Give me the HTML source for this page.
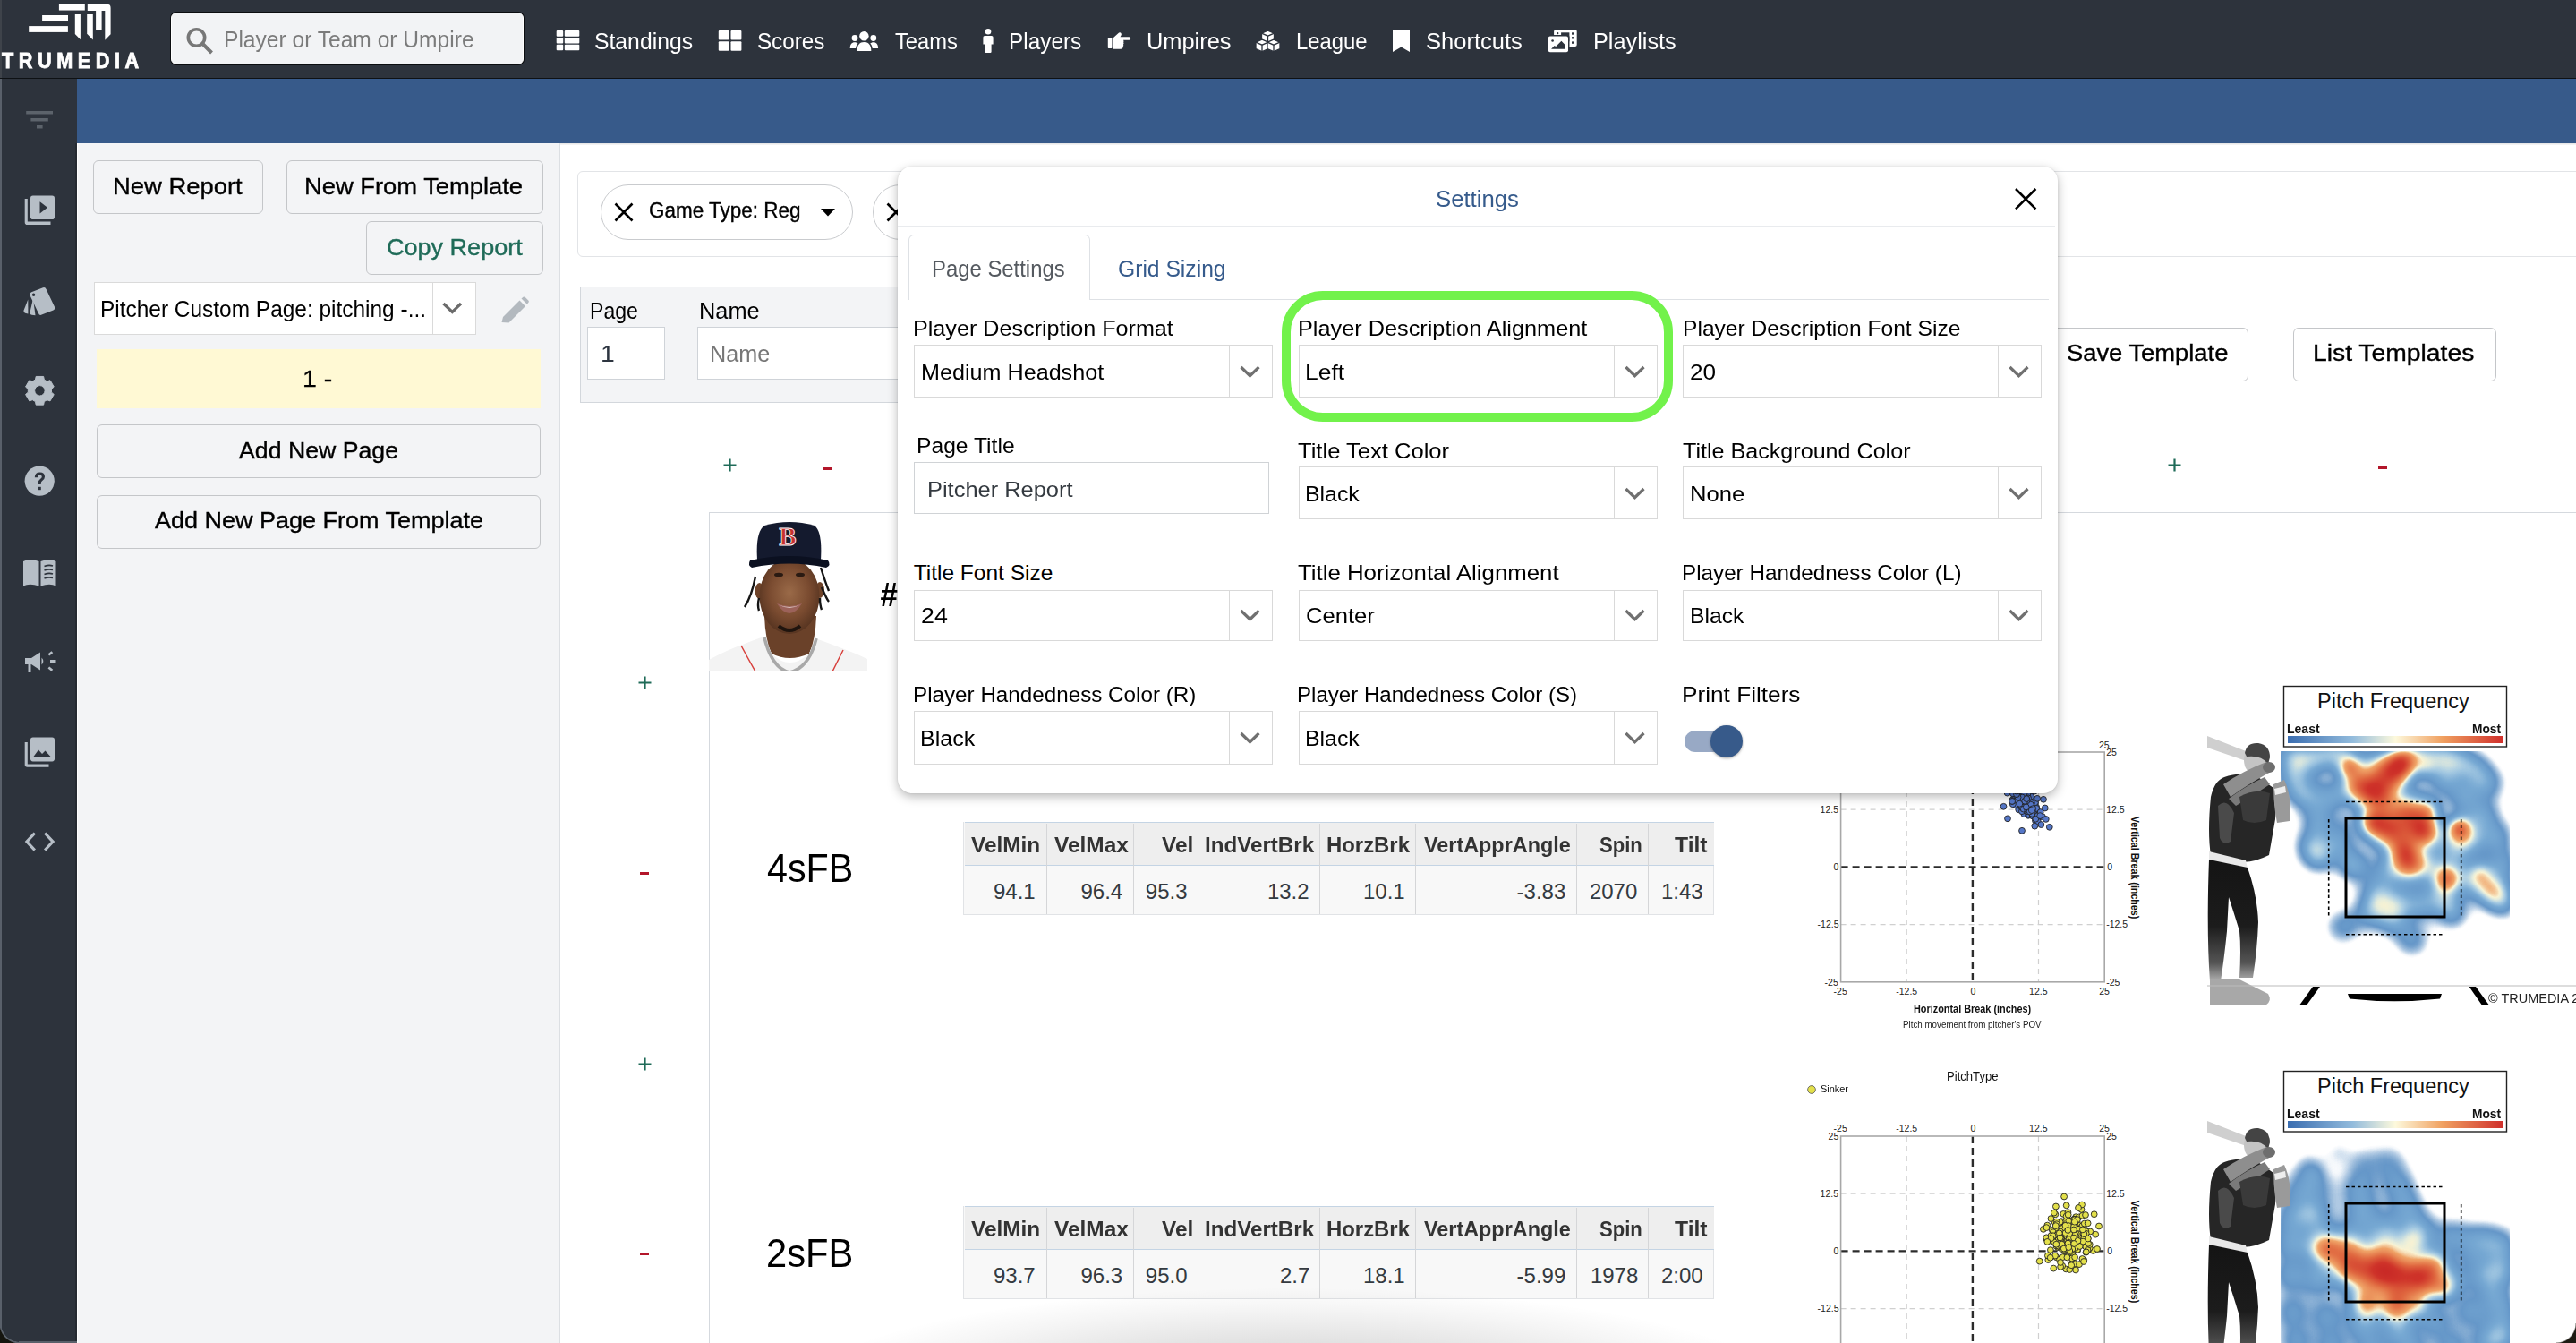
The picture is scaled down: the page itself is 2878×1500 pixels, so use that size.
<!DOCTYPE html>
<html><head><meta charset="utf-8"><title>TruMedia Settings</title>
<style>
html,body{margin:0;padding:0;}
body{width:2878px;height:1500px;position:relative;overflow:hidden;background:#fff;font-family:"Liberation Sans",sans-serif;}
div,span,svg{box-sizing:border-box;}
.t{position:absolute;white-space:pre;line-height:1;transform-origin:0 0;}
.ab{position:absolute;display:block;}
</style></head><body>
<div class="ab" style="left:0px;top:0px;width:2878px;height:87px;background:#2d333c;"></div>
<div class="ab" style="left:0px;top:87px;width:2878px;height:1px;background:#0e1114;"></div>
<div class="ab" style="left:0px;top:88px;width:86px;height:1412px;background:#2d333c;"></div>
<div class="ab" style="left:84px;top:160px;width:2px;height:1340px;background:#252a31;"></div>
<div class="ab" style="left:86px;top:88px;width:2792px;height:72px;background:#375a8a;"></div>
<div class="ab" style="left:86px;top:160px;width:539px;height:1340px;background:#f3f4f6;"></div>
<div class="ab" style="left:86px;top:160px;width:1px;height:1340px;background:#ffffff;"></div>
<div class="ab" style="left:625px;top:160px;width:1px;height:1340px;background:#dcdfe3;"></div>
<div class="ab" style="left:626px;top:160px;width:2252px;height:2px;background:linear-gradient(#e2e2e2,#f8f8f8);"></div>
<div class="ab" style="left:0px;top:88px;width:2px;height:1412px;background:#59606a;"></div>
<div class="ab" style="left:0px;top:0px;width:2px;height:87px;background:#3e434a;"></div>
<svg class="ab" style="left:0px;top:0px;" width="160" height="86" viewBox="0 0 160 86">
<g fill="#fff">
<rect x="32.2" y="29.1" width="43.7" height="6.8"/>
<rect x="47.1" y="17" width="28.9" height="6.7"/>
<rect x="65.9" y="4.9" width="28.9" height="6.65"/>
<polygon points="83.8,16.1 89.9,16.1 89.9,44.2 83.8,38"/>
<polygon points="97.2,16 103.8,16 103.8,44.5 97.2,37.8"/>
<path d="M97.8,4.9 H121 Q123.6,4.9 123.6,9 V38.2 L117.3,44.7 V11.9 H113.6 V33.5 H107.1 V11.9 H97.8 Z"/>
</g></svg>
<span class="t" style="left:2.20px;top:56.62px;font-size:23.5px;color:#fff;font-weight:700;letter-spacing:6px;transform:scaleX(0.9230);-webkit-text-stroke:0.8px #fff;">TRUMEDIA</span>
<div class="ab" style="left:191px;top:13.7px;width:394px;height:58px;background:#f2f3f5;border:1px solid #fff;border-radius:6px;box-shadow:0 0 0 1px #0b0d10;"></div>
<svg class="ab" style="left:205px;top:28px;" width="36" height="36" viewBox="0 0 36 36"><circle cx="14.5" cy="14" r="9.2" fill="none" stroke="#777" stroke-width="3.6"/><line x1="21" y1="20.5" x2="31.5" y2="31" stroke="#777" stroke-width="4"/></svg>
<span class="t" style="left:250.11px;top:30.80px;font-size:26px;color:#7b7b7b;transform:scaleX(0.9454);">Player or Team or Umpire</span>
<svg class="ab" style="left:621px;top:33px;" width="28" height="26" viewBox="0 0 28 26"><g fill="#fff">
<rect x="0.7" y="1.1" width="7.5" height="6.7" rx="1"/><rect x="9.8" y="1.1" width="16.5" height="6.7" rx="1"/>
<rect x="0.7" y="8.9" width="7.5" height="6.5" rx="1"/><rect x="9.8" y="8.9" width="16.5" height="6.5" rx="1"/>
<rect x="0.7" y="16.7" width="7.5" height="6.6" rx="1"/><rect x="9.8" y="16.7" width="16.5" height="6.6" rx="1"/>
</g></svg>
<span class="t" style="left:664.40px;top:33.20px;font-size:26px;color:#fff;transform:scaleX(0.9513);">Standings</span>
<svg class="ab" style="left:802px;top:33px;" width="28" height="26" viewBox="0 0 28 26"><g fill="#fff">
<rect x="0.8" y="1.1" width="11.7" height="10.5" rx="1"/><rect x="14.5" y="1.1" width="11.9" height="10.5" rx="1"/>
<rect x="0.8" y="13.2" width="11.7" height="10.5" rx="1"/><rect x="14.5" y="13.2" width="11.9" height="10.5" rx="1"/>
</g></svg>
<span class="t" style="left:845.64px;top:33.20px;font-size:26px;color:#fff;transform:scaleX(0.9295);">Scores</span>
<svg class="ab" style="left:949px;top:33px;" width="34" height="26" viewBox="0 0 34 26"><g fill="#fff">
<circle cx="16.4" cy="7.2" r="5.2"/>
<path d="M8.5,24 C8.5,17 11.5,14 16.4,14 C21.3,14 24.3,17 24.3,24 Z"/>
<circle cx="6" cy="9.5" r="3.4"/><circle cx="26.8" cy="9.5" r="3.4"/>
<path d="M0.7,21 C0.7,16.5 2.5,14.2 6,14.2 C7.5,14.2 8.5,14.8 9.5,15.5 C8,17 7.3,19 7.1,21 Z"/>
<path d="M32.1,21 C32.1,16.5 30.3,14.2 26.8,14.2 C25.3,14.2 24.3,14.8 23.3,15.5 C24.8,17 25.5,19 25.7,21 Z"/>
</g></svg>
<span class="t" style="left:999.89px;top:33.20px;font-size:26px;color:#fff;transform:scaleX(0.9133);">Teams</span>
<svg class="ab" style="left:1096px;top:31px;" width="16" height="29" viewBox="0 0 16 29"><g fill="#fff">
<circle cx="8" cy="4.3" r="3.3"/>
<path d="M4.2,9 H11.8 Q13.6,9 13.6,10.8 V18.5 H11.6 V26.8 Q11.6,28 10.4,28 H5.6 Q4.4,28 4.4,26.8 V18.5 H2.4 V10.8 Q2.4,9 4.2,9 Z"/>
</g></svg>
<span class="t" style="left:1126.93px;top:33.20px;font-size:26px;color:#fff;transform:scaleX(0.9369);">Players</span>
<svg class="ab" style="left:1236px;top:33px;" width="30" height="26" viewBox="0 0 30 26"><g fill="#fff">
<rect x="1.8" y="9" width="4.6" height="12" rx="0.8"/>
<path d="M7.5,9.5 L13,4.5 Q15,2.5 16.5,4 Q17.5,5.5 16,7.5 L15.5,8.3 H25.5 Q27.2,8.3 27.2,10 Q27.2,11.8 25.5,11.8 H19 Q20,13 19.2,14.3 Q20,15.5 19,16.8 Q19.8,18 18.5,19.3 Q18.7,21.8 16,21.8 H7.5 Z"/>
</g></svg>
<span class="t" style="left:1281.05px;top:33.20px;font-size:26px;color:#fff;transform:scaleX(0.9766);">Umpires</span>
<svg class="ab" style="left:1402px;top:33px;" width="30" height="26" viewBox="0 0 30 26"><g fill="#fff" stroke="#2d333c" stroke-width="1.3" stroke-linejoin="round">
<path d="M14.5,1.2 L21.5,4.2 V11.7 L14.5,14.7 L7.5,11.7 V4.2 Z"/>
<path d="M8,11.2 L15,14.2 V21.7 L8,24.7 L1,21.7 V14.2 Z"/>
<path d="M21,11.2 L28,14.2 V21.7 L21,24.7 L14,21.7 V14.2 Z"/>
</g><g fill="none" stroke="#2d333c" stroke-width="1.3"><path d="M7.5,4.2 L14.5,7.2 L21.5,4.2 M14.5,7.2 V14.7"/><path d="M1,14.2 L8,17.2 L15,14.2 M8,17.2 V24.7"/><path d="M14,14.2 L21,17.2 L28,14.2 M21,17.2 V24.7"/></g>
<g fill="none" stroke="#fff" stroke-width="0"></g></svg>
<span class="t" style="left:1447.66px;top:33.20px;font-size:26px;color:#fff;transform:scaleX(0.9179);">League</span>
<svg class="ab" style="left:1554px;top:32px;" width="23" height="28" viewBox="0 0 23 28"><path fill="#fff" d="M2,1 H21 V26 L11.5,20.5 L2,26 Z"/></svg>
<span class="t" style="left:1593.04px;top:33.20px;font-size:26px;color:#fff;transform:scaleX(0.9813);">Shortcuts</span>
<svg class="ab" style="left:1728px;top:32px;" width="36" height="28" viewBox="0 0 36 28"><rect x="8.1" y="0.9" width="25.6" height="19.2" rx="2" fill="#fff"/>
<rect x="16.1" y="4.3" width="9.3" height="10" fill="#2d333c"/>
<circle cx="12.3" cy="5.2" r="1.1" fill="#2d333c"/>
<rect x="28" y="4.3" width="2.7" height="2.4" fill="#2d333c"/><rect x="28" y="9.1" width="2.7" height="2.4" fill="#2d333c"/><rect x="28" y="14.4" width="2.7" height="2.4" fill="#2d333c"/>
<rect x="0.3" y="7.1" width="25.2" height="20.6" rx="2.5" fill="#2d333c"/>
<rect x="1.8" y="8.6" width="22.2" height="17.6" rx="2" fill="#fff"/>
<path d="M5.1,22.8 L8.7,18.9 L10.2,20.1 L16.4,13.7 L20.7,18.3 V22.8 Z" fill="#2d333c"/>
<circle cx="6.6" cy="13.5" r="1.3" fill="#2d333c"/></svg>
<span class="t" style="left:1779.55px;top:33.20px;font-size:26px;color:#fff;transform:scaleX(0.9728);">Playlists</span>
<svg class="ab" style="left:26px;top:120px;" width="36" height="28" viewBox="0 0 36 28"><g fill="#5c636b"><rect x="3.2" y="4" width="29.8" height="3.5"/><rect x="8.4" y="12" width="19.4" height="3.5"/><rect x="15" y="20" width="6.6" height="3.5"/></g></svg>
<svg class="ab" style="left:26px;top:216px;" width="38" height="38" viewBox="0 0 38 38"><g fill="#b6bec6">
<path d="M1.7,6 H4.8 V31.5 H30.5 V35 H4.5 Q1.7,35 1.7,32.2 Z"/>
<rect x="8" y="2.6" width="27" height="26.4" rx="2.8"/>
</g><path d="M18.5,9.2 L27,15.8 L18.5,22.4 Z" fill="#2d333c"/></svg>
<svg class="ab" style="left:24px;top:318px;" width="40" height="38" viewBox="0 0 40 38"><g fill="#b6bec6">
<path d="M7.3,16.5 L2.5,28.8 Q2,31 4,31.8 L7.4,32.6 Z"/>
<path d="M13,15.5 L9.3,31.5 Q9.2,33.5 11.5,33.8 L15.5,34.2 Z"/>
<path d="M11.2,8.3 L24,3.3 Q26.6,2.4 27.6,5 L37,24.8 Q38,27.3 35.5,28.4 L22.6,33.6 Q20,34.6 19,32 L9.5,12 Q8.5,9.4 11.2,8.3 Z"/>
</g><circle cx="13.6" cy="11.3" r="1.7" fill="#2d333c"/></svg>
<svg class="ab" style="left:26px;top:418px;" width="38" height="38" viewBox="0 0 38 38"><path fill="#b6bec6" stroke="#b6bec6" stroke-width="1" stroke-linejoin="round" fill-rule="evenodd" d="M31.47,16.46 L34.24,14.06 L30.00,6.70 L26.53,7.90 L23.34,6.06 L22.64,2.46 L14.16,2.46 L13.46,6.06 L10.27,7.90 L6.80,6.70 L2.56,14.06 L5.33,16.46 L5.33,20.14 L2.56,22.54 L6.80,29.90 L10.27,28.70 L13.46,30.54 L14.16,34.14 L22.64,34.14 L23.34,30.54 L26.53,28.70 L30.00,29.90 L34.24,22.54 L31.47,20.14 Z M24.10,18.30 A5.7,5.7 0 1 0 12.70,18.30 A5.7,5.7 0 1 0 24.10,18.30 Z"/></svg>
<svg class="ab" style="left:26px;top:519px;" width="38" height="38" viewBox="0 0 38 38"><circle cx="18.2" cy="18.2" r="16.6" fill="#b6bec6"/>
<path d="M12.8,14.2 Q12.8,8.5 18.5,8.5 Q24,8.5 24,13.5 Q24,16.5 21,18.2 Q19.8,19 19.8,21 V22 H16.5 V20.5 Q16.5,17.5 19,16 Q20.8,15 20.8,13.6 Q20.8,11.6 18.4,11.6 Q16,11.6 16,14.2 Z" fill="#2d333c"/>
<rect x="16.5" y="24.8" width="3.3" height="3.4" fill="#2d333c"/></svg>
<svg class="ab" style="left:24px;top:622px;" width="42" height="36" viewBox="0 0 42 36"><g fill="#b6bec6">
<path d="M2,5 Q9,1 19.5,5 V32.5 Q9,29 2,32.5 Z"/>
<path d="M21.5,5 Q32,1 38.5,5 V32.5 Q32,29 21.5,32.5 Z"/>
</g><g stroke="#2d333c" stroke-width="1.6" fill="none"><path d="M25.5,10.5 Q30.5,8.5 35,10"/><path d="M25.5,15 Q30.5,13 35,14.5"/><path d="M25.5,19.5 Q30.5,17.5 35,19"/><path d="M25.5,24 Q30.5,22 35,23.5"/></g></svg>
<svg class="ab" style="left:26px;top:724px;" width="38" height="32" viewBox="0 0 38 32"><g fill="#b6bec6">
<path d="M2,11 H9 L19,4.5 V24.5 L9,18 H8.5 V27 H5.5 V18 H2 Z"/>
<path d="M20.5,10.5 Q24,14.5 20.5,18.5 Z"/>
<rect x="30" y="13" width="6.5" height="3"/>
<path d="M27.5,6.5 L31.5,3.2 L33.2,5.2 L29.2,8.5 Z"/>
<path d="M27.5,22.5 L31.5,25.8 L33.2,23.8 L29.2,20.5 Z"/>
</g></svg>
<svg class="ab" style="left:26px;top:821px;" width="38" height="38" viewBox="0 0 38 38"><g fill="#b6bec6">
<path d="M1.7,8 H4.8 V32.5 H28.5 V35.8 H4.5 Q1.7,35.8 1.7,33 Z"/>
<rect x="8" y="2.4" width="27" height="27" rx="2.8"/>
</g><path d="M11.5,24 L17,16.5 L21,21 L24.5,17.5 L30.5,24 Z" fill="#2d333c"/></svg>
<svg class="ab" style="left:26px;top:926px;" width="38" height="28" viewBox="0 0 38 28"><g fill="none" stroke="#b6bec6" stroke-width="3.3"><path d="M12.8,4.5 L4,14 L12.8,23.5"/><path d="M24.2,4.5 L33,14 L24.2,23.5"/></g></svg>
<div class="ab" style="left:104px;top:179px;width:190px;height:60px;background:#f3f4f6;border:1px solid #c4c6c9;border-radius:6px;"></div>
<span class="t" style="left:125.65px;top:196.02px;font-size:25.5px;color:#000;transform:scaleX(1.0742);-webkit-text-stroke:0.35px currentColor;">New Report</span>
<div class="ab" style="left:319.5px;top:179px;width:287.5px;height:60px;background:#f3f4f6;border:1px solid #c4c6c9;border-radius:6px;"></div>
<span class="t" style="left:340.16px;top:196.02px;font-size:25.5px;color:#000;transform:scaleX(1.0720);-webkit-text-stroke:0.35px currentColor;">New From Template</span>
<div class="ab" style="left:409px;top:247px;width:198px;height:60px;background:#f3f4f6;border:1px solid #c4c6c9;border-radius:6px;"></div>
<span class="t" style="left:431.94px;top:264.32px;font-size:25.5px;color:#1f6b58;transform:scaleX(1.0599);-webkit-text-stroke:0.35px currentColor;">Copy Report</span>
<div class="ab" style="left:104.5px;top:314.5px;width:427px;height:59px;background:#fff;border:1px solid #dadada;"></div>
<div class="ab" style="left:483px;top:315px;width:1px;height:58px;background:#dadada;"></div>
<svg class="ab" style="left:493px;top:336px;" width="25" height="18" viewBox="0 0 25 18"><path d="M2.5,3 L12.3,12.5 L22,3" fill="none" stroke="#6b6b6b" stroke-width="3.2"/></svg>
<span class="t" style="left:111.92px;top:331.70px;font-size:26px;color:#000;transform:scaleX(0.9399);">Pitcher Custom Page: pitching -...</span>
<svg class="ab" style="left:556px;top:328px;" width="38" height="36" viewBox="0 0 38 36"><path fill="#b3b9bf" d="M4.5,29 L6,23 L24.5,4.5 L31,11 L12.5,29.5 Z M26.5,2.5 L28.5,0.8 Q29.5,0 30.5,0.8 L34.5,4.8 Q35.3,5.8 34.5,6.8 L32.8,8.8 Z" transform="translate(0,3)"/></svg>
<div class="ab" style="left:108px;top:390px;width:496px;height:65.5px;background:#fff9d4;"></div>
<span class="t" style="left:337.73px;top:410.55px;font-size:25px;color:#000;transform:scaleX(1.1346);-webkit-text-stroke:0.35px currentColor;">1 -</span>
<div class="ab" style="left:108.25px;top:474.25px;width:495.5px;height:59.5px;background:#f3f4f6;border:1px solid #c4c6c9;border-radius:6px;"></div>
<span class="t" style="left:267.00px;top:491.32px;font-size:25.5px;color:#000;transform:scaleX(1.0462);-webkit-text-stroke:0.35px currentColor;">Add New Page</span>
<div class="ab" style="left:108.25px;top:552.5px;width:495.5px;height:60px;background:#f3f4f6;border:1px solid #c4c6c9;border-radius:6px;"></div>
<span class="t" style="left:172.50px;top:568.83px;font-size:25.5px;color:#000;transform:scaleX(1.0587);-webkit-text-stroke:0.35px currentColor;">Add New Page From Template</span>
<div class="ab" style="left:644.5px;top:191px;width:2300px;height:95.5px;border:1px solid #e2e4e7;border-radius:6px;background:#fff;"></div>
<div class="ab" style="left:671px;top:206px;width:282px;height:62px;border:1px solid #c9cbce;border-radius:31px;background:#fff;"></div>
<svg class="ab" style="left:684px;top:224px;" width="26" height="26" viewBox="0 0 26 26"><path d="M3.5,3.5 L22.5,22.5 M22.5,3.5 L3.5,22.5" stroke="#000" stroke-width="2.6"/></svg>
<span class="t" style="left:725.02px;top:224.25px;font-size:23px;color:#000;transform:scaleX(0.9766);-webkit-text-stroke:0.35px currentColor;">Game Type: Reg</span>
<svg class="ab" style="left:914px;top:230px;" width="22" height="14" viewBox="0 0 22 14"><path d="M3,3 H19 L11,11.5 Z" fill="#000"/></svg>
<div class="ab" style="left:975px;top:206px;width:300px;height:62px;border:1px solid #c9cbce;border-radius:31px;background:#fff;"></div>
<svg class="ab" style="left:988px;top:224px;" width="26" height="26" viewBox="0 0 26 26"><path d="M3.5,3.5 L22.5,22.5 M22.5,3.5 L3.5,22.5" stroke="#000" stroke-width="2.6"/></svg>
<div class="ab" style="left:648px;top:319.5px;width:700px;height:130px;background:#f3f4f6;border:1px solid #d3d7dc;"></div>
<span class="t" style="left:659.22px;top:333.90px;font-size:26px;color:#000;transform:scaleX(0.8879);">Page</span>
<span class="t" style="left:781.25px;top:333.90px;font-size:26px;color:#000;transform:scaleX(0.9742);">Name</span>
<div class="ab" style="left:656px;top:364.5px;width:87px;height:59px;background:#fff;border:1px solid #cfd3d8;"></div>
<span class="t" style="left:670.82px;top:381.50px;font-size:26px;color:#2d3540;transform:scaleX(1.0909);">1</span>
<div class="ab" style="left:779.3px;top:364.5px;width:500px;height:59px;background:#fff;border:1px solid #cfd3d8;"></div>
<span class="t" style="left:793.06px;top:381.50px;font-size:26px;color:#777;transform:scaleX(0.9697);">Name</span>
<div class="ab" style="left:2240px;top:365.5px;width:272px;height:60.5px;background:#fff;border:1px solid #c4c6c9;border-radius:6px;"></div>
<span class="t" style="left:2308.73px;top:382.32px;font-size:25.5px;color:#000;transform:scaleX(1.0723);-webkit-text-stroke:0.35px currentColor;">Save Template</span>
<div class="ab" style="left:2562px;top:365.5px;width:226.5px;height:60.5px;background:#fff;border:1px solid #c4c6c9;border-radius:6px;"></div>
<span class="t" style="left:2584.28px;top:382.32px;font-size:25.5px;color:#000;transform:scaleX(1.1094);-webkit-text-stroke:0.35px currentColor;">List Templates</span>
<svg class="ab" style="left:807.8px;top:512px;" width="15" height="15" viewBox="0 0 15 15"><path d="M7.5,0.5 V14.5 M0.5,7.5 H14.5" stroke="#1f6b58" stroke-width="2.2"/></svg>
<div class="ab" style="left:919px;top:521.6px;width:9.5px;height:3.2px;background:#b3162a;"></div>
<svg class="ab" style="left:2421.6px;top:512.4px;" width="15" height="15" viewBox="0 0 15 15"><path d="M7.5,0.5 V14.5 M0.5,7.5 H14.5" stroke="#1f6b58" stroke-width="2.2"/></svg>
<div class="ab" style="left:2657px;top:521.3px;width:9.5px;height:3.2px;background:#b3162a;"></div>
<svg class="ab" style="left:712.5px;top:755px;" width="15" height="15" viewBox="0 0 15 15"><path d="M7.5,0.5 V14.5 M0.5,7.5 H14.5" stroke="#1f6b58" stroke-width="2.2"/></svg>
<div class="ab" style="left:715px;top:974.1px;width:9.5px;height:3.2px;background:#b3162a;"></div>
<svg class="ab" style="left:712.5px;top:1181.2px;" width="15" height="15" viewBox="0 0 15 15"><path d="M7.5,0.5 V14.5 M0.5,7.5 H14.5" stroke="#1f6b58" stroke-width="2.2"/></svg>
<div class="ab" style="left:715px;top:1399.1px;width:9.5px;height:3.2px;background:#b3162a;"></div>
<div class="ab" style="left:792px;top:572px;width:2086px;height:1px;background:#d5d9de;"></div>
<div class="ab" style="left:792px;top:572px;width:1px;height:928px;background:#d5d9de;"></div>
<svg class="ab" style="left:792px;top:580px;" width="177" height="170" viewBox="0 0 177 170">
<defs><radialGradient id="face" cx="50%" cy="45%" r="60%"><stop offset="0" stop-color="#9a6a48"/><stop offset="0.55" stop-color="#7a4b30"/><stop offset="1" stop-color="#4f2f1d"/></radialGradient></defs>
<path d="M62,108 Q63,135 70,150 Q90,160 112,150 Q119,135 120,108 Z" fill="#6a4129"/>
<path d="M0,170 V157 Q20,146 40,139 Q55,133 62,131 L70,150 Q90,170 112,150 L119,133 Q136,139 151,145 Q165,150 177,156 V170 Z" fill="#f3f3f3"/>
<path d="M62,132 Q70,166 90,171 Q112,166 120,133" stroke="#a9a9a9" stroke-width="3.5" fill="none"/>
<path d="M36,141 Q44,156 52,170 M150,146 Q144,158 138,170" stroke="#d8403c" stroke-width="1.5" fill="none"/>
<ellipse cx="56.5" cy="80" rx="5" ry="9" fill="#6e4329"/><ellipse cx="124" cy="79" rx="5" ry="9" fill="#6e4329"/>
<ellipse cx="90" cy="86" rx="33.5" ry="42" fill="url(#face)"/>
<ellipse cx="78" cy="62" rx="5" ry="2.2" fill="#2a1a12"/><ellipse cx="102" cy="62" rx="5" ry="2.2" fill="#2a1a12"/>
<path d="M76,94 Q90,100 104,94 Q97,105 90,105 Q83,105 76,94 Z" fill="#9c625a"/>
<path d="M78,95.5 Q90,100.5 102,95.5 Q90,102 78,95.5 Z" fill="#efe4e2"/>
<path d="M78,119 Q90,129 102,119" stroke="#1f140e" stroke-width="4" fill="none"/>
<path d="M54,45 Q52,14 62,7 Q90,-1 118,7 Q127,14 125,45 Z" fill="#141a2e"/>
<path d="M46,46 Q90,36 133,46 Q137,51 131,54 Q90,45 48,54 Q43,51 46,46 Z" fill="#0b1020"/>
<text x="88" y="29" font-family="Liberation Serif" font-weight="bold" font-size="29" fill="#c8312f" text-anchor="middle" stroke="#fff" stroke-width="0.8">B</text>
<path d="M52,64 Q48,85 40,98 M56,88 Q54,96 56,102 M125,54 Q130,70 134,80 M126,76 Q132,90 134,92 M124,88 Q124,96 126,101" stroke="#151515" stroke-width="2.4" fill="none"/>
</svg>
<span class="t" style="left:983.03px;top:646.90px;font-size:36px;color:#000;font-weight:700;font-style:italic;transform:scaleX(0.9684);">#</span>
<span class="t" style="left:856.67px;top:948.47px;font-size:44.5px;color:#000;transform:scaleX(0.9267);">4sFB</span>
<span class="t" style="left:855.73px;top:1377.77px;font-size:44.5px;color:#000;transform:scaleX(0.9360);">2sFB</span>
<div class="ab" style="left:1076px;top:918px;width:839.4000000000001px;height:103.5px;background:#f8f8f8;border:1.5px solid #e1e3e6;border-top:none;"></div>
<div class="ab" style="left:1077.5px;top:918px;width:837.9000000000001px;height:48.5px;background:#eeeeee;border-top:1.5px solid #c4d4e4;border-bottom:1.5px solid #c4d4e4;"></div>
<div class="ab" style="left:1169px;top:919.5px;width:1px;height:101px;background:#d5d6d8;"></div>
<div class="ab" style="left:1266px;top:919.5px;width:1px;height:101px;background:#d5d6d8;"></div>
<div class="ab" style="left:1338px;top:919.5px;width:1px;height:101px;background:#d5d6d8;"></div>
<div class="ab" style="left:1474px;top:919.5px;width:1px;height:101px;background:#d5d6d8;"></div>
<div class="ab" style="left:1581px;top:919.5px;width:1px;height:101px;background:#d5d6d8;"></div>
<div class="ab" style="left:1761px;top:919.5px;width:1px;height:101px;background:#d5d6d8;"></div>
<div class="ab" style="left:1841px;top:919.5px;width:1px;height:101px;background:#d5d6d8;"></div>
<span class="t" style="left:1085.00px;top:931.60px;font-size:24px;color:#333;font-weight:700;transform:scaleX(1.0133);">VelMin</span>
<span class="t" style="left:1177.60px;top:931.60px;font-size:24px;color:#333;font-weight:700;transform:scaleX(1.0173);">VelMax</span>
<span class="t" style="left:1297.80px;top:931.60px;font-size:24px;color:#333;font-weight:700;transform:scaleX(1.0152);">Vel</span>
<span class="t" style="left:1345.99px;top:931.60px;font-size:24px;color:#333;font-weight:700;transform:scaleX(1.0059);">IndVertBrk</span>
<span class="t" style="left:1481.91px;top:931.60px;font-size:24px;color:#333;font-weight:700;transform:scaleX(0.9956);">HorzBrk</span>
<span class="t" style="left:1590.70px;top:931.60px;font-size:24px;color:#333;font-weight:700;transform:scaleX(0.9743);">VertApprAngle</span>
<span class="t" style="left:1787.28px;top:931.60px;font-size:24px;color:#333;font-weight:700;transform:scaleX(0.9200);">Spin</span>
<span class="t" style="left:1871.00px;top:931.60px;font-size:24px;color:#333;font-weight:700;transform:scaleX(1.0286);">Tilt</span>
<span class="t" style="left:1110.00px;top:983.60px;font-size:24px;color:#343a40;">94.1</span>
<span class="t" style="left:1207.50px;top:983.60px;font-size:24px;color:#343a40;">96.4</span>
<span class="t" style="left:1279.80px;top:983.60px;font-size:24px;color:#343a40;">95.3</span>
<span class="t" style="left:1415.90px;top:983.60px;font-size:24px;color:#343a40;">13.2</span>
<span class="t" style="left:1523.00px;top:983.60px;font-size:24px;color:#343a40;">10.1</span>
<span class="t" style="left:1694.60px;top:983.60px;font-size:24px;color:#343a40;">-3.83</span>
<span class="t" style="left:1775.90px;top:983.60px;font-size:24px;color:#343a40;">2070</span>
<span class="t" style="left:1855.90px;top:983.60px;font-size:24px;color:#343a40;">1:43</span>
<div class="ab" style="left:1076px;top:1347px;width:839.4000000000001px;height:103.5px;background:#f8f8f8;border:1.5px solid #e1e3e6;border-top:none;"></div>
<div class="ab" style="left:1077.5px;top:1347px;width:837.9000000000001px;height:48.5px;background:#eeeeee;border-top:1.5px solid #c4d4e4;border-bottom:1.5px solid #c4d4e4;"></div>
<div class="ab" style="left:1169px;top:1348.5px;width:1px;height:101px;background:#d5d6d8;"></div>
<div class="ab" style="left:1266px;top:1348.5px;width:1px;height:101px;background:#d5d6d8;"></div>
<div class="ab" style="left:1338px;top:1348.5px;width:1px;height:101px;background:#d5d6d8;"></div>
<div class="ab" style="left:1474px;top:1348.5px;width:1px;height:101px;background:#d5d6d8;"></div>
<div class="ab" style="left:1581px;top:1348.5px;width:1px;height:101px;background:#d5d6d8;"></div>
<div class="ab" style="left:1761px;top:1348.5px;width:1px;height:101px;background:#d5d6d8;"></div>
<div class="ab" style="left:1841px;top:1348.5px;width:1px;height:101px;background:#d5d6d8;"></div>
<span class="t" style="left:1085.00px;top:1360.60px;font-size:24px;color:#333;font-weight:700;transform:scaleX(1.0133);">VelMin</span>
<span class="t" style="left:1177.60px;top:1360.60px;font-size:24px;color:#333;font-weight:700;transform:scaleX(1.0173);">VelMax</span>
<span class="t" style="left:1297.80px;top:1360.60px;font-size:24px;color:#333;font-weight:700;transform:scaleX(1.0152);">Vel</span>
<span class="t" style="left:1345.99px;top:1360.60px;font-size:24px;color:#333;font-weight:700;transform:scaleX(1.0059);">IndVertBrk</span>
<span class="t" style="left:1481.91px;top:1360.60px;font-size:24px;color:#333;font-weight:700;transform:scaleX(0.9956);">HorzBrk</span>
<span class="t" style="left:1590.70px;top:1360.60px;font-size:24px;color:#333;font-weight:700;transform:scaleX(0.9743);">VertApprAngle</span>
<span class="t" style="left:1787.28px;top:1360.60px;font-size:24px;color:#333;font-weight:700;transform:scaleX(0.9200);">Spin</span>
<span class="t" style="left:1871.00px;top:1360.60px;font-size:24px;color:#333;font-weight:700;transform:scaleX(1.0286);">Tilt</span>
<span class="t" style="left:1110.00px;top:1412.60px;font-size:24px;color:#343a40;">93.7</span>
<span class="t" style="left:1207.50px;top:1412.60px;font-size:24px;color:#343a40;">96.3</span>
<span class="t" style="left:1279.80px;top:1412.60px;font-size:24px;color:#343a40;">95.0</span>
<span class="t" style="left:1429.90px;top:1412.60px;font-size:24px;color:#343a40;">2.7</span>
<span class="t" style="left:1523.00px;top:1412.60px;font-size:24px;color:#343a40;">18.1</span>
<span class="t" style="left:1694.60px;top:1412.60px;font-size:24px;color:#343a40;">-5.99</span>
<span class="t" style="left:1776.90px;top:1412.60px;font-size:24px;color:#343a40;">1978</span>
<span class="t" style="left:1855.90px;top:1412.60px;font-size:24px;color:#343a40;">2:00</span>
<svg class="ab" style="left:2020px;top:780.2px;" width="400" height="420" viewBox="0 0 400 420"><line x1="110.2" y1="60.0" x2="110.2" y2="316.8" stroke="#d0d0d0" stroke-width="1.2" stroke-dasharray="6,5"/><line x1="36.6" y1="124.2" x2="331.2" y2="124.2" stroke="#d0d0d0" stroke-width="1.2" stroke-dasharray="6,5"/><line x1="257.5" y1="60.0" x2="257.5" y2="316.8" stroke="#d0d0d0" stroke-width="1.2" stroke-dasharray="6,5"/><line x1="36.6" y1="252.6" x2="331.2" y2="252.6" stroke="#d0d0d0" stroke-width="1.2" stroke-dasharray="6,5"/><line x1="183.9" y1="60.0" x2="183.9" y2="316.8" stroke="#2b2b2b" stroke-width="2.4" stroke-dasharray="8,5"/><line x1="36.6" y1="188.4" x2="331.2" y2="188.4" stroke="#2b2b2b" stroke-width="2.4" stroke-dasharray="8,5"/><rect x="36.6" y="60.0" width="294.6" height="256.8" fill="none" stroke="#a8a8a8" stroke-width="1.6"/><circle cx="242.0" cy="120.1" r="3.4" fill="#5577c8" stroke="#222" stroke-width="0.9"/><circle cx="240.2" cy="112.4" r="3.4" fill="#5577c8" stroke="#222" stroke-width="0.9"/><circle cx="234.1" cy="109.1" r="3.4" fill="#5577c8" stroke="#222" stroke-width="0.9"/><circle cx="254.1" cy="127.6" r="3.4" fill="#5577c8" stroke="#222" stroke-width="0.9"/><circle cx="253.0" cy="125.4" r="3.4" fill="#5577c8" stroke="#222" stroke-width="0.9"/><circle cx="247.0" cy="120.9" r="3.4" fill="#5577c8" stroke="#222" stroke-width="0.9"/><circle cx="230.1" cy="114.8" r="3.4" fill="#5577c8" stroke="#222" stroke-width="0.9"/><circle cx="248.8" cy="124.6" r="3.4" fill="#5577c8" stroke="#222" stroke-width="0.9"/><circle cx="223.4" cy="90.0" r="3.4" fill="#5577c8" stroke="#222" stroke-width="0.9"/><circle cx="233.8" cy="107.0" r="3.4" fill="#5577c8" stroke="#222" stroke-width="0.9"/><circle cx="245.6" cy="118.2" r="3.4" fill="#5577c8" stroke="#222" stroke-width="0.9"/><circle cx="246.1" cy="113.9" r="3.4" fill="#5577c8" stroke="#222" stroke-width="0.9"/><circle cx="246.8" cy="122.4" r="3.4" fill="#5577c8" stroke="#222" stroke-width="0.9"/><circle cx="241.3" cy="129.1" r="3.4" fill="#5577c8" stroke="#222" stroke-width="0.9"/><circle cx="251.0" cy="131.5" r="3.4" fill="#5577c8" stroke="#222" stroke-width="0.9"/><circle cx="235.6" cy="106.0" r="3.4" fill="#5577c8" stroke="#222" stroke-width="0.9"/><circle cx="239.6" cy="113.7" r="3.4" fill="#5577c8" stroke="#222" stroke-width="0.9"/><circle cx="249.3" cy="123.0" r="3.4" fill="#5577c8" stroke="#222" stroke-width="0.9"/><circle cx="236.6" cy="105.0" r="3.4" fill="#5577c8" stroke="#222" stroke-width="0.9"/><circle cx="241.4" cy="125.2" r="3.4" fill="#5577c8" stroke="#222" stroke-width="0.9"/><circle cx="236.3" cy="114.2" r="3.4" fill="#5577c8" stroke="#222" stroke-width="0.9"/><circle cx="243.1" cy="105.2" r="3.4" fill="#5577c8" stroke="#222" stroke-width="0.9"/><circle cx="246.7" cy="129.5" r="3.4" fill="#5577c8" stroke="#222" stroke-width="0.9"/><circle cx="224.1" cy="101.6" r="3.4" fill="#5577c8" stroke="#222" stroke-width="0.9"/><circle cx="240.0" cy="108.4" r="3.4" fill="#5577c8" stroke="#222" stroke-width="0.9"/><circle cx="247.3" cy="119.2" r="3.4" fill="#5577c8" stroke="#222" stroke-width="0.9"/><circle cx="231.9" cy="115.8" r="3.4" fill="#5577c8" stroke="#222" stroke-width="0.9"/><circle cx="251.4" cy="129.8" r="3.4" fill="#5577c8" stroke="#222" stroke-width="0.9"/><circle cx="256.9" cy="129.0" r="3.4" fill="#5577c8" stroke="#222" stroke-width="0.9"/><circle cx="240.8" cy="105.2" r="3.4" fill="#5577c8" stroke="#222" stroke-width="0.9"/><circle cx="247.0" cy="114.7" r="3.4" fill="#5577c8" stroke="#222" stroke-width="0.9"/><circle cx="235.8" cy="102.0" r="3.4" fill="#5577c8" stroke="#222" stroke-width="0.9"/><circle cx="233.0" cy="105.9" r="3.4" fill="#5577c8" stroke="#222" stroke-width="0.9"/><circle cx="249.5" cy="105.3" r="3.4" fill="#5577c8" stroke="#222" stroke-width="0.9"/><circle cx="230.5" cy="110.3" r="3.4" fill="#5577c8" stroke="#222" stroke-width="0.9"/><circle cx="257.4" cy="131.0" r="3.4" fill="#5577c8" stroke="#222" stroke-width="0.9"/><circle cx="219.6" cy="81.4" r="3.4" fill="#5577c8" stroke="#222" stroke-width="0.9"/><circle cx="244.4" cy="112.0" r="3.4" fill="#5577c8" stroke="#222" stroke-width="0.9"/><circle cx="235.4" cy="119.3" r="3.4" fill="#5577c8" stroke="#222" stroke-width="0.9"/><circle cx="253.3" cy="125.0" r="3.4" fill="#5577c8" stroke="#222" stroke-width="0.9"/><circle cx="246.3" cy="122.4" r="3.4" fill="#5577c8" stroke="#222" stroke-width="0.9"/><circle cx="258.9" cy="132.3" r="3.4" fill="#5577c8" stroke="#222" stroke-width="0.9"/><circle cx="249.0" cy="125.1" r="3.4" fill="#5577c8" stroke="#222" stroke-width="0.9"/><circle cx="232.1" cy="119.5" r="3.4" fill="#5577c8" stroke="#222" stroke-width="0.9"/><circle cx="252.9" cy="127.6" r="3.4" fill="#5577c8" stroke="#222" stroke-width="0.9"/><circle cx="223.7" cy="98.8" r="3.4" fill="#5577c8" stroke="#222" stroke-width="0.9"/><circle cx="246.1" cy="104.7" r="3.4" fill="#5577c8" stroke="#222" stroke-width="0.9"/><circle cx="243.9" cy="125.4" r="3.4" fill="#5577c8" stroke="#222" stroke-width="0.9"/><circle cx="235.2" cy="124.2" r="3.4" fill="#5577c8" stroke="#222" stroke-width="0.9"/><circle cx="247.6" cy="118.7" r="3.4" fill="#5577c8" stroke="#222" stroke-width="0.9"/><circle cx="247.5" cy="124.9" r="3.4" fill="#5577c8" stroke="#222" stroke-width="0.9"/><circle cx="246.9" cy="128.4" r="3.4" fill="#5577c8" stroke="#222" stroke-width="0.9"/><circle cx="236.0" cy="108.9" r="3.4" fill="#5577c8" stroke="#222" stroke-width="0.9"/><circle cx="252.4" cy="123.4" r="3.4" fill="#5577c8" stroke="#222" stroke-width="0.9"/><circle cx="237.4" cy="120.5" r="3.4" fill="#5577c8" stroke="#222" stroke-width="0.9"/><circle cx="255.1" cy="121.4" r="3.4" fill="#5577c8" stroke="#222" stroke-width="0.9"/><circle cx="230.2" cy="107.2" r="3.4" fill="#5577c8" stroke="#222" stroke-width="0.9"/><circle cx="240.9" cy="113.1" r="3.4" fill="#5577c8" stroke="#222" stroke-width="0.9"/><circle cx="253.1" cy="115.5" r="3.4" fill="#5577c8" stroke="#222" stroke-width="0.9"/><circle cx="251.2" cy="112.4" r="3.4" fill="#5577c8" stroke="#222" stroke-width="0.9"/><circle cx="237.5" cy="118.0" r="3.4" fill="#5577c8" stroke="#222" stroke-width="0.9"/><circle cx="255.3" cy="131.8" r="3.4" fill="#5577c8" stroke="#222" stroke-width="0.9"/><circle cx="246.5" cy="120.2" r="3.4" fill="#5577c8" stroke="#222" stroke-width="0.9"/><circle cx="245.8" cy="123.2" r="3.4" fill="#5577c8" stroke="#222" stroke-width="0.9"/><circle cx="242.1" cy="118.4" r="3.4" fill="#5577c8" stroke="#222" stroke-width="0.9"/><circle cx="248.2" cy="120.3" r="3.4" fill="#5577c8" stroke="#222" stroke-width="0.9"/><circle cx="251.3" cy="126.8" r="3.4" fill="#5577c8" stroke="#222" stroke-width="0.9"/><circle cx="261.9" cy="132.1" r="3.4" fill="#5577c8" stroke="#222" stroke-width="0.9"/><circle cx="238.2" cy="110.7" r="3.4" fill="#5577c8" stroke="#222" stroke-width="0.9"/><circle cx="245.2" cy="125.5" r="3.4" fill="#5577c8" stroke="#222" stroke-width="0.9"/><circle cx="240.9" cy="118.4" r="3.4" fill="#5577c8" stroke="#222" stroke-width="0.9"/><circle cx="253.1" cy="103.6" r="3.4" fill="#5577c8" stroke="#222" stroke-width="0.9"/><circle cx="233.5" cy="112.3" r="3.4" fill="#5577c8" stroke="#222" stroke-width="0.9"/><circle cx="247.2" cy="121.5" r="3.4" fill="#5577c8" stroke="#222" stroke-width="0.9"/><circle cx="240.8" cy="120.4" r="3.4" fill="#5577c8" stroke="#222" stroke-width="0.9"/><circle cx="244.2" cy="113.5" r="3.4" fill="#5577c8" stroke="#222" stroke-width="0.9"/><circle cx="265.8" cy="134.9" r="3.4" fill="#5577c8" stroke="#222" stroke-width="0.9"/><circle cx="237.8" cy="112.5" r="3.4" fill="#5577c8" stroke="#222" stroke-width="0.9"/><circle cx="240.8" cy="114.8" r="3.4" fill="#5577c8" stroke="#222" stroke-width="0.9"/><circle cx="217.2" cy="95.7" r="3.4" fill="#5577c8" stroke="#222" stroke-width="0.9"/><circle cx="249.2" cy="111.8" r="3.4" fill="#5577c8" stroke="#222" stroke-width="0.9"/><circle cx="244.8" cy="125.5" r="3.4" fill="#5577c8" stroke="#222" stroke-width="0.9"/><circle cx="254.4" cy="136.1" r="3.4" fill="#5577c8" stroke="#222" stroke-width="0.9"/><circle cx="226.8" cy="103.1" r="3.4" fill="#5577c8" stroke="#222" stroke-width="0.9"/><circle cx="241.5" cy="120.7" r="3.4" fill="#5577c8" stroke="#222" stroke-width="0.9"/><circle cx="246.1" cy="97.9" r="3.4" fill="#5577c8" stroke="#222" stroke-width="0.9"/><circle cx="249.2" cy="109.6" r="3.4" fill="#5577c8" stroke="#222" stroke-width="0.9"/><circle cx="245.4" cy="106.8" r="3.4" fill="#5577c8" stroke="#222" stroke-width="0.9"/><circle cx="247.6" cy="129.2" r="3.4" fill="#5577c8" stroke="#222" stroke-width="0.9"/><circle cx="242.1" cy="117.7" r="3.4" fill="#5577c8" stroke="#222" stroke-width="0.9"/><circle cx="250.5" cy="123.0" r="3.4" fill="#5577c8" stroke="#222" stroke-width="0.9"/><circle cx="246.0" cy="130.8" r="3.4" fill="#5577c8" stroke="#222" stroke-width="0.9"/><circle cx="251.7" cy="120.4" r="3.4" fill="#5577c8" stroke="#222" stroke-width="0.9"/><circle cx="264.8" cy="122.5" r="3.4" fill="#5577c8" stroke="#222" stroke-width="0.9"/><circle cx="250.6" cy="119.8" r="3.4" fill="#5577c8" stroke="#222" stroke-width="0.9"/><circle cx="246.0" cy="124.3" r="3.4" fill="#5577c8" stroke="#222" stroke-width="0.9"/><circle cx="246.6" cy="124.2" r="3.4" fill="#5577c8" stroke="#222" stroke-width="0.9"/><circle cx="225.5" cy="93.2" r="3.4" fill="#5577c8" stroke="#222" stroke-width="0.9"/><circle cx="246.1" cy="111.4" r="3.4" fill="#5577c8" stroke="#222" stroke-width="0.9"/><circle cx="230.1" cy="96.6" r="3.4" fill="#5577c8" stroke="#222" stroke-width="0.9"/><circle cx="256.3" cy="131.6" r="3.4" fill="#5577c8" stroke="#222" stroke-width="0.9"/><circle cx="253.9" cy="116.8" r="3.4" fill="#5577c8" stroke="#222" stroke-width="0.9"/><circle cx="240.2" cy="106.0" r="3.4" fill="#5577c8" stroke="#222" stroke-width="0.9"/><circle cx="253.9" cy="136.5" r="3.4" fill="#5577c8" stroke="#222" stroke-width="0.9"/><circle cx="238.9" cy="126.2" r="3.4" fill="#5577c8" stroke="#222" stroke-width="0.9"/><circle cx="251.4" cy="121.1" r="3.4" fill="#5577c8" stroke="#222" stroke-width="0.9"/><circle cx="228.8" cy="118.2" r="3.4" fill="#5577c8" stroke="#222" stroke-width="0.9"/><circle cx="240.6" cy="110.5" r="3.4" fill="#5577c8" stroke="#222" stroke-width="0.9"/><circle cx="247.6" cy="123.1" r="3.4" fill="#5577c8" stroke="#222" stroke-width="0.9"/><circle cx="253.9" cy="116.2" r="3.4" fill="#5577c8" stroke="#222" stroke-width="0.9"/><circle cx="256.9" cy="137.8" r="3.4" fill="#5577c8" stroke="#222" stroke-width="0.9"/><circle cx="255.6" cy="123.9" r="3.4" fill="#5577c8" stroke="#222" stroke-width="0.9"/><circle cx="238.9" cy="122.0" r="3.4" fill="#5577c8" stroke="#222" stroke-width="0.9"/><circle cx="244.3" cy="118.7" r="3.4" fill="#5577c8" stroke="#222" stroke-width="0.9"/><circle cx="255.2" cy="122.9" r="3.4" fill="#5577c8" stroke="#222" stroke-width="0.9"/><circle cx="221.4" cy="99.2" r="3.4" fill="#5577c8" stroke="#222" stroke-width="0.9"/><circle cx="228.4" cy="113.4" r="3.4" fill="#5577c8" stroke="#222" stroke-width="0.9"/><circle cx="244.3" cy="112.9" r="3.4" fill="#5577c8" stroke="#222" stroke-width="0.9"/><circle cx="245.0" cy="124.7" r="3.4" fill="#5577c8" stroke="#222" stroke-width="0.9"/><circle cx="247.0" cy="129.9" r="3.4" fill="#5577c8" stroke="#222" stroke-width="0.9"/><circle cx="245.0" cy="126.3" r="3.4" fill="#5577c8" stroke="#222" stroke-width="0.9"/><circle cx="260.4" cy="141.1" r="3.4" fill="#5577c8" stroke="#222" stroke-width="0.9"/><circle cx="239.2" cy="121.1" r="3.4" fill="#5577c8" stroke="#222" stroke-width="0.9"/><circle cx="223.4" cy="95.2" r="3.4" fill="#5577c8" stroke="#222" stroke-width="0.9"/><circle cx="228.0" cy="115.1" r="3.4" fill="#5577c8" stroke="#222" stroke-width="0.9"/><circle cx="231.9" cy="109.2" r="3.4" fill="#5577c8" stroke="#222" stroke-width="0.9"/><circle cx="241.2" cy="115.4" r="3.4" fill="#5577c8" stroke="#222" stroke-width="0.9"/><circle cx="238.3" cy="115.4" r="3.4" fill="#5577c8" stroke="#222" stroke-width="0.9"/><circle cx="259.2" cy="128.1" r="3.4" fill="#5577c8" stroke="#222" stroke-width="0.9"/><circle cx="250.3" cy="129.5" r="3.4" fill="#5577c8" stroke="#222" stroke-width="0.9"/><circle cx="238.1" cy="103.6" r="3.4" fill="#5577c8" stroke="#222" stroke-width="0.9"/><circle cx="240.7" cy="123.6" r="3.4" fill="#5577c8" stroke="#222" stroke-width="0.9"/><circle cx="226.7" cy="101.2" r="3.4" fill="#5577c8" stroke="#222" stroke-width="0.9"/><circle cx="254.0" cy="130.4" r="3.4" fill="#5577c8" stroke="#222" stroke-width="0.9"/><circle cx="245.1" cy="124.5" r="3.4" fill="#5577c8" stroke="#222" stroke-width="0.9"/><circle cx="241.5" cy="106.6" r="3.4" fill="#5577c8" stroke="#222" stroke-width="0.9"/><circle cx="227.3" cy="101.3" r="3.4" fill="#5577c8" stroke="#222" stroke-width="0.9"/><circle cx="249.9" cy="117.0" r="3.4" fill="#5577c8" stroke="#222" stroke-width="0.9"/><circle cx="233.0" cy="104.0" r="3.4" fill="#5577c8" stroke="#222" stroke-width="0.9"/><circle cx="228.9" cy="106.4" r="3.4" fill="#5577c8" stroke="#222" stroke-width="0.9"/><circle cx="233.3" cy="113.1" r="3.4" fill="#5577c8" stroke="#222" stroke-width="0.9"/><circle cx="222.6" cy="105.6" r="3.4" fill="#5577c8" stroke="#222" stroke-width="0.9"/><circle cx="232.4" cy="94.5" r="3.4" fill="#5577c8" stroke="#222" stroke-width="0.9"/><circle cx="248.8" cy="118.6" r="3.4" fill="#5577c8" stroke="#222" stroke-width="0.9"/><circle cx="220.7" cy="95.0" r="3.4" fill="#5577c8" stroke="#222" stroke-width="0.9"/><circle cx="244.5" cy="114.2" r="3.4" fill="#5577c8" stroke="#222" stroke-width="0.9"/><circle cx="251.9" cy="128.6" r="3.4" fill="#5577c8" stroke="#222" stroke-width="0.9"/><circle cx="249.8" cy="123.9" r="3.4" fill="#5577c8" stroke="#222" stroke-width="0.9"/><circle cx="256.7" cy="131.1" r="3.4" fill="#5577c8" stroke="#222" stroke-width="0.9"/><circle cx="241.9" cy="99.7" r="3.4" fill="#5577c8" stroke="#222" stroke-width="0.9"/><circle cx="254.3" cy="134.7" r="3.4" fill="#5577c8" stroke="#222" stroke-width="0.9"/><circle cx="239.2" cy="110.5" r="3.4" fill="#5577c8" stroke="#222" stroke-width="0.9"/><circle cx="256.1" cy="111.8" r="3.4" fill="#5577c8" stroke="#222" stroke-width="0.9"/><circle cx="253.3" cy="142.7" r="3.4" fill="#5577c8" stroke="#222" stroke-width="0.9"/><circle cx="236.4" cy="117.7" r="3.4" fill="#5577c8" stroke="#222" stroke-width="0.9"/><circle cx="259.7" cy="127.1" r="3.4" fill="#5577c8" stroke="#222" stroke-width="0.9"/><circle cx="250.3" cy="128.8" r="3.4" fill="#5577c8" stroke="#222" stroke-width="0.9"/><circle cx="234.6" cy="110.5" r="3.4" fill="#5577c8" stroke="#222" stroke-width="0.9"/><circle cx="247.7" cy="126.4" r="3.4" fill="#5577c8" stroke="#222" stroke-width="0.9"/><circle cx="242.2" cy="114.7" r="3.4" fill="#5577c8" stroke="#222" stroke-width="0.9"/><circle cx="233.0" cy="107.2" r="3.4" fill="#5577c8" stroke="#222" stroke-width="0.9"/><circle cx="251.3" cy="123.2" r="3.4" fill="#5577c8" stroke="#222" stroke-width="0.9"/><circle cx="233.2" cy="103.6" r="3.4" fill="#5577c8" stroke="#222" stroke-width="0.9"/><circle cx="269.8" cy="143.8" r="3.4" fill="#5577c8" stroke="#222" stroke-width="0.9"/><circle cx="242.3" cy="96.0" r="3.4" fill="#5577c8" stroke="#222" stroke-width="0.9"/><circle cx="249.8" cy="125.1" r="3.4" fill="#5577c8" stroke="#222" stroke-width="0.9"/><circle cx="259.2" cy="131.1" r="3.4" fill="#5577c8" stroke="#222" stroke-width="0.9"/><circle cx="243.7" cy="121.4" r="3.4" fill="#5577c8" stroke="#222" stroke-width="0.9"/><circle cx="228.1" cy="114.9" r="3.4" fill="#5577c8" stroke="#222" stroke-width="0.9"/><circle cx="244.2" cy="112.1" r="3.4" fill="#5577c8" stroke="#222" stroke-width="0.9"/><circle cx="218.5" cy="120.8" r="3.4" fill="#5577c8" stroke="#222" stroke-width="0.9"/><circle cx="223.0" cy="134.3" r="3.4" fill="#5577c8" stroke="#222" stroke-width="0.9"/><circle cx="239.0" cy="147.8" r="3.4" fill="#5577c8" stroke="#222" stroke-width="0.9"/><circle cx="263.0" cy="112.8" r="3.4" fill="#5577c8" stroke="#222" stroke-width="0.9"/></svg>
<span class="t" style="left:2042.60px;top:834.88px;font-size:10.5px;color:#222;">25</span>
<span class="t" style="left:2353.20px;top:834.88px;font-size:10.5px;color:#222;">25</span>
<span class="t" style="left:2033.60px;top:899.08px;font-size:10.5px;color:#222;">12.5</span>
<span class="t" style="left:2353.20px;top:899.08px;font-size:10.5px;color:#222;">12.5</span>
<span class="t" style="left:2048.60px;top:963.28px;font-size:10.5px;color:#222;">0</span>
<span class="t" style="left:2354.20px;top:963.28px;font-size:10.5px;color:#222;">0</span>
<span class="t" style="left:2030.60px;top:1027.47px;font-size:10.5px;color:#222;">-12.5</span>
<span class="t" style="left:2353.20px;top:1027.47px;font-size:10.5px;color:#222;">-12.5</span>
<span class="t" style="left:2038.60px;top:1091.67px;font-size:10.5px;color:#222;">-25</span>
<span class="t" style="left:2353.20px;top:1091.67px;font-size:10.5px;color:#222;">-25</span>
<span class="t" style="left:2048.60px;top:1102.08px;font-size:10.5px;color:#222;">-25</span>
<span class="t" style="left:2118.25px;top:1102.08px;font-size:10.5px;color:#222;">-12.5</span>
<span class="t" style="left:2201.40px;top:1102.08px;font-size:10.5px;color:#222;">0</span>
<span class="t" style="left:2267.05px;top:1102.08px;font-size:10.5px;color:#222;">12.5</span>
<span class="t" style="left:2345.20px;top:1102.08px;font-size:10.5px;color:#222;">25</span>
<span class="t" style="left:2345.00px;top:826.58px;font-size:10.5px;color:#222;">25</span>
<span class="t" style="left:2138.09px;top:1121.30px;font-size:12px;color:#111;font-weight:700;transform:scaleX(0.9063);">Horizontal Break (inches)</span>
<span class="t" style="left:2126.07px;top:1139.38px;font-size:10.5px;color:#222;transform:scaleX(0.9315);">Pitch movement from pitcher's POV</span>
<div class="ab" style="left:2384.5px;top:968.5px;width:0;height:0;"><span class="t" style="left:0;top:0;font-size:12px;font-weight:700;color:#111;transform:translate(-50%,-50%) rotate(90deg) scaleX(0.89);transform-origin:50% 50%;">Vertical Break (inches)</span></div>
<svg class="ab" style="left:2020px;top:1209px;" width="400" height="420" viewBox="0 0 400 420"><line x1="110.2" y1="60.0" x2="110.2" y2="316.8" stroke="#d0d0d0" stroke-width="1.2" stroke-dasharray="6,5"/><line x1="36.6" y1="124.2" x2="331.2" y2="124.2" stroke="#d0d0d0" stroke-width="1.2" stroke-dasharray="6,5"/><line x1="257.5" y1="60.0" x2="257.5" y2="316.8" stroke="#d0d0d0" stroke-width="1.2" stroke-dasharray="6,5"/><line x1="36.6" y1="252.6" x2="331.2" y2="252.6" stroke="#d0d0d0" stroke-width="1.2" stroke-dasharray="6,5"/><line x1="183.9" y1="60.0" x2="183.9" y2="316.8" stroke="#2b2b2b" stroke-width="2.4" stroke-dasharray="8,5"/><line x1="36.6" y1="188.4" x2="331.2" y2="188.4" stroke="#2b2b2b" stroke-width="2.4" stroke-dasharray="8,5"/><rect x="36.6" y="60.0" width="294.6" height="256.8" fill="none" stroke="#a8a8a8" stroke-width="1.6"/><circle cx="308.2" cy="198.4" r="3.4" fill="#e3e04a" stroke="#222" stroke-width="0.9"/><circle cx="272.8" cy="165.0" r="3.4" fill="#e3e04a" stroke="#222" stroke-width="0.9"/><circle cx="294.8" cy="176.5" r="3.4" fill="#e3e04a" stroke="#222" stroke-width="0.9"/><circle cx="285.8" cy="160.8" r="3.4" fill="#e3e04a" stroke="#222" stroke-width="0.9"/><circle cx="318.6" cy="188.0" r="3.4" fill="#e3e04a" stroke="#222" stroke-width="0.9"/><circle cx="275.5" cy="155.8" r="3.4" fill="#e3e04a" stroke="#222" stroke-width="0.9"/><circle cx="313.1" cy="187.4" r="3.4" fill="#e3e04a" stroke="#222" stroke-width="0.9"/><circle cx="314.7" cy="184.9" r="3.4" fill="#e3e04a" stroke="#222" stroke-width="0.9"/><circle cx="279.7" cy="177.5" r="3.4" fill="#e3e04a" stroke="#222" stroke-width="0.9"/><circle cx="262.9" cy="163.9" r="3.4" fill="#e3e04a" stroke="#222" stroke-width="0.9"/><circle cx="290.2" cy="181.1" r="3.4" fill="#e3e04a" stroke="#222" stroke-width="0.9"/><circle cx="281.5" cy="172.3" r="3.4" fill="#e3e04a" stroke="#222" stroke-width="0.9"/><circle cx="297.0" cy="179.1" r="3.4" fill="#e3e04a" stroke="#222" stroke-width="0.9"/><circle cx="299.3" cy="176.8" r="3.4" fill="#e3e04a" stroke="#222" stroke-width="0.9"/><circle cx="286.8" cy="184.7" r="3.4" fill="#e3e04a" stroke="#222" stroke-width="0.9"/><circle cx="291.6" cy="162.8" r="3.4" fill="#e3e04a" stroke="#222" stroke-width="0.9"/><circle cx="282.9" cy="174.0" r="3.4" fill="#e3e04a" stroke="#222" stroke-width="0.9"/><circle cx="289.6" cy="176.1" r="3.4" fill="#e3e04a" stroke="#222" stroke-width="0.9"/><circle cx="291.0" cy="176.4" r="3.4" fill="#e3e04a" stroke="#222" stroke-width="0.9"/><circle cx="289.3" cy="157.0" r="3.4" fill="#e3e04a" stroke="#222" stroke-width="0.9"/><circle cx="296.5" cy="188.2" r="3.4" fill="#e3e04a" stroke="#222" stroke-width="0.9"/><circle cx="296.7" cy="171.4" r="3.4" fill="#e3e04a" stroke="#222" stroke-width="0.9"/><circle cx="296.8" cy="161.0" r="3.4" fill="#e3e04a" stroke="#222" stroke-width="0.9"/><circle cx="266.4" cy="174.8" r="3.4" fill="#e3e04a" stroke="#222" stroke-width="0.9"/><circle cx="278.9" cy="184.0" r="3.4" fill="#e3e04a" stroke="#222" stroke-width="0.9"/><circle cx="276.9" cy="138.5" r="3.4" fill="#e3e04a" stroke="#222" stroke-width="0.9"/><circle cx="277.5" cy="195.3" r="3.4" fill="#e3e04a" stroke="#222" stroke-width="0.9"/><circle cx="286.0" cy="155.5" r="3.4" fill="#e3e04a" stroke="#222" stroke-width="0.9"/><circle cx="281.1" cy="181.0" r="3.4" fill="#e3e04a" stroke="#222" stroke-width="0.9"/><circle cx="297.5" cy="176.4" r="3.4" fill="#e3e04a" stroke="#222" stroke-width="0.9"/><circle cx="310.3" cy="183.5" r="3.4" fill="#e3e04a" stroke="#222" stroke-width="0.9"/><circle cx="290.7" cy="182.1" r="3.4" fill="#e3e04a" stroke="#222" stroke-width="0.9"/><circle cx="312.5" cy="187.1" r="3.4" fill="#e3e04a" stroke="#222" stroke-width="0.9"/><circle cx="304.3" cy="159.4" r="3.4" fill="#e3e04a" stroke="#222" stroke-width="0.9"/><circle cx="289.1" cy="183.9" r="3.4" fill="#e3e04a" stroke="#222" stroke-width="0.9"/><circle cx="287.1" cy="188.4" r="3.4" fill="#e3e04a" stroke="#222" stroke-width="0.9"/><circle cx="298.8" cy="186.3" r="3.4" fill="#e3e04a" stroke="#222" stroke-width="0.9"/><circle cx="288.2" cy="208.4" r="3.4" fill="#e3e04a" stroke="#222" stroke-width="0.9"/><circle cx="307.1" cy="171.1" r="3.4" fill="#e3e04a" stroke="#222" stroke-width="0.9"/><circle cx="292.2" cy="209.0" r="3.4" fill="#e3e04a" stroke="#222" stroke-width="0.9"/><circle cx="286.5" cy="185.8" r="3.4" fill="#e3e04a" stroke="#222" stroke-width="0.9"/><circle cx="303.7" cy="174.1" r="3.4" fill="#e3e04a" stroke="#222" stroke-width="0.9"/><circle cx="275.8" cy="176.5" r="3.4" fill="#e3e04a" stroke="#222" stroke-width="0.9"/><circle cx="295.7" cy="189.3" r="3.4" fill="#e3e04a" stroke="#222" stroke-width="0.9"/><circle cx="301.2" cy="174.3" r="3.4" fill="#e3e04a" stroke="#222" stroke-width="0.9"/><circle cx="302.1" cy="181.3" r="3.4" fill="#e3e04a" stroke="#222" stroke-width="0.9"/><circle cx="293.7" cy="174.7" r="3.4" fill="#e3e04a" stroke="#222" stroke-width="0.9"/><circle cx="287.8" cy="183.3" r="3.4" fill="#e3e04a" stroke="#222" stroke-width="0.9"/><circle cx="277.3" cy="165.5" r="3.4" fill="#e3e04a" stroke="#222" stroke-width="0.9"/><circle cx="291.1" cy="154.2" r="3.4" fill="#e3e04a" stroke="#222" stroke-width="0.9"/><circle cx="285.3" cy="146.9" r="3.4" fill="#e3e04a" stroke="#222" stroke-width="0.9"/><circle cx="282.1" cy="181.7" r="3.4" fill="#e3e04a" stroke="#222" stroke-width="0.9"/><circle cx="298.4" cy="173.3" r="3.4" fill="#e3e04a" stroke="#222" stroke-width="0.9"/><circle cx="288.0" cy="154.9" r="3.4" fill="#e3e04a" stroke="#222" stroke-width="0.9"/><circle cx="314.8" cy="181.0" r="3.4" fill="#e3e04a" stroke="#222" stroke-width="0.9"/><circle cx="305.2" cy="162.1" r="3.4" fill="#e3e04a" stroke="#222" stroke-width="0.9"/><circle cx="288.6" cy="149.4" r="3.4" fill="#e3e04a" stroke="#222" stroke-width="0.9"/><circle cx="301.1" cy="186.6" r="3.4" fill="#e3e04a" stroke="#222" stroke-width="0.9"/><circle cx="266.3" cy="173.3" r="3.4" fill="#e3e04a" stroke="#222" stroke-width="0.9"/><circle cx="299.2" cy="150.2" r="3.4" fill="#e3e04a" stroke="#222" stroke-width="0.9"/><circle cx="267.3" cy="159.6" r="3.4" fill="#e3e04a" stroke="#222" stroke-width="0.9"/><circle cx="282.8" cy="155.1" r="3.4" fill="#e3e04a" stroke="#222" stroke-width="0.9"/><circle cx="291.4" cy="177.4" r="3.4" fill="#e3e04a" stroke="#222" stroke-width="0.9"/><circle cx="299.2" cy="183.5" r="3.4" fill="#e3e04a" stroke="#222" stroke-width="0.9"/><circle cx="310.5" cy="189.7" r="3.4" fill="#e3e04a" stroke="#222" stroke-width="0.9"/><circle cx="273.9" cy="167.2" r="3.4" fill="#e3e04a" stroke="#222" stroke-width="0.9"/><circle cx="277.2" cy="159.5" r="3.4" fill="#e3e04a" stroke="#222" stroke-width="0.9"/><circle cx="289.9" cy="174.1" r="3.4" fill="#e3e04a" stroke="#222" stroke-width="0.9"/><circle cx="297.4" cy="152.6" r="3.4" fill="#e3e04a" stroke="#222" stroke-width="0.9"/><circle cx="274.9" cy="173.7" r="3.4" fill="#e3e04a" stroke="#222" stroke-width="0.9"/><circle cx="288.4" cy="169.8" r="3.4" fill="#e3e04a" stroke="#222" stroke-width="0.9"/><circle cx="290.2" cy="163.7" r="3.4" fill="#e3e04a" stroke="#222" stroke-width="0.9"/><circle cx="300.1" cy="178.8" r="3.4" fill="#e3e04a" stroke="#222" stroke-width="0.9"/><circle cx="289.9" cy="164.9" r="3.4" fill="#e3e04a" stroke="#222" stroke-width="0.9"/><circle cx="288.7" cy="137.3" r="3.4" fill="#e3e04a" stroke="#222" stroke-width="0.9"/><circle cx="278.2" cy="174.5" r="3.4" fill="#e3e04a" stroke="#222" stroke-width="0.9"/><circle cx="271.4" cy="176.7" r="3.4" fill="#e3e04a" stroke="#222" stroke-width="0.9"/><circle cx="292.9" cy="155.4" r="3.4" fill="#e3e04a" stroke="#222" stroke-width="0.9"/><circle cx="287.7" cy="169.8" r="3.4" fill="#e3e04a" stroke="#222" stroke-width="0.9"/><circle cx="297.0" cy="182.3" r="3.4" fill="#e3e04a" stroke="#222" stroke-width="0.9"/><circle cx="290.5" cy="162.5" r="3.4" fill="#e3e04a" stroke="#222" stroke-width="0.9"/><circle cx="289.1" cy="173.1" r="3.4" fill="#e3e04a" stroke="#222" stroke-width="0.9"/><circle cx="300.5" cy="178.0" r="3.4" fill="#e3e04a" stroke="#222" stroke-width="0.9"/><circle cx="281.6" cy="155.7" r="3.4" fill="#e3e04a" stroke="#222" stroke-width="0.9"/><circle cx="286.1" cy="164.0" r="3.4" fill="#e3e04a" stroke="#222" stroke-width="0.9"/><circle cx="276.5" cy="172.4" r="3.4" fill="#e3e04a" stroke="#222" stroke-width="0.9"/><circle cx="284.6" cy="175.4" r="3.4" fill="#e3e04a" stroke="#222" stroke-width="0.9"/><circle cx="297.8" cy="168.4" r="3.4" fill="#e3e04a" stroke="#222" stroke-width="0.9"/><circle cx="321.2" cy="169.7" r="3.4" fill="#e3e04a" stroke="#222" stroke-width="0.9"/><circle cx="305.3" cy="175.6" r="3.4" fill="#e3e04a" stroke="#222" stroke-width="0.9"/><circle cx="305.5" cy="141.9" r="3.4" fill="#e3e04a" stroke="#222" stroke-width="0.9"/><circle cx="281.2" cy="177.3" r="3.4" fill="#e3e04a" stroke="#222" stroke-width="0.9"/><circle cx="298.8" cy="205.5" r="3.4" fill="#e3e04a" stroke="#222" stroke-width="0.9"/><circle cx="295.2" cy="191.3" r="3.4" fill="#e3e04a" stroke="#222" stroke-width="0.9"/><circle cx="301.0" cy="186.8" r="3.4" fill="#e3e04a" stroke="#222" stroke-width="0.9"/><circle cx="297.6" cy="171.9" r="3.4" fill="#e3e04a" stroke="#222" stroke-width="0.9"/><circle cx="297.6" cy="159.4" r="3.4" fill="#e3e04a" stroke="#222" stroke-width="0.9"/><circle cx="306.4" cy="160.3" r="3.4" fill="#e3e04a" stroke="#222" stroke-width="0.9"/><circle cx="294.2" cy="202.6" r="3.4" fill="#e3e04a" stroke="#222" stroke-width="0.9"/><circle cx="288.1" cy="174.3" r="3.4" fill="#e3e04a" stroke="#222" stroke-width="0.9"/><circle cx="306.1" cy="174.4" r="3.4" fill="#e3e04a" stroke="#222" stroke-width="0.9"/><circle cx="280.5" cy="177.5" r="3.4" fill="#e3e04a" stroke="#222" stroke-width="0.9"/><circle cx="298.6" cy="183.6" r="3.4" fill="#e3e04a" stroke="#222" stroke-width="0.9"/><circle cx="281.0" cy="197.7" r="3.4" fill="#e3e04a" stroke="#222" stroke-width="0.9"/><circle cx="312.7" cy="174.2" r="3.4" fill="#e3e04a" stroke="#222" stroke-width="0.9"/><circle cx="294.5" cy="168.2" r="3.4" fill="#e3e04a" stroke="#222" stroke-width="0.9"/><circle cx="309.4" cy="164.5" r="3.4" fill="#e3e04a" stroke="#222" stroke-width="0.9"/><circle cx="299.8" cy="167.5" r="3.4" fill="#e3e04a" stroke="#222" stroke-width="0.9"/><circle cx="282.0" cy="183.7" r="3.4" fill="#e3e04a" stroke="#222" stroke-width="0.9"/><circle cx="308.3" cy="173.9" r="3.4" fill="#e3e04a" stroke="#222" stroke-width="0.9"/><circle cx="282.2" cy="185.0" r="3.4" fill="#e3e04a" stroke="#222" stroke-width="0.9"/><circle cx="290.4" cy="178.2" r="3.4" fill="#e3e04a" stroke="#222" stroke-width="0.9"/><circle cx="310.8" cy="189.3" r="3.4" fill="#e3e04a" stroke="#222" stroke-width="0.9"/><circle cx="284.2" cy="204.8" r="3.4" fill="#e3e04a" stroke="#222" stroke-width="0.9"/><circle cx="291.0" cy="184.6" r="3.4" fill="#e3e04a" stroke="#222" stroke-width="0.9"/><circle cx="282.6" cy="173.4" r="3.4" fill="#e3e04a" stroke="#222" stroke-width="0.9"/><circle cx="268.3" cy="198.1" r="3.4" fill="#e3e04a" stroke="#222" stroke-width="0.9"/><circle cx="308.8" cy="157.6" r="3.4" fill="#e3e04a" stroke="#222" stroke-width="0.9"/><circle cx="271.4" cy="152.1" r="3.4" fill="#e3e04a" stroke="#222" stroke-width="0.9"/><circle cx="306.3" cy="167.8" r="3.4" fill="#e3e04a" stroke="#222" stroke-width="0.9"/><circle cx="290.2" cy="169.8" r="3.4" fill="#e3e04a" stroke="#222" stroke-width="0.9"/><circle cx="289.4" cy="159.3" r="3.4" fill="#e3e04a" stroke="#222" stroke-width="0.9"/><circle cx="291.3" cy="154.6" r="3.4" fill="#e3e04a" stroke="#222" stroke-width="0.9"/><circle cx="290.1" cy="178.2" r="3.4" fill="#e3e04a" stroke="#222" stroke-width="0.9"/><circle cx="297.1" cy="170.9" r="3.4" fill="#e3e04a" stroke="#222" stroke-width="0.9"/><circle cx="279.3" cy="176.2" r="3.4" fill="#e3e04a" stroke="#222" stroke-width="0.9"/><circle cx="284.7" cy="195.1" r="3.4" fill="#e3e04a" stroke="#222" stroke-width="0.9"/><circle cx="301.0" cy="172.4" r="3.4" fill="#e3e04a" stroke="#222" stroke-width="0.9"/><circle cx="284.9" cy="164.5" r="3.4" fill="#e3e04a" stroke="#222" stroke-width="0.9"/><circle cx="278.8" cy="169.2" r="3.4" fill="#e3e04a" stroke="#222" stroke-width="0.9"/><circle cx="294.8" cy="181.0" r="3.4" fill="#e3e04a" stroke="#222" stroke-width="0.9"/><circle cx="298.4" cy="202.3" r="3.4" fill="#e3e04a" stroke="#222" stroke-width="0.9"/><circle cx="281.8" cy="174.2" r="3.4" fill="#e3e04a" stroke="#222" stroke-width="0.9"/><circle cx="284.2" cy="176.3" r="3.4" fill="#e3e04a" stroke="#222" stroke-width="0.9"/><circle cx="293.0" cy="179.5" r="3.4" fill="#e3e04a" stroke="#222" stroke-width="0.9"/><circle cx="287.9" cy="178.9" r="3.4" fill="#e3e04a" stroke="#222" stroke-width="0.9"/><circle cx="291.7" cy="184.4" r="3.4" fill="#e3e04a" stroke="#222" stroke-width="0.9"/><circle cx="266.4" cy="162.1" r="3.4" fill="#e3e04a" stroke="#222" stroke-width="0.9"/><circle cx="291.0" cy="160.1" r="3.4" fill="#e3e04a" stroke="#222" stroke-width="0.9"/><circle cx="277.4" cy="182.5" r="3.4" fill="#e3e04a" stroke="#222" stroke-width="0.9"/><circle cx="282.6" cy="182.6" r="3.4" fill="#e3e04a" stroke="#222" stroke-width="0.9"/><circle cx="300.7" cy="178.1" r="3.4" fill="#e3e04a" stroke="#222" stroke-width="0.9"/><circle cx="297.6" cy="172.6" r="3.4" fill="#e3e04a" stroke="#222" stroke-width="0.9"/><circle cx="272.7" cy="173.6" r="3.4" fill="#e3e04a" stroke="#222" stroke-width="0.9"/><circle cx="296.9" cy="166.9" r="3.4" fill="#e3e04a" stroke="#222" stroke-width="0.9"/><circle cx="289.7" cy="184.1" r="3.4" fill="#e3e04a" stroke="#222" stroke-width="0.9"/><circle cx="279.6" cy="182.6" r="3.4" fill="#e3e04a" stroke="#222" stroke-width="0.9"/><circle cx="315.2" cy="166.5" r="3.4" fill="#e3e04a" stroke="#222" stroke-width="0.9"/><circle cx="292.9" cy="172.0" r="3.4" fill="#e3e04a" stroke="#222" stroke-width="0.9"/><circle cx="311.0" cy="178.3" r="3.4" fill="#e3e04a" stroke="#222" stroke-width="0.9"/><circle cx="302.7" cy="164.7" r="3.4" fill="#e3e04a" stroke="#222" stroke-width="0.9"/><circle cx="290.8" cy="173.9" r="3.4" fill="#e3e04a" stroke="#222" stroke-width="0.9"/><circle cx="267.9" cy="193.5" r="3.4" fill="#e3e04a" stroke="#222" stroke-width="0.9"/><circle cx="302.7" cy="150.4" r="3.4" fill="#e3e04a" stroke="#222" stroke-width="0.9"/><circle cx="300.7" cy="172.2" r="3.4" fill="#e3e04a" stroke="#222" stroke-width="0.9"/><circle cx="296.8" cy="178.9" r="3.4" fill="#e3e04a" stroke="#222" stroke-width="0.9"/><circle cx="271.5" cy="171.1" r="3.4" fill="#e3e04a" stroke="#222" stroke-width="0.9"/><circle cx="310.4" cy="166.2" r="3.4" fill="#e3e04a" stroke="#222" stroke-width="0.9"/><circle cx="277.7" cy="155.6" r="3.4" fill="#e3e04a" stroke="#222" stroke-width="0.9"/><circle cx="275.1" cy="178.5" r="3.4" fill="#e3e04a" stroke="#222" stroke-width="0.9"/><circle cx="313.0" cy="179.8" r="3.4" fill="#e3e04a" stroke="#222" stroke-width="0.9"/><circle cx="294.2" cy="204.2" r="3.4" fill="#e3e04a" stroke="#222" stroke-width="0.9"/><circle cx="284.2" cy="164.9" r="3.4" fill="#e3e04a" stroke="#222" stroke-width="0.9"/><circle cx="297.9" cy="181.4" r="3.4" fill="#e3e04a" stroke="#222" stroke-width="0.9"/><circle cx="277.8" cy="158.2" r="3.4" fill="#e3e04a" stroke="#222" stroke-width="0.9"/><circle cx="294.8" cy="177.3" r="3.4" fill="#e3e04a" stroke="#222" stroke-width="0.9"/><circle cx="274.0" cy="171.3" r="3.4" fill="#e3e04a" stroke="#222" stroke-width="0.9"/><circle cx="283.9" cy="180.2" r="3.4" fill="#e3e04a" stroke="#222" stroke-width="0.9"/><circle cx="289.5" cy="172.8" r="3.4" fill="#e3e04a" stroke="#222" stroke-width="0.9"/><circle cx="286.4" cy="188.2" r="3.4" fill="#e3e04a" stroke="#222" stroke-width="0.9"/><circle cx="309.1" cy="169.0" r="3.4" fill="#e3e04a" stroke="#222" stroke-width="0.9"/><circle cx="302.0" cy="163.8" r="3.4" fill="#e3e04a" stroke="#222" stroke-width="0.9"/><circle cx="291.9" cy="184.1" r="3.4" fill="#e3e04a" stroke="#222" stroke-width="0.9"/><circle cx="310.7" cy="168.8" r="3.4" fill="#e3e04a" stroke="#222" stroke-width="0.9"/><circle cx="290.0" cy="176.7" r="3.4" fill="#e3e04a" stroke="#222" stroke-width="0.9"/><circle cx="271.5" cy="174.2" r="3.4" fill="#e3e04a" stroke="#222" stroke-width="0.9"/><circle cx="282.2" cy="179.0" r="3.4" fill="#e3e04a" stroke="#222" stroke-width="0.9"/><circle cx="276.3" cy="147.3" r="3.4" fill="#e3e04a" stroke="#222" stroke-width="0.9"/><circle cx="291.5" cy="177.5" r="3.4" fill="#e3e04a" stroke="#222" stroke-width="0.9"/><circle cx="283.9" cy="186.0" r="3.4" fill="#e3e04a" stroke="#222" stroke-width="0.9"/><circle cx="287.4" cy="165.8" r="3.4" fill="#e3e04a" stroke="#222" stroke-width="0.9"/><circle cx="297.2" cy="152.8" r="3.4" fill="#e3e04a" stroke="#222" stroke-width="0.9"/><circle cx="282.2" cy="173.7" r="3.4" fill="#e3e04a" stroke="#222" stroke-width="0.9"/><circle cx="302.0" cy="171.8" r="3.4" fill="#e3e04a" stroke="#222" stroke-width="0.9"/><circle cx="295.0" cy="165.2" r="3.4" fill="#e3e04a" stroke="#222" stroke-width="0.9"/><circle cx="294.9" cy="196.5" r="3.4" fill="#e3e04a" stroke="#222" stroke-width="0.9"/><circle cx="282.1" cy="205.9" r="3.4" fill="#e3e04a" stroke="#222" stroke-width="0.9"/><circle cx="282.6" cy="174.2" r="3.4" fill="#e3e04a" stroke="#222" stroke-width="0.9"/><circle cx="293.3" cy="187.8" r="3.4" fill="#e3e04a" stroke="#222" stroke-width="0.9"/><circle cx="274.9" cy="145.6" r="3.4" fill="#e3e04a" stroke="#222" stroke-width="0.9"/><circle cx="298.9" cy="184.7" r="3.4" fill="#e3e04a" stroke="#222" stroke-width="0.9"/><circle cx="299.1" cy="209.5" r="3.4" fill="#e3e04a" stroke="#222" stroke-width="0.9"/><circle cx="293.7" cy="177.4" r="3.4" fill="#e3e04a" stroke="#222" stroke-width="0.9"/><circle cx="303.1" cy="179.0" r="3.4" fill="#e3e04a" stroke="#222" stroke-width="0.9"/><circle cx="312.6" cy="157.3" r="3.4" fill="#e3e04a" stroke="#222" stroke-width="0.9"/><circle cx="286.1" cy="127.5" r="3.4" fill="#e3e04a" stroke="#222" stroke-width="0.9"/><circle cx="301.6" cy="169.0" r="3.4" fill="#e3e04a" stroke="#222" stroke-width="0.9"/><circle cx="303.0" cy="203.1" r="3.4" fill="#e3e04a" stroke="#222" stroke-width="0.9"/><circle cx="290.9" cy="170.6" r="3.4" fill="#e3e04a" stroke="#222" stroke-width="0.9"/><circle cx="284.5" cy="162.7" r="3.4" fill="#e3e04a" stroke="#222" stroke-width="0.9"/><circle cx="282.8" cy="182.6" r="3.4" fill="#e3e04a" stroke="#222" stroke-width="0.9"/><circle cx="291.5" cy="174.9" r="3.4" fill="#e3e04a" stroke="#222" stroke-width="0.9"/><circle cx="288.7" cy="186.3" r="3.4" fill="#e3e04a" stroke="#222" stroke-width="0.9"/><circle cx="297.4" cy="172.1" r="3.4" fill="#e3e04a" stroke="#222" stroke-width="0.9"/><circle cx="299.6" cy="172.0" r="3.4" fill="#e3e04a" stroke="#222" stroke-width="0.9"/><circle cx="276.0" cy="193.6" r="3.4" fill="#e3e04a" stroke="#222" stroke-width="0.9"/><circle cx="297.0" cy="161.1" r="3.4" fill="#e3e04a" stroke="#222" stroke-width="0.9"/><circle cx="305.0" cy="178.7" r="3.4" fill="#e3e04a" stroke="#222" stroke-width="0.9"/><circle cx="270.7" cy="195.7" r="3.4" fill="#e3e04a" stroke="#222" stroke-width="0.9"/><circle cx="295.3" cy="186.0" r="3.4" fill="#e3e04a" stroke="#222" stroke-width="0.9"/><circle cx="293.6" cy="172.0" r="3.4" fill="#e3e04a" stroke="#222" stroke-width="0.9"/><circle cx="270.9" cy="187.1" r="3.4" fill="#e3e04a" stroke="#222" stroke-width="0.9"/><circle cx="291.4" cy="170.1" r="3.4" fill="#e3e04a" stroke="#222" stroke-width="0.9"/><circle cx="295.6" cy="175.1" r="3.4" fill="#e3e04a" stroke="#222" stroke-width="0.9"/><circle cx="299.8" cy="169.0" r="3.4" fill="#e3e04a" stroke="#222" stroke-width="0.9"/><circle cx="290.5" cy="145.1" r="3.4" fill="#e3e04a" stroke="#222" stroke-width="0.9"/><circle cx="285.5" cy="183.1" r="3.4" fill="#e3e04a" stroke="#222" stroke-width="0.9"/><circle cx="308.4" cy="169.1" r="3.4" fill="#e3e04a" stroke="#222" stroke-width="0.9"/><circle cx="289.4" cy="195.4" r="3.4" fill="#e3e04a" stroke="#222" stroke-width="0.9"/><circle cx="286.8" cy="183.9" r="3.4" fill="#e3e04a" stroke="#222" stroke-width="0.9"/><circle cx="312.8" cy="174.5" r="3.4" fill="#e3e04a" stroke="#222" stroke-width="0.9"/><circle cx="306.9" cy="164.4" r="3.4" fill="#e3e04a" stroke="#222" stroke-width="0.9"/><circle cx="293.7" cy="173.0" r="3.4" fill="#e3e04a" stroke="#222" stroke-width="0.9"/><circle cx="292.5" cy="189.3" r="3.4" fill="#e3e04a" stroke="#222" stroke-width="0.9"/><circle cx="283.5" cy="180.7" r="3.4" fill="#e3e04a" stroke="#222" stroke-width="0.9"/><circle cx="277.3" cy="180.7" r="3.4" fill="#e3e04a" stroke="#222" stroke-width="0.9"/><circle cx="298.4" cy="170.3" r="3.4" fill="#e3e04a" stroke="#222" stroke-width="0.9"/><circle cx="297.9" cy="153.1" r="3.4" fill="#e3e04a" stroke="#222" stroke-width="0.9"/><circle cx="300.9" cy="153.1" r="3.4" fill="#e3e04a" stroke="#222" stroke-width="0.9"/><circle cx="281.9" cy="166.5" r="3.4" fill="#e3e04a" stroke="#222" stroke-width="0.9"/><circle cx="285.8" cy="185.6" r="3.4" fill="#e3e04a" stroke="#222" stroke-width="0.9"/><circle cx="292.1" cy="168.6" r="3.4" fill="#e3e04a" stroke="#222" stroke-width="0.9"/><circle cx="298.1" cy="195.3" r="3.4" fill="#e3e04a" stroke="#222" stroke-width="0.9"/><circle cx="291.1" cy="178.9" r="3.4" fill="#e3e04a" stroke="#222" stroke-width="0.9"/><circle cx="307.1" cy="177.6" r="3.4" fill="#e3e04a" stroke="#222" stroke-width="0.9"/><circle cx="274.3" cy="207.6" r="3.4" fill="#e3e04a" stroke="#222" stroke-width="0.9"/><circle cx="319.7" cy="147.2" r="3.4" fill="#e3e04a" stroke="#222" stroke-width="0.9"/><circle cx="290.5" cy="179.6" r="3.4" fill="#e3e04a" stroke="#222" stroke-width="0.9"/><circle cx="303.6" cy="183.0" r="3.4" fill="#e3e04a" stroke="#222" stroke-width="0.9"/><circle cx="287.5" cy="159.8" r="3.4" fill="#e3e04a" stroke="#222" stroke-width="0.9"/><circle cx="292.3" cy="188.0" r="3.4" fill="#e3e04a" stroke="#222" stroke-width="0.9"/><circle cx="276.8" cy="160.1" r="3.4" fill="#e3e04a" stroke="#222" stroke-width="0.9"/><circle cx="290.7" cy="147.8" r="3.4" fill="#e3e04a" stroke="#222" stroke-width="0.9"/><circle cx="287.6" cy="168.1" r="3.4" fill="#e3e04a" stroke="#222" stroke-width="0.9"/><circle cx="296.9" cy="164.5" r="3.4" fill="#e3e04a" stroke="#222" stroke-width="0.9"/><circle cx="279.5" cy="168.7" r="3.4" fill="#e3e04a" stroke="#222" stroke-width="0.9"/><circle cx="290.4" cy="165.0" r="3.4" fill="#e3e04a" stroke="#222" stroke-width="0.9"/><circle cx="291.2" cy="184.1" r="3.4" fill="#e3e04a" stroke="#222" stroke-width="0.9"/><circle cx="306.4" cy="197.0" r="3.4" fill="#e3e04a" stroke="#222" stroke-width="0.9"/><circle cx="280.8" cy="168.3" r="3.4" fill="#e3e04a" stroke="#222" stroke-width="0.9"/><circle cx="258.7" cy="199.6" r="3.4" fill="#e3e04a" stroke="#222" stroke-width="0.9"/><circle cx="281.6" cy="173.5" r="3.4" fill="#e3e04a" stroke="#222" stroke-width="0.9"/><circle cx="297.8" cy="155.7" r="3.4" fill="#e3e04a" stroke="#222" stroke-width="0.9"/><circle cx="297.0" cy="173.6" r="3.4" fill="#e3e04a" stroke="#222" stroke-width="0.9"/><circle cx="267.3" cy="177.9" r="3.4" fill="#e3e04a" stroke="#222" stroke-width="0.9"/><circle cx="306.5" cy="148.8" r="3.4" fill="#e3e04a" stroke="#222" stroke-width="0.9"/><circle cx="301.5" cy="176.8" r="3.4" fill="#e3e04a" stroke="#222" stroke-width="0.9"/><circle cx="297.2" cy="180.0" r="3.4" fill="#e3e04a" stroke="#222" stroke-width="0.9"/><circle cx="325.0" cy="160.5" r="3.4" fill="#e3e04a" stroke="#222" stroke-width="0.9"/><circle cx="323.0" cy="186.0" r="3.4" fill="#e3e04a" stroke="#222" stroke-width="0.9"/><circle cx="306.0" cy="136.5" r="3.4" fill="#e3e04a" stroke="#222" stroke-width="0.9"/><circle cx="302.0" cy="140.0" r="3.4" fill="#e3e04a" stroke="#222" stroke-width="0.9"/><circle cx="310.0" cy="148.0" r="3.4" fill="#e3e04a" stroke="#222" stroke-width="0.9"/><circle cx="282.0" cy="201.0" r="3.4" fill="#e3e04a" stroke="#222" stroke-width="0.9"/><circle cx="308.0" cy="200.0" r="3.4" fill="#e3e04a" stroke="#222" stroke-width="0.9"/></svg>
<span class="t" style="left:2042.60px;top:1263.67px;font-size:10.5px;color:#222;">25</span>
<span class="t" style="left:2353.20px;top:1263.67px;font-size:10.5px;color:#222;">25</span>
<span class="t" style="left:2033.60px;top:1327.88px;font-size:10.5px;color:#222;">12.5</span>
<span class="t" style="left:2353.20px;top:1327.88px;font-size:10.5px;color:#222;">12.5</span>
<span class="t" style="left:2048.60px;top:1392.08px;font-size:10.5px;color:#222;">0</span>
<span class="t" style="left:2354.20px;top:1392.08px;font-size:10.5px;color:#222;">0</span>
<span class="t" style="left:2030.60px;top:1456.27px;font-size:10.5px;color:#222;">-12.5</span>
<span class="t" style="left:2353.20px;top:1456.27px;font-size:10.5px;color:#222;">-12.5</span>
<span class="t" style="left:2038.60px;top:1520.47px;font-size:10.5px;color:#222;">-25</span>
<span class="t" style="left:2353.20px;top:1520.47px;font-size:10.5px;color:#222;">-25</span>
<span class="t" style="left:2048.60px;top:1255.38px;font-size:10.5px;color:#222;">-25</span>
<span class="t" style="left:2118.25px;top:1255.38px;font-size:10.5px;color:#222;">-12.5</span>
<span class="t" style="left:2201.40px;top:1255.38px;font-size:10.5px;color:#222;">0</span>
<span class="t" style="left:2267.05px;top:1255.38px;font-size:10.5px;color:#222;">12.5</span>
<span class="t" style="left:2345.20px;top:1255.38px;font-size:10.5px;color:#222;">25</span>
<span class="t" style="left:2175.10px;top:1195.17px;font-size:14.5px;color:#111;transform:scaleX(0.9032);">PitchType</span>
<svg class="ab" style="left:2018px;top:1211px;" width="12" height="12" viewBox="0 0 12 12"><circle cx="6" cy="6" r="4.4" fill="#e3e04a" stroke="#555" stroke-width="0.8"/></svg>
<span class="t" style="left:2034.05px;top:1211.02px;font-size:11.5px;color:#111;transform:scaleX(0.9516);">Sinker</span>
<div class="ab" style="left:2385px;top:1397.5px;width:0;height:0;"><span class="t" style="left:0;top:0;font-size:12px;font-weight:700;color:#111;transform:translate(-50%,-50%) rotate(90deg) scaleX(0.89);transform-origin:50% 50%;">Vertical Break (inches)</span></div>
<svg class="ab" style="left:2440px;top:740px;" width="438" height="400" viewBox="0 0 438 400"><defs><filter id="hfh1" x="0" y="0" width="438" height="400" filterUnits="userSpaceOnUse" color-interpolation-filters="sRGB"><feGaussianBlur stdDeviation="5"/><feColorMatrix type="matrix" values="1 0 0 0 0 0 1 0 0 0 0 0 1 0 0 1 0 0 0 0"/><feComponentTransfer><feFuncR type="table" tableValues="0.416 0.416 0.416 0.416 0.412 0.404 0.396 0.392 0.392 0.392 0.399 0.415 0.431 0.448 0.464 0.507 0.569 0.630 0.706 0.804 0.902 0.978 0.966 0.953 0.941 0.931 0.920 0.910 0.899 0.889 0.878 0.867 0.856 0.845 0.834 0.823 0.812 0.805 0.798 0.791 0.784"/><feFuncG type="table" tableValues="0.608 0.608 0.608 0.608 0.605 0.598 0.591 0.588 0.588 0.588 0.595 0.611 0.627 0.644 0.660 0.692 0.735 0.778 0.825 0.878 0.930 0.952 0.849 0.746 0.643 0.604 0.565 0.525 0.486 0.447 0.408 0.374 0.340 0.306 0.272 0.238 0.204 0.192 0.180 0.169 0.157"/><feFuncB type="table" tableValues="0.796 0.796 0.796 0.796 0.794 0.790 0.786 0.784 0.784 0.784 0.788 0.798 0.808 0.818 0.827 0.843 0.863 0.882 0.889 0.877 0.865 0.827 0.687 0.548 0.408 0.382 0.356 0.329 0.303 0.277 0.251 0.237 0.222 0.208 0.193 0.179 0.165 0.161 0.157 0.153 0.149"/><feFuncA type="table" tableValues="0.000 0.000 0.000 0.000 0.079 0.275 0.471 0.634 0.775 0.916 1.000 1.000 1.000 1.000 1.000 1.000 1.000 1.000 1.000 1.000 1.000 1.000 1.000 1.000 1.000 1.000 1.000 1.000 1.000 1.000 1.000 1.000 1.000 1.000 1.000 1.000 1.000 1.000 1.000 1.000 1.000"/></feComponentTransfer></filter><clipPath id="hch1"><rect x="108" y="99" width="256" height="301"/></clipPath></defs><g clip-path="url(#hch1)"><g filter="url(#hfh1)"><rect x="0" y="0" width="438" height="400" fill="#000"/><path fill="rgb(16,16,16)" d="M335 95h5v5h-5zM350 110h5v5h-5zM355 115h5v5h-5zM360 125h5v5h-5zM360 130h5v5h-5zM360 135h5v5h-5zM100 140h5v5h-5zM360 140h5v5h-5zM105 150h5v5h-5zM355 155h5v5h-5zM120 170h5v5h-5zM360 170h5v5h-5zM120 175h5v5h-5zM365 175h5v5h-5zM120 185h5v5h-5zM120 220h5v5h-5zM125 225h5v5h-5zM135 235h5v5h-5zM175 245h5v5h-5zM180 265h5v5h-5zM170 270h5v5h-5zM160 275h5v5h-5zM325 280h5v5h-5zM330 280h5v5h-5zM155 285h5v5h-5zM320 285h5v5h-5zM340 285h5v5h-5zM365 285h5v5h-5zM155 300h5v5h-5zM280 300h5v5h-5zM290 300h5v5h-5zM295 300h5v5h-5zM300 300h5v5h-5zM200 305h5v5h-5zM205 305h5v5h-5zM210 305h5v5h-5zM275 305h5v5h-5zM160 310h5v5h-5zM190 310h5v5h-5zM275 310h5v5h-5zM170 315h5v5h-5zM175 315h5v5h-5zM180 315h5v5h-5zM250 330h5v5h-5zM255 330h5v5h-5z"/><path fill="rgb(20,20,20)" d="M325 90h5v5h-5zM340 100h5v5h-5zM345 105h5v5h-5zM355 120h5v5h-5zM355 145h5v5h-5zM355 150h5v5h-5zM110 155h5v5h-5zM355 160h5v5h-5zM365 180h5v5h-5zM120 190h5v5h-5zM120 215h5v5h-5zM130 230h5v5h-5zM140 235h5v5h-5zM170 240h5v5h-5zM185 250h5v5h-5zM185 255h5v5h-5zM185 260h5v5h-5zM175 270h5v5h-5zM165 275h5v5h-5zM320 280h5v5h-5zM345 285h5v5h-5zM155 290h5v5h-5zM315 290h5v5h-5zM155 295h5v5h-5zM280 295h5v5h-5zM310 295h5v5h-5zM275 300h5v5h-5zM195 305h5v5h-5zM215 305h5v5h-5zM165 310h5v5h-5zM225 310h5v5h-5zM230 315h5v5h-5zM235 320h5v5h-5zM270 320h5v5h-5zM240 325h5v5h-5zM265 325h5v5h-5z"/><path fill="rgb(24,24,24)" d="M100 90h5v5h-5zM205 90h5v5h-5zM320 90h5v5h-5zM330 95h5v5h-5zM350 115h5v5h-5zM100 135h5v5h-5zM105 145h5v5h-5zM115 160h5v5h-5zM120 165h5v5h-5zM355 165h5v5h-5zM125 175h5v5h-5zM360 175h5v5h-5zM125 180h5v5h-5zM365 185h5v5h-5zM120 195h5v5h-5zM120 210h5v5h-5zM145 235h5v5h-5zM150 235h5v5h-5zM155 235h5v5h-5zM160 235h5v5h-5zM165 235h5v5h-5zM180 245h5v5h-5zM185 265h5v5h-5zM180 270h5v5h-5zM325 275h5v5h-5zM160 280h5v5h-5zM335 280h5v5h-5zM315 285h5v5h-5zM350 285h5v5h-5zM355 285h5v5h-5zM360 285h5v5h-5zM275 295h5v5h-5zM285 295h5v5h-5zM305 295h5v5h-5zM160 305h5v5h-5zM220 305h5v5h-5zM185 310h5v5h-5zM270 315h5v5h-5zM245 325h5v5h-5zM260 325h5v5h-5z"/><path fill="rgb(28,28,28)" d="M200 90h5v5h-5zM210 90h5v5h-5zM335 100h5v5h-5zM340 105h5v5h-5zM345 110h5v5h-5zM355 125h5v5h-5zM100 130h5v5h-5zM355 135h5v5h-5zM355 140h5v5h-5zM350 150h5v5h-5zM350 155h5v5h-5zM125 170h5v5h-5zM355 170h5v5h-5zM125 185h5v5h-5zM120 200h5v5h-5zM120 205h5v5h-5zM125 220h5v5h-5zM135 230h5v5h-5zM175 240h5v5h-5zM170 275h5v5h-5zM320 275h5v5h-5zM330 275h5v5h-5zM365 280h5v5h-5zM160 285h5v5h-5zM275 290h5v5h-5zM310 290h5v5h-5zM270 295h5v5h-5zM290 295h5v5h-5zM295 295h5v5h-5zM300 295h5v5h-5zM160 300h5v5h-5zM200 300h5v5h-5zM205 300h5v5h-5zM210 300h5v5h-5zM270 300h5v5h-5zM190 305h5v5h-5zM170 310h5v5h-5zM175 310h5v5h-5zM180 310h5v5h-5zM230 310h5v5h-5zM270 310h5v5h-5zM235 315h5v5h-5zM265 320h5v5h-5zM250 325h5v5h-5zM255 325h5v5h-5z"/><path fill="rgb(32,32,32)" d="M195 90h5v5h-5zM215 90h5v5h-5zM315 90h5v5h-5zM100 95h5v5h-5zM325 95h5v5h-5zM100 125h5v5h-5zM355 130h5v5h-5zM105 140h5v5h-5zM110 150h5v5h-5zM350 160h5v5h-5zM360 180h5v5h-5zM365 190h5v5h-5zM365 195h5v5h-5zM130 225h5v5h-5zM170 235h5v5h-5zM185 245h5v5h-5zM190 250h5v5h-5zM190 255h5v5h-5zM175 275h5v5h-5zM165 280h5v5h-5zM315 280h5v5h-5zM340 280h5v5h-5zM270 290h5v5h-5zM280 290h5v5h-5zM195 300h5v5h-5zM215 300h5v5h-5zM165 305h5v5h-5zM225 305h5v5h-5zM270 305h5v5h-5zM240 320h5v5h-5z"/><path fill="rgb(36,36,36)" d="M220 90h5v5h-5zM100 120h5v5h-5zM350 120h5v5h-5zM350 145h5v5h-5zM115 155h5v5h-5zM120 160h5v5h-5zM125 165h5v5h-5zM350 165h5v5h-5zM125 190h5v5h-5zM365 200h5v5h-5zM365 205h5v5h-5zM125 215h5v5h-5zM140 230h5v5h-5zM180 240h5v5h-5zM190 260h5v5h-5zM185 270h5v5h-5zM320 270h5v5h-5zM325 270h5v5h-5zM315 275h5v5h-5zM160 290h5v5h-5zM285 290h5v5h-5zM160 295h5v5h-5zM185 305h5v5h-5z"/><path fill="rgb(40,40,40)" d="M105 90h5v5h-5zM310 90h5v5h-5zM100 100h5v5h-5zM330 100h5v5h-5zM100 110h5v5h-5zM100 115h5v5h-5zM345 115h5v5h-5zM105 135h5v5h-5zM110 145h5v5h-5zM290 160h5v5h-5zM180 165h5v5h-5zM130 175h5v5h-5zM355 175h5v5h-5zM125 195h5v5h-5zM200 205h5v5h-5zM205 210h5v5h-5zM160 230h5v5h-5zM165 230h5v5h-5zM190 245h5v5h-5zM190 265h5v5h-5zM180 275h5v5h-5zM335 275h5v5h-5zM345 280h5v5h-5zM360 280h5v5h-5zM275 285h5v5h-5zM310 285h5v5h-5zM265 290h5v5h-5zM305 290h5v5h-5zM265 295h5v5h-5zM190 300h5v5h-5zM220 300h5v5h-5zM170 305h5v5h-5zM230 305h5v5h-5zM235 310h5v5h-5zM265 315h5v5h-5zM245 320h5v5h-5zM260 320h5v5h-5z"/><path fill="rgb(44,44,44)" d="M190 90h5v5h-5zM225 90h5v5h-5zM200 95h5v5h-5zM320 95h5v5h-5zM100 105h5v5h-5zM335 105h5v5h-5zM340 110h5v5h-5zM155 125h5v5h-5zM160 125h5v5h-5zM350 125h5v5h-5zM260 135h5v5h-5zM265 135h5v5h-5zM270 135h5v5h-5zM350 140h5v5h-5zM345 150h5v5h-5zM290 155h5v5h-5zM345 155h5v5h-5zM295 160h5v5h-5zM175 165h5v5h-5zM185 165h5v5h-5zM290 165h5v5h-5zM295 165h5v5h-5zM130 170h5v5h-5zM175 170h5v5h-5zM180 170h5v5h-5zM185 170h5v5h-5zM350 170h5v5h-5zM130 180h5v5h-5zM360 185h5v5h-5zM195 200h5v5h-5zM200 200h5v5h-5zM195 205h5v5h-5zM205 205h5v5h-5zM125 210h5v5h-5zM200 210h5v5h-5zM210 210h5v5h-5zM365 210h5v5h-5zM130 220h5v5h-5zM135 225h5v5h-5zM145 230h5v5h-5zM150 230h5v5h-5zM155 230h5v5h-5zM170 230h5v5h-5zM175 235h5v5h-5zM365 235h5v5h-5zM185 240h5v5h-5zM365 240h5v5h-5zM195 250h5v5h-5zM315 270h5v5h-5zM185 275h5v5h-5zM365 275h5v5h-5zM170 280h5v5h-5zM350 280h5v5h-5zM355 280h5v5h-5zM165 285h5v5h-5zM270 285h5v5h-5zM290 290h5v5h-5zM195 295h5v5h-5zM200 295h5v5h-5zM205 295h5v5h-5zM210 295h5v5h-5zM165 300h5v5h-5zM265 300h5v5h-5zM175 305h5v5h-5zM180 305h5v5h-5zM265 305h5v5h-5zM265 310h5v5h-5zM240 315h5v5h-5zM250 320h5v5h-5zM255 320h5v5h-5z"/><path fill="rgb(48,48,48)" d="M230 90h5v5h-5zM305 90h5v5h-5zM205 95h5v5h-5zM150 125h5v5h-5zM105 130h5v5h-5zM155 130h5v5h-5zM160 130h5v5h-5zM265 130h5v5h-5zM350 130h5v5h-5zM350 135h5v5h-5zM265 140h5v5h-5zM270 140h5v5h-5zM275 140h5v5h-5zM115 150h5v5h-5zM285 150h5v5h-5zM290 150h5v5h-5zM295 155h5v5h-5zM125 160h5v5h-5zM180 160h5v5h-5zM345 160h5v5h-5zM170 165h5v5h-5zM170 170h5v5h-5zM185 175h5v5h-5zM355 180h5v5h-5zM130 185h5v5h-5zM360 190h5v5h-5zM190 195h5v5h-5zM195 195h5v5h-5zM125 200h5v5h-5zM190 200h5v5h-5zM125 205h5v5h-5zM205 215h5v5h-5zM210 215h5v5h-5zM365 215h5v5h-5zM365 230h5v5h-5zM195 245h5v5h-5zM365 245h5v5h-5zM195 255h5v5h-5zM315 265h5v5h-5zM320 265h5v5h-5zM190 270h5v5h-5zM330 270h5v5h-5zM175 280h5v5h-5zM310 280h5v5h-5zM265 285h5v5h-5zM280 285h5v5h-5zM260 290h5v5h-5zM295 290h5v5h-5zM300 290h5v5h-5zM225 300h5v5h-5z"/><path fill="rgb(52,52,52)" d="M110 90h5v5h-5zM105 95h5v5h-5zM195 95h5v5h-5zM210 95h5v5h-5zM315 95h5v5h-5zM325 100h5v5h-5zM155 120h5v5h-5zM160 120h5v5h-5zM345 120h5v5h-5zM105 125h5v5h-5zM165 125h5v5h-5zM150 130h5v5h-5zM260 130h5v5h-5zM270 130h5v5h-5zM275 135h5v5h-5zM110 140h5v5h-5zM260 140h5v5h-5zM280 145h5v5h-5zM285 145h5v5h-5zM345 145h5v5h-5zM120 155h5v5h-5zM285 155h5v5h-5zM175 160h5v5h-5zM300 160h5v5h-5zM130 165h5v5h-5zM290 170h5v5h-5zM180 175h5v5h-5zM350 175h5v5h-5zM185 180h5v5h-5zM185 185h5v5h-5zM130 190h5v5h-5zM185 190h5v5h-5zM190 190h5v5h-5zM360 195h5v5h-5zM360 200h5v5h-5zM190 205h5v5h-5zM360 205h5v5h-5zM195 210h5v5h-5zM210 220h5v5h-5zM365 220h5v5h-5zM165 225h5v5h-5zM365 225h5v5h-5zM190 240h5v5h-5zM195 260h5v5h-5zM340 275h5v5h-5zM180 280h5v5h-5zM165 290h5v5h-5zM165 295h5v5h-5zM190 295h5v5h-5zM215 295h5v5h-5zM260 295h5v5h-5zM185 300h5v5h-5zM235 305h5v5h-5zM240 310h5v5h-5zM260 315h5v5h-5z"/><path fill="rgb(56,56,56)" d="M185 90h5v5h-5zM300 90h5v5h-5zM215 95h5v5h-5zM330 105h5v5h-5zM105 120h5v5h-5zM165 130h5v5h-5zM255 135h5v5h-5zM280 140h5v5h-5zM275 145h5v5h-5zM290 145h5v5h-5zM295 150h5v5h-5zM170 160h5v5h-5zM185 160h5v5h-5zM285 160h5v5h-5zM165 165h5v5h-5zM300 165h5v5h-5zM345 165h5v5h-5zM165 170h5v5h-5zM170 175h5v5h-5zM175 175h5v5h-5zM180 180h5v5h-5zM190 185h5v5h-5zM185 195h5v5h-5zM205 200h5v5h-5zM210 205h5v5h-5zM215 210h5v5h-5zM130 215h5v5h-5zM200 215h5v5h-5zM215 215h5v5h-5zM205 220h5v5h-5zM160 225h5v5h-5zM180 235h5v5h-5zM195 240h5v5h-5zM365 250h5v5h-5zM325 265h5v5h-5zM310 270h5v5h-5zM365 270h5v5h-5zM190 275h5v5h-5zM310 275h5v5h-5zM360 275h5v5h-5zM185 280h5v5h-5zM170 285h5v5h-5zM260 285h5v5h-5zM285 285h5v5h-5zM305 285h5v5h-5zM170 300h5v5h-5zM230 300h5v5h-5zM260 300h5v5h-5zM245 315h5v5h-5z"/><path fill="rgb(60,60,60)" d="M115 90h5v5h-5zM235 90h5v5h-5zM105 100h5v5h-5zM335 110h5v5h-5zM105 115h5v5h-5zM340 115h5v5h-5zM150 120h5v5h-5zM165 120h5v5h-5zM145 125h5v5h-5zM145 130h5v5h-5zM155 135h5v5h-5zM160 135h5v5h-5zM255 140h5v5h-5zM345 140h5v5h-5zM115 145h5v5h-5zM270 145h5v5h-5zM280 150h5v5h-5zM340 150h5v5h-5zM300 155h5v5h-5zM340 155h5v5h-5zM285 165h5v5h-5zM190 170h5v5h-5zM295 170h5v5h-5zM345 170h5v5h-5zM135 175h5v5h-5zM165 175h5v5h-5zM135 180h5v5h-5zM175 180h5v5h-5zM190 180h5v5h-5zM180 185h5v5h-5zM355 185h5v5h-5zM195 190h5v5h-5zM200 195h5v5h-5zM185 200h5v5h-5zM330 210h5v5h-5zM335 210h5v5h-5zM360 210h5v5h-5zM330 215h5v5h-5zM335 215h5v5h-5zM215 220h5v5h-5zM140 225h5v5h-5zM170 225h5v5h-5zM205 225h5v5h-5zM210 225h5v5h-5zM175 230h5v5h-5zM200 240h5v5h-5zM200 245h5v5h-5zM315 260h5v5h-5zM195 265h5v5h-5zM310 265h5v5h-5zM270 280h5v5h-5zM275 280h5v5h-5zM255 285h5v5h-5zM190 290h5v5h-5zM195 290h5v5h-5zM200 290h5v5h-5zM255 290h5v5h-5zM220 295h5v5h-5zM175 300h5v5h-5zM180 300h5v5h-5zM260 310h5v5h-5zM250 315h5v5h-5zM255 315h5v5h-5z"/><path fill="rgb(64,64,64)" d="M120 90h5v5h-5zM135 90h5v5h-5zM295 90h5v5h-5zM190 95h5v5h-5zM220 95h5v5h-5zM310 95h5v5h-5zM320 100h5v5h-5zM105 105h5v5h-5zM105 110h5v5h-5zM345 125h5v5h-5zM255 130h5v5h-5zM275 130h5v5h-5zM110 135h5v5h-5zM150 135h5v5h-5zM280 135h5v5h-5zM285 140h5v5h-5zM295 145h5v5h-5zM340 145h5v5h-5zM175 155h5v5h-5zM130 160h5v5h-5zM165 160h5v5h-5zM340 160h5v5h-5zM190 165h5v5h-5zM135 170h5v5h-5zM285 170h5v5h-5zM190 175h5v5h-5zM165 180h5v5h-5zM170 180h5v5h-5zM350 180h5v5h-5zM135 185h5v5h-5zM175 185h5v5h-5zM180 190h5v5h-5zM130 195h5v5h-5zM185 205h5v5h-5zM190 210h5v5h-5zM340 210h5v5h-5zM325 215h5v5h-5zM340 215h5v5h-5zM360 215h5v5h-5zM135 220h5v5h-5zM200 220h5v5h-5zM155 225h5v5h-5zM205 230h5v5h-5zM210 230h5v5h-5zM185 235h5v5h-5zM200 235h5v5h-5zM205 235h5v5h-5zM360 235h5v5h-5zM360 240h5v5h-5zM200 250h5v5h-5zM255 250h5v5h-5zM260 250h5v5h-5zM365 255h5v5h-5zM310 260h5v5h-5zM320 260h5v5h-5zM365 265h5v5h-5zM335 270h5v5h-5zM345 275h5v5h-5zM190 280h5v5h-5zM265 280h5v5h-5zM280 280h5v5h-5zM175 285h5v5h-5zM185 285h5v5h-5zM190 285h5v5h-5zM290 285h5v5h-5zM170 290h5v5h-5zM205 290h5v5h-5zM170 295h5v5h-5zM185 295h5v5h-5zM255 295h5v5h-5zM235 300h5v5h-5zM240 305h5v5h-5zM260 305h5v5h-5z"/><path fill="rgb(68,68,68)" d="M125 90h5v5h-5zM130 90h5v5h-5zM140 90h5v5h-5zM145 90h5v5h-5zM180 90h5v5h-5zM240 90h5v5h-5zM290 90h5v5h-5zM110 95h5v5h-5zM200 100h5v5h-5zM265 125h5v5h-5zM345 130h5v5h-5zM145 135h5v5h-5zM165 135h5v5h-5zM345 135h5v5h-5zM290 140h5v5h-5zM265 145h5v5h-5zM120 150h5v5h-5zM300 150h5v5h-5zM335 150h5v5h-5zM125 155h5v5h-5zM170 155h5v5h-5zM180 155h5v5h-5zM335 155h5v5h-5zM305 160h5v5h-5zM135 165h5v5h-5zM160 165h5v5h-5zM160 170h5v5h-5zM160 175h5v5h-5zM290 175h5v5h-5zM345 175h5v5h-5zM355 190h5v5h-5zM180 195h5v5h-5zM355 195h5v5h-5zM355 200h5v5h-5zM335 205h5v5h-5zM340 205h5v5h-5zM355 205h5v5h-5zM130 210h5v5h-5zM325 210h5v5h-5zM345 210h5v5h-5zM355 210h5v5h-5zM195 215h5v5h-5zM320 215h5v5h-5zM165 220h5v5h-5zM170 220h5v5h-5zM360 220h5v5h-5zM145 225h5v5h-5zM150 225h5v5h-5zM215 225h5v5h-5zM360 225h5v5h-5zM200 230h5v5h-5zM360 230h5v5h-5zM190 235h5v5h-5zM195 235h5v5h-5zM210 235h5v5h-5zM205 240h5v5h-5zM250 250h5v5h-5zM265 250h5v5h-5zM200 255h5v5h-5zM365 260h5v5h-5zM195 270h5v5h-5zM355 275h5v5h-5zM260 280h5v5h-5zM305 280h5v5h-5zM180 285h5v5h-5zM195 285h5v5h-5zM295 285h5v5h-5zM300 285h5v5h-5zM185 290h5v5h-5zM210 290h5v5h-5zM250 290h5v5h-5zM225 295h5v5h-5zM240 300h5v5h-5zM255 300h5v5h-5zM245 310h5v5h-5z"/><path fill="rgb(72,72,72)" d="M150 90h5v5h-5zM280 90h5v5h-5zM285 90h5v5h-5zM195 100h5v5h-5zM205 100h5v5h-5zM325 105h5v5h-5zM155 115h5v5h-5zM160 115h5v5h-5zM145 120h5v5h-5zM340 120h5v5h-5zM140 125h5v5h-5zM170 125h5v5h-5zM260 125h5v5h-5zM110 130h5v5h-5zM140 130h5v5h-5zM170 130h5v5h-5zM335 145h5v5h-5zM305 155h5v5h-5zM305 165h5v5h-5zM340 165h5v5h-5zM160 180h5v5h-5zM165 185h5v5h-5zM170 185h5v5h-5zM135 190h5v5h-5zM130 200h5v5h-5zM180 200h5v5h-5zM130 205h5v5h-5zM215 205h5v5h-5zM330 205h5v5h-5zM350 210h5v5h-5zM220 215h5v5h-5zM345 215h5v5h-5zM320 220h5v5h-5zM175 225h5v5h-5zM200 225h5v5h-5zM205 245h5v5h-5zM255 245h5v5h-5zM260 245h5v5h-5zM265 245h5v5h-5zM360 245h5v5h-5zM245 250h5v5h-5zM255 255h5v5h-5zM260 255h5v5h-5zM310 255h5v5h-5zM330 265h5v5h-5zM195 275h5v5h-5zM350 275h5v5h-5zM195 280h5v5h-5zM255 280h5v5h-5zM250 285h5v5h-5zM175 290h5v5h-5zM180 290h5v5h-5zM175 295h5v5h-5zM180 295h5v5h-5zM250 295h5v5h-5zM245 305h5v5h-5zM255 305h5v5h-5zM250 310h5v5h-5zM255 310h5v5h-5z"/><path fill="rgb(76,76,76)" d="M155 90h5v5h-5zM245 90h5v5h-5zM270 90h5v5h-5zM275 90h5v5h-5zM185 95h5v5h-5zM225 95h5v5h-5zM305 95h5v5h-5zM315 100h5v5h-5zM330 110h5v5h-5zM335 115h5v5h-5zM110 125h5v5h-5zM270 125h5v5h-5zM280 130h5v5h-5zM250 135h5v5h-5zM285 135h5v5h-5zM115 140h5v5h-5zM155 140h5v5h-5zM160 140h5v5h-5zM250 140h5v5h-5zM295 140h5v5h-5zM340 140h5v5h-5zM260 145h5v5h-5zM300 145h5v5h-5zM275 150h5v5h-5zM330 150h5v5h-5zM165 155h5v5h-5zM280 155h5v5h-5zM330 155h5v5h-5zM135 160h5v5h-5zM160 160h5v5h-5zM190 160h5v5h-5zM310 160h5v5h-5zM335 160h5v5h-5zM140 170h5v5h-5zM140 175h5v5h-5zM285 175h5v5h-5zM345 180h5v5h-5zM160 185h5v5h-5zM350 185h5v5h-5zM175 190h5v5h-5zM210 200h5v5h-5zM180 205h5v5h-5zM345 205h5v5h-5zM350 205h5v5h-5zM185 210h5v5h-5zM220 210h5v5h-5zM320 210h5v5h-5zM170 215h5v5h-5zM315 215h5v5h-5zM350 215h5v5h-5zM355 215h5v5h-5zM160 220h5v5h-5zM315 220h5v5h-5zM325 220h5v5h-5zM330 220h5v5h-5zM335 220h5v5h-5zM340 220h5v5h-5zM180 230h5v5h-5zM215 230h5v5h-5zM210 240h5v5h-5zM245 245h5v5h-5zM250 245h5v5h-5zM240 250h5v5h-5zM250 255h5v5h-5zM265 255h5v5h-5zM315 255h5v5h-5zM200 260h5v5h-5zM305 260h5v5h-5zM305 265h5v5h-5zM305 270h5v5h-5zM360 270h5v5h-5zM270 275h5v5h-5zM275 275h5v5h-5zM305 275h5v5h-5zM285 280h5v5h-5zM200 285h5v5h-5zM215 290h5v5h-5zM245 290h5v5h-5zM230 295h5v5h-5zM245 295h5v5h-5zM245 300h5v5h-5zM250 300h5v5h-5zM250 305h5v5h-5z"/><path fill="rgb(80,80,80)" d="M160 90h5v5h-5zM175 90h5v5h-5zM250 90h5v5h-5zM255 90h5v5h-5zM260 90h5v5h-5zM265 90h5v5h-5zM210 100h5v5h-5zM150 115h5v5h-5zM165 115h5v5h-5zM275 125h5v5h-5zM140 135h5v5h-5zM170 135h5v5h-5zM150 140h5v5h-5zM165 140h5v5h-5zM300 140h5v5h-5zM255 145h5v5h-5zM325 145h5v5h-5zM330 145h5v5h-5zM175 150h5v5h-5zM305 150h5v5h-5zM325 150h5v5h-5zM130 155h5v5h-5zM185 155h5v5h-5zM310 155h5v5h-5zM325 155h5v5h-5zM140 165h5v5h-5zM155 165h5v5h-5zM310 165h5v5h-5zM155 170h5v5h-5zM300 170h5v5h-5zM340 170h5v5h-5zM155 175h5v5h-5zM140 180h5v5h-5zM140 185h5v5h-5zM195 185h5v5h-5zM165 190h5v5h-5zM170 190h5v5h-5zM350 190h5v5h-5zM175 195h5v5h-5zM335 200h5v5h-5zM340 200h5v5h-5zM350 200h5v5h-5zM325 205h5v5h-5zM180 210h5v5h-5zM135 215h5v5h-5zM165 215h5v5h-5zM190 215h5v5h-5zM140 220h5v5h-5zM175 220h5v5h-5zM195 220h5v5h-5zM220 220h5v5h-5zM345 220h5v5h-5zM355 220h5v5h-5zM195 230h5v5h-5zM355 230h5v5h-5zM215 235h5v5h-5zM355 235h5v5h-5zM235 245h5v5h-5zM240 245h5v5h-5zM270 245h5v5h-5zM205 250h5v5h-5zM235 250h5v5h-5zM270 250h5v5h-5zM245 255h5v5h-5zM325 260h5v5h-5zM340 270h5v5h-5zM265 275h5v5h-5zM250 280h5v5h-5zM235 295h5v5h-5zM240 295h5v5h-5z"/><path fill="rgb(84,84,84)" d="M165 90h5v5h-5zM170 90h5v5h-5zM115 95h5v5h-5zM300 95h5v5h-5zM110 100h5v5h-5zM190 100h5v5h-5zM320 105h5v5h-5zM110 120h5v5h-5zM140 120h5v5h-5zM340 125h5v5h-5zM115 135h5v5h-5zM290 135h5v5h-5zM295 135h5v5h-5zM300 135h5v5h-5zM305 135h5v5h-5zM310 135h5v5h-5zM340 135h5v5h-5zM145 140h5v5h-5zM305 140h5v5h-5zM335 140h5v5h-5zM120 145h5v5h-5zM305 145h5v5h-5zM320 145h5v5h-5zM125 150h5v5h-5zM170 150h5v5h-5zM320 150h5v5h-5zM160 155h5v5h-5zM315 155h5v5h-5zM320 155h5v5h-5zM140 160h5v5h-5zM155 160h5v5h-5zM315 160h5v5h-5zM320 160h5v5h-5zM325 160h5v5h-5zM330 160h5v5h-5zM150 165h5v5h-5zM315 165h5v5h-5zM335 165h5v5h-5zM340 175h5v5h-5zM155 180h5v5h-5zM290 180h5v5h-5zM155 185h5v5h-5zM345 185h5v5h-5zM160 190h5v5h-5zM135 195h5v5h-5zM205 195h5v5h-5zM350 195h5v5h-5zM175 200h5v5h-5zM330 200h5v5h-5zM345 200h5v5h-5zM175 205h5v5h-5zM170 210h5v5h-5zM175 210h5v5h-5zM175 215h5v5h-5zM310 215h5v5h-5zM155 220h5v5h-5zM310 220h5v5h-5zM350 220h5v5h-5zM195 225h5v5h-5zM220 225h5v5h-5zM355 225h5v5h-5zM215 240h5v5h-5zM210 245h5v5h-5zM230 245h5v5h-5zM360 250h5v5h-5zM240 255h5v5h-5zM270 255h5v5h-5zM305 255h5v5h-5zM320 255h5v5h-5zM255 260h5v5h-5zM200 265h5v5h-5zM260 275h5v5h-5zM280 275h5v5h-5zM290 280h5v5h-5zM300 280h5v5h-5zM205 285h5v5h-5zM245 285h5v5h-5zM220 290h5v5h-5z"/><path fill="rgb(88,88,88)" d="M215 100h5v5h-5zM310 100h5v5h-5zM110 105h5v5h-5zM110 110h5v5h-5zM325 110h5v5h-5zM110 115h5v5h-5zM145 115h5v5h-5zM170 120h5v5h-5zM335 120h5v5h-5zM135 125h5v5h-5zM255 125h5v5h-5zM280 125h5v5h-5zM135 130h5v5h-5zM285 130h5v5h-5zM305 130h5v5h-5zM310 130h5v5h-5zM315 130h5v5h-5zM340 130h5v5h-5zM315 135h5v5h-5zM170 140h5v5h-5zM310 140h5v5h-5zM315 140h5v5h-5zM320 140h5v5h-5zM325 140h5v5h-5zM330 140h5v5h-5zM150 145h5v5h-5zM155 145h5v5h-5zM160 145h5v5h-5zM165 145h5v5h-5zM170 145h5v5h-5zM310 145h5v5h-5zM315 145h5v5h-5zM165 150h5v5h-5zM270 150h5v5h-5zM310 150h5v5h-5zM315 150h5v5h-5zM135 155h5v5h-5zM155 155h5v5h-5zM145 160h5v5h-5zM150 160h5v5h-5zM145 165h5v5h-5zM320 165h5v5h-5zM145 170h5v5h-5zM150 170h5v5h-5zM145 175h5v5h-5zM150 175h5v5h-5zM295 175h5v5h-5zM145 180h5v5h-5zM150 180h5v5h-5zM285 180h5v5h-5zM340 180h5v5h-5zM150 185h5v5h-5zM340 185h5v5h-5zM140 190h5v5h-5zM155 190h5v5h-5zM200 190h5v5h-5zM345 190h5v5h-5zM165 195h5v5h-5zM170 195h5v5h-5zM335 195h5v5h-5zM340 195h5v5h-5zM345 195h5v5h-5zM170 205h5v5h-5zM165 210h5v5h-5zM280 210h5v5h-5zM285 210h5v5h-5zM315 210h5v5h-5zM160 215h5v5h-5zM180 215h5v5h-5zM185 215h5v5h-5zM180 225h5v5h-5zM310 225h5v5h-5zM315 225h5v5h-5zM345 225h5v5h-5zM350 225h5v5h-5zM185 230h5v5h-5zM190 230h5v5h-5zM220 230h5v5h-5zM220 235h5v5h-5zM220 240h5v5h-5zM265 240h5v5h-5zM355 240h5v5h-5zM310 250h5v5h-5zM250 260h5v5h-5zM260 260h5v5h-5zM265 260h5v5h-5zM335 265h5v5h-5zM255 275h5v5h-5zM200 280h5v5h-5zM295 280h5v5h-5zM240 290h5v5h-5z"/><path fill="rgb(92,92,92)" d="M120 95h5v5h-5zM125 95h5v5h-5zM130 95h5v5h-5zM135 95h5v5h-5zM140 95h5v5h-5zM180 95h5v5h-5zM230 95h5v5h-5zM295 95h5v5h-5zM200 105h5v5h-5zM160 110h5v5h-5zM330 115h5v5h-5zM310 125h5v5h-5zM115 130h5v5h-5zM250 130h5v5h-5zM295 130h5v5h-5zM300 130h5v5h-5zM135 135h5v5h-5zM320 135h5v5h-5zM335 135h5v5h-5zM140 140h5v5h-5zM245 140h5v5h-5zM145 145h5v5h-5zM250 145h5v5h-5zM150 150h5v5h-5zM155 150h5v5h-5zM160 150h5v5h-5zM180 150h5v5h-5zM140 155h5v5h-5zM145 155h5v5h-5zM150 155h5v5h-5zM280 160h5v5h-5zM195 165h5v5h-5zM325 165h5v5h-5zM330 165h5v5h-5zM335 170h5v5h-5zM335 175h5v5h-5zM335 180h5v5h-5zM145 185h5v5h-5zM335 185h5v5h-5zM335 190h5v5h-5zM340 190h5v5h-5zM160 195h5v5h-5zM135 200h5v5h-5zM170 200h5v5h-5zM165 205h5v5h-5zM220 205h5v5h-5zM280 205h5v5h-5zM285 205h5v5h-5zM135 210h5v5h-5zM280 215h5v5h-5zM285 215h5v5h-5zM145 220h5v5h-5zM150 220h5v5h-5zM180 220h5v5h-5zM190 220h5v5h-5zM320 225h5v5h-5zM340 225h5v5h-5zM350 230h5v5h-5zM225 240h5v5h-5zM230 240h5v5h-5zM260 240h5v5h-5zM270 240h5v5h-5zM215 245h5v5h-5zM220 245h5v5h-5zM225 245h5v5h-5zM230 250h5v5h-5zM315 250h5v5h-5zM205 255h5v5h-5zM360 255h5v5h-5zM270 260h5v5h-5zM360 265h5v5h-5zM200 270h5v5h-5zM265 270h5v5h-5zM270 270h5v5h-5zM275 270h5v5h-5zM345 270h5v5h-5zM355 270h5v5h-5zM200 275h5v5h-5zM250 275h5v5h-5zM285 275h5v5h-5zM300 275h5v5h-5zM245 280h5v5h-5zM210 285h5v5h-5zM225 290h5v5h-5zM235 290h5v5h-5z"/><path fill="rgb(96,96,96)" d="M145 95h5v5h-5zM150 95h5v5h-5zM280 95h5v5h-5zM285 95h5v5h-5zM290 95h5v5h-5zM305 100h5v5h-5zM205 105h5v5h-5zM315 105h5v5h-5zM155 110h5v5h-5zM165 110h5v5h-5zM140 115h5v5h-5zM135 120h5v5h-5zM305 125h5v5h-5zM315 125h5v5h-5zM335 125h5v5h-5zM290 130h5v5h-5zM320 130h5v5h-5zM325 135h5v5h-5zM330 135h5v5h-5zM120 140h5v5h-5zM175 145h5v5h-5zM130 150h5v5h-5zM145 150h5v5h-5zM265 150h5v5h-5zM190 155h5v5h-5zM195 170h5v5h-5zM305 170h5v5h-5zM315 170h5v5h-5zM320 170h5v5h-5zM325 170h5v5h-5zM330 170h5v5h-5zM330 175h5v5h-5zM195 180h5v5h-5zM330 180h5v5h-5zM145 190h5v5h-5zM150 190h5v5h-5zM330 190h5v5h-5zM155 195h5v5h-5zM330 195h5v5h-5zM165 200h5v5h-5zM285 200h5v5h-5zM325 200h5v5h-5zM290 205h5v5h-5zM320 205h5v5h-5zM275 210h5v5h-5zM290 210h5v5h-5zM290 215h5v5h-5zM305 215h5v5h-5zM185 220h5v5h-5zM305 220h5v5h-5zM185 225h5v5h-5zM190 225h5v5h-5zM350 235h5v5h-5zM235 240h5v5h-5zM240 240h5v5h-5zM255 240h5v5h-5zM210 250h5v5h-5zM275 250h5v5h-5zM305 250h5v5h-5zM235 255h5v5h-5zM245 260h5v5h-5zM300 260h5v5h-5zM330 260h5v5h-5zM360 260h5v5h-5zM255 265h5v5h-5zM260 265h5v5h-5zM265 265h5v5h-5zM270 265h5v5h-5zM300 265h5v5h-5zM255 270h5v5h-5zM260 270h5v5h-5zM300 270h5v5h-5zM215 285h5v5h-5zM240 285h5v5h-5zM230 290h5v5h-5z"/><path fill="rgb(100,100,100)" d="M155 95h5v5h-5zM175 95h5v5h-5zM270 95h5v5h-5zM275 95h5v5h-5zM115 100h5v5h-5zM195 105h5v5h-5zM150 110h5v5h-5zM320 110h5v5h-5zM260 120h5v5h-5zM265 120h5v5h-5zM275 120h5v5h-5zM330 120h5v5h-5zM115 125h5v5h-5zM285 125h5v5h-5zM300 125h5v5h-5zM175 130h5v5h-5zM325 130h5v5h-5zM335 130h5v5h-5zM120 135h5v5h-5zM125 145h5v5h-5zM140 145h5v5h-5zM245 145h5v5h-5zM135 150h5v5h-5zM140 150h5v5h-5zM195 160h5v5h-5zM280 165h5v5h-5zM310 170h5v5h-5zM195 175h5v5h-5zM325 175h5v5h-5zM285 185h5v5h-5zM290 185h5v5h-5zM330 185h5v5h-5zM140 195h5v5h-5zM160 200h5v5h-5zM215 200h5v5h-5zM290 200h5v5h-5zM135 205h5v5h-5zM160 205h5v5h-5zM275 205h5v5h-5zM160 210h5v5h-5zM310 210h5v5h-5zM140 215h5v5h-5zM155 215h5v5h-5zM225 215h5v5h-5zM275 215h5v5h-5zM225 220h5v5h-5zM285 220h5v5h-5zM305 225h5v5h-5zM335 225h5v5h-5zM310 230h5v5h-5zM315 230h5v5h-5zM345 230h5v5h-5zM225 235h5v5h-5zM245 240h5v5h-5zM250 240h5v5h-5zM275 245h5v5h-5zM355 245h5v5h-5zM225 250h5v5h-5zM275 255h5v5h-5zM300 255h5v5h-5zM325 255h5v5h-5zM205 260h5v5h-5zM275 260h5v5h-5zM250 265h5v5h-5zM275 265h5v5h-5zM250 270h5v5h-5zM280 270h5v5h-5zM350 270h5v5h-5zM290 275h5v5h-5zM205 280h5v5h-5z"/><path fill="rgb(104,104,104)" d="M160 95h5v5h-5zM165 95h5v5h-5zM170 95h5v5h-5zM265 95h5v5h-5zM185 100h5v5h-5zM220 100h5v5h-5zM300 100h5v5h-5zM310 105h5v5h-5zM170 115h5v5h-5zM325 115h5v5h-5zM115 120h5v5h-5zM270 120h5v5h-5zM280 120h5v5h-5zM305 120h5v5h-5zM310 120h5v5h-5zM130 125h5v5h-5zM290 125h5v5h-5zM295 125h5v5h-5zM320 125h5v5h-5zM330 125h5v5h-5zM130 130h5v5h-5zM330 130h5v5h-5zM130 135h5v5h-5zM175 135h5v5h-5zM245 135h5v5h-5zM125 140h5v5h-5zM135 140h5v5h-5zM175 140h5v5h-5zM130 145h5v5h-5zM135 145h5v5h-5zM260 150h5v5h-5zM275 155h5v5h-5zM280 170h5v5h-5zM290 190h5v5h-5zM145 195h5v5h-5zM150 195h5v5h-5zM285 195h5v5h-5zM290 195h5v5h-5zM155 200h5v5h-5zM280 200h5v5h-5zM225 210h5v5h-5zM295 210h5v5h-5zM295 215h5v5h-5zM300 215h5v5h-5zM280 220h5v5h-5zM300 220h5v5h-5zM225 225h5v5h-5zM325 225h5v5h-5zM225 230h5v5h-5zM230 235h5v5h-5zM310 245h5v5h-5zM215 250h5v5h-5zM220 250h5v5h-5zM320 250h5v5h-5zM230 255h5v5h-5zM240 260h5v5h-5zM245 265h5v5h-5zM245 275h5v5h-5zM295 275h5v5h-5zM220 285h5v5h-5z"/><path fill="rgb(108,108,108)" d="M235 95h5v5h-5zM260 95h5v5h-5zM115 105h5v5h-5zM155 105h5v5h-5zM160 105h5v5h-5zM210 105h5v5h-5zM145 110h5v5h-5zM315 110h5v5h-5zM115 115h5v5h-5zM135 115h5v5h-5zM320 115h5v5h-5zM130 120h5v5h-5zM285 120h5v5h-5zM300 120h5v5h-5zM315 120h5v5h-5zM320 120h5v5h-5zM325 120h5v5h-5zM175 125h5v5h-5zM325 125h5v5h-5zM120 130h5v5h-5zM125 130h5v5h-5zM125 135h5v5h-5zM130 140h5v5h-5zM185 150h5v5h-5zM280 175h5v5h-5zM320 175h5v5h-5zM325 180h5v5h-5zM325 185h5v5h-5zM285 190h5v5h-5zM210 195h5v5h-5zM325 195h5v5h-5zM295 205h5v5h-5zM315 205h5v5h-5zM270 210h5v5h-5zM300 210h5v5h-5zM305 210h5v5h-5zM290 220h5v5h-5zM295 220h5v5h-5zM330 225h5v5h-5zM265 235h5v5h-5zM270 235h5v5h-5zM275 240h5v5h-5zM350 240h5v5h-5zM315 245h5v5h-5zM210 255h5v5h-5zM235 260h5v5h-5zM205 265h5v5h-5zM280 265h5v5h-5zM340 265h5v5h-5zM245 270h5v5h-5zM285 270h5v5h-5zM205 275h5v5h-5zM210 280h5v5h-5zM240 280h5v5h-5zM225 285h5v5h-5zM235 285h5v5h-5z"/><path fill="rgb(112,112,112)" d="M120 100h5v5h-5zM140 100h5v5h-5zM145 100h5v5h-5zM150 100h5v5h-5zM155 100h5v5h-5zM160 100h5v5h-5zM180 100h5v5h-5zM295 100h5v5h-5zM150 105h5v5h-5zM165 105h5v5h-5zM305 105h5v5h-5zM115 110h5v5h-5zM310 110h5v5h-5zM310 115h5v5h-5zM315 115h5v5h-5zM290 120h5v5h-5zM295 120h5v5h-5zM120 125h5v5h-5zM125 125h5v5h-5zM255 150h5v5h-5zM325 190h5v5h-5zM140 200h5v5h-5zM150 200h5v5h-5zM320 200h5v5h-5zM155 205h5v5h-5zM155 210h5v5h-5zM145 215h5v5h-5zM150 215h5v5h-5zM275 220h5v5h-5zM305 230h5v5h-5zM340 230h5v5h-5zM310 235h5v5h-5zM345 235h5v5h-5zM310 240h5v5h-5zM305 245h5v5h-5zM355 250h5v5h-5zM225 255h5v5h-5zM280 255h5v5h-5zM280 260h5v5h-5zM295 260h5v5h-5zM295 265h5v5h-5zM355 265h5v5h-5zM205 270h5v5h-5zM290 270h5v5h-5zM295 270h5v5h-5zM230 285h5v5h-5z"/><path fill="rgb(116,116,116)" d="M255 95h5v5h-5zM125 100h5v5h-5zM130 100h5v5h-5zM135 100h5v5h-5zM165 100h5v5h-5zM170 100h5v5h-5zM175 100h5v5h-5zM270 100h5v5h-5zM275 100h5v5h-5zM280 100h5v5h-5zM285 100h5v5h-5zM290 100h5v5h-5zM145 105h5v5h-5zM190 105h5v5h-5zM140 110h5v5h-5zM170 110h5v5h-5zM280 115h5v5h-5zM285 115h5v5h-5zM300 115h5v5h-5zM305 115h5v5h-5zM120 120h5v5h-5zM125 120h5v5h-5zM255 120h5v5h-5zM250 125h5v5h-5zM180 145h5v5h-5zM240 145h5v5h-5zM145 200h5v5h-5zM295 200h5v5h-5zM140 205h5v5h-5zM270 205h5v5h-5zM310 205h5v5h-5zM140 210h5v5h-5zM270 215h5v5h-5zM280 225h5v5h-5zM300 225h5v5h-5zM230 230h5v5h-5zM320 230h5v5h-5zM235 235h5v5h-5zM275 235h5v5h-5zM315 235h5v5h-5zM315 240h5v5h-5zM215 255h5v5h-5zM220 255h5v5h-5zM230 260h5v5h-5zM335 260h5v5h-5zM240 265h5v5h-5zM285 265h5v5h-5zM240 275h5v5h-5zM215 280h5v5h-5z"/><path fill="rgb(120,120,120)" d="M240 95h5v5h-5zM250 95h5v5h-5zM225 100h5v5h-5zM265 100h5v5h-5zM140 105h5v5h-5zM170 105h5v5h-5zM300 105h5v5h-5zM135 110h5v5h-5zM200 110h5v5h-5zM305 110h5v5h-5zM120 115h5v5h-5zM130 115h5v5h-5zM275 115h5v5h-5zM290 115h5v5h-5zM295 115h5v5h-5zM240 140h5v5h-5zM250 150h5v5h-5zM280 180h5v5h-5zM295 180h5v5h-5zM320 180h5v5h-5zM200 185h5v5h-5zM205 190h5v5h-5zM280 195h5v5h-5zM220 200h5v5h-5zM275 200h5v5h-5zM150 205h5v5h-5zM225 205h5v5h-5zM300 205h5v5h-5zM150 210h5v5h-5zM275 225h5v5h-5zM285 225h5v5h-5zM275 230h5v5h-5zM260 235h5v5h-5zM320 245h5v5h-5zM280 250h5v5h-5zM300 250h5v5h-5zM325 250h5v5h-5zM295 255h5v5h-5zM330 255h5v5h-5zM355 255h5v5h-5zM210 260h5v5h-5zM285 260h5v5h-5zM290 265h5v5h-5zM345 265h5v5h-5zM240 270h5v5h-5zM210 275h5v5h-5zM220 280h5v5h-5zM235 280h5v5h-5z"/><path fill="rgb(124,124,124)" d="M245 95h5v5h-5zM120 105h5v5h-5zM135 105h5v5h-5zM215 105h5v5h-5zM275 105h5v5h-5zM280 105h5v5h-5zM285 105h5v5h-5zM290 105h5v5h-5zM295 105h5v5h-5zM120 110h5v5h-5zM205 110h5v5h-5zM280 110h5v5h-5zM285 110h5v5h-5zM300 110h5v5h-5zM125 115h5v5h-5zM195 155h5v5h-5zM315 175h5v5h-5zM295 195h5v5h-5zM320 195h5v5h-5zM145 205h5v5h-5zM305 205h5v5h-5zM145 210h5v5h-5zM270 220h5v5h-5zM295 225h5v5h-5zM270 230h5v5h-5zM305 235h5v5h-5zM340 235h5v5h-5zM305 240h5v5h-5zM345 240h5v5h-5zM350 245h5v5h-5zM225 260h5v5h-5zM290 260h5v5h-5zM355 260h5v5h-5zM210 265h5v5h-5zM235 265h5v5h-5zM350 265h5v5h-5zM225 280h5v5h-5zM230 280h5v5h-5z"/><path fill="rgb(128,128,128)" d="M260 100h5v5h-5zM125 105h5v5h-5zM130 105h5v5h-5zM270 105h5v5h-5zM130 110h5v5h-5zM195 110h5v5h-5zM275 110h5v5h-5zM290 110h5v5h-5zM295 110h5v5h-5zM260 115h5v5h-5zM265 115h5v5h-5zM270 115h5v5h-5zM175 120h5v5h-5zM245 130h5v5h-5zM180 140h5v5h-5zM245 150h5v5h-5zM270 155h5v5h-5zM200 160h5v5h-5zM200 165h5v5h-5zM300 175h5v5h-5zM320 185h5v5h-5zM315 200h5v5h-5zM230 225h5v5h-5zM270 225h5v5h-5zM290 225h5v5h-5zM335 230h5v5h-5zM240 235h5v5h-5zM320 235h5v5h-5zM285 255h5v5h-5zM215 260h5v5h-5zM220 260h5v5h-5zM230 265h5v5h-5zM210 270h5v5h-5zM235 270h5v5h-5zM215 275h5v5h-5zM235 275h5v5h-5z"/><path fill="rgb(131,131,131)" d="M125 110h5v5h-5zM190 150h5v5h-5zM280 185h5v5h-5zM280 190h5v5h-5zM295 190h5v5h-5zM320 190h5v5h-5zM215 195h5v5h-5zM300 200h5v5h-5zM265 205h5v5h-5zM265 210h5v5h-5zM230 220h5v5h-5zM265 230h5v5h-5zM280 230h5v5h-5zM300 230h5v5h-5zM255 235h5v5h-5zM320 240h5v5h-5zM280 245h5v5h-5zM290 255h5v5h-5zM220 275h5v5h-5zM225 275h5v5h-5zM230 275h5v5h-5z"/><path fill="rgb(135,135,135)" d="M175 105h5v5h-5zM185 105h5v5h-5zM265 105h5v5h-5zM210 110h5v5h-5zM270 110h5v5h-5zM180 130h5v5h-5zM180 135h5v5h-5zM240 135h5v5h-5zM240 150h5v5h-5zM265 155h5v5h-5zM275 160h5v5h-5zM295 185h5v5h-5zM230 215h5v5h-5zM235 230h5v5h-5zM325 230h5v5h-5zM245 235h5v5h-5zM325 245h5v5h-5zM350 250h5v5h-5zM340 260h5v5h-5zM215 265h5v5h-5zM220 265h5v5h-5zM225 265h5v5h-5zM215 270h5v5h-5zM220 270h5v5h-5zM225 270h5v5h-5zM230 270h5v5h-5z"/><path fill="rgb(139,139,139)" d="M260 105h5v5h-5zM265 110h5v5h-5zM200 115h5v5h-5zM185 145h5v5h-5zM235 145h5v5h-5zM260 155h5v5h-5zM270 200h5v5h-5zM305 200h5v5h-5zM310 200h5v5h-5zM265 215h5v5h-5zM330 230h5v5h-5zM250 235h5v5h-5zM280 235h5v5h-5zM280 240h5v5h-5zM340 240h5v5h-5zM345 245h5v5h-5zM330 250h5v5h-5zM335 255h5v5h-5zM350 260h5v5h-5z"/><path fill="rgb(143,143,143)" d="M230 100h5v5h-5zM255 100h5v5h-5zM180 105h5v5h-5zM220 105h5v5h-5zM260 110h5v5h-5zM205 115h5v5h-5zM200 170h5v5h-5zM315 195h5v5h-5zM225 200h5v5h-5zM230 210h5v5h-5zM265 225h5v5h-5zM335 235h5v5h-5zM300 245h5v5h-5zM285 250h5v5h-5zM295 250h5v5h-5zM350 255h5v5h-5zM345 260h5v5h-5z"/><path fill="rgb(147,147,147)" d="M175 110h5v5h-5zM190 110h5v5h-5zM175 115h5v5h-5zM195 115h5v5h-5zM255 115h5v5h-5zM180 125h5v5h-5zM235 140h5v5h-5zM235 150h5v5h-5zM255 155h5v5h-5zM275 165h5v5h-5zM310 175h5v5h-5zM200 180h5v5h-5zM300 195h5v5h-5zM265 220h5v5h-5zM285 230h5v5h-5zM325 235h5v5h-5zM325 240h5v5h-5zM330 245h5v5h-5z"/><path fill="rgb(151,151,151)" d="M250 120h5v5h-5zM200 155h5v5h-5zM250 155h5v5h-5zM275 170h5v5h-5zM315 180h5v5h-5zM210 190h5v5h-5zM275 195h5v5h-5zM230 205h5v5h-5zM260 205h5v5h-5zM260 230h5v5h-5zM295 230h5v5h-5zM300 235h5v5h-5zM335 240h5v5h-5zM340 245h5v5h-5zM335 250h5v5h-5zM345 250h5v5h-5zM340 255h5v5h-5z"/><path fill="rgb(155,155,155)" d="M215 110h5v5h-5zM245 125h5v5h-5zM195 150h5v5h-5zM200 175h5v5h-5zM275 175h5v5h-5zM305 175h5v5h-5zM220 195h5v5h-5zM265 200h5v5h-5zM260 210h5v5h-5zM235 225h5v5h-5zM330 235h5v5h-5zM330 240h5v5h-5zM335 245h5v5h-5zM290 250h5v5h-5zM340 250h5v5h-5zM345 255h5v5h-5z"/><path fill="rgb(159,159,159)" d="M255 105h5v5h-5zM210 115h5v5h-5zM200 120h5v5h-5zM240 130h5v5h-5zM185 140h5v5h-5zM235 155h5v5h-5zM240 155h5v5h-5zM245 155h5v5h-5zM205 160h5v5h-5zM315 190h5v5h-5zM240 230h5v5h-5zM290 230h5v5h-5zM300 240h5v5h-5z"/><path fill="rgb(163,163,163)" d="M235 100h5v5h-5zM250 100h5v5h-5zM255 110h5v5h-5zM195 120h5v5h-5zM205 120h5v5h-5zM235 135h5v5h-5zM190 145h5v5h-5zM230 150h5v5h-5zM270 160h5v5h-5zM205 165h5v5h-5zM205 185h5v5h-5zM305 195h5v5h-5zM310 195h5v5h-5zM260 200h5v5h-5z"/><path fill="rgb(167,167,167)" d="M225 105h5v5h-5zM185 130h5v5h-5zM185 135h5v5h-5zM230 145h5v5h-5zM230 155h5v5h-5zM275 180h5v5h-5zM315 185h5v5h-5zM260 215h5v5h-5zM235 220h5v5h-5zM255 230h5v5h-5zM285 245h5v5h-5z"/><path fill="rgb(171,171,171)" d="M190 115h5v5h-5zM180 120h5v5h-5zM185 125h5v5h-5zM265 160h5v5h-5zM215 190h5v5h-5zM275 190h5v5h-5zM230 200h5v5h-5zM260 225h5v5h-5zM245 230h5v5h-5zM285 235h5v5h-5z"/><path fill="rgb(175,175,175)" d="M180 110h5v5h-5zM185 110h5v5h-5zM190 120h5v5h-5zM230 140h5v5h-5zM205 155h5v5h-5zM230 160h5v5h-5zM235 160h5v5h-5zM260 160h5v5h-5zM300 190h5v5h-5zM225 195h5v5h-5zM270 195h5v5h-5zM260 220h5v5h-5zM250 230h5v5h-5zM295 245h5v5h-5z"/><path fill="rgb(179,179,179)" d="M240 100h5v5h-5zM245 100h5v5h-5zM220 110h5v5h-5zM215 115h5v5h-5zM210 120h5v5h-5zM190 125h5v5h-5zM195 125h5v5h-5zM200 150h5v5h-5zM210 160h5v5h-5zM225 160h5v5h-5zM240 160h5v5h-5zM255 160h5v5h-5zM275 185h5v5h-5zM255 200h5v5h-5zM255 205h5v5h-5zM235 215h5v5h-5zM285 240h5v5h-5z"/><path fill="rgb(183,183,183)" d="M250 115h5v5h-5zM200 125h5v5h-5zM225 155h5v5h-5zM245 160h5v5h-5zM250 160h5v5h-5zM230 165h5v5h-5zM270 165h5v5h-5zM300 180h5v5h-5zM240 225h5v5h-5zM295 235h5v5h-5z"/><path fill="rgb(187,187,187)" d="M180 115h5v5h-5zM185 120h5v5h-5zM205 125h5v5h-5zM190 140h5v5h-5zM225 150h5v5h-5zM220 160h5v5h-5zM210 165h5v5h-5zM225 165h5v5h-5zM235 165h5v5h-5zM205 170h5v5h-5zM235 210h5v5h-5zM290 245h5v5h-5z"/><path fill="rgb(191,191,191)" d="M240 125h5v5h-5zM190 130h5v5h-5zM235 130h5v5h-5zM230 135h5v5h-5zM195 145h5v5h-5zM215 160h5v5h-5zM220 165h5v5h-5zM270 170h5v5h-5zM220 190h5v5h-5zM310 190h5v5h-5zM230 195h5v5h-5zM250 195h5v5h-5zM255 195h5v5h-5zM260 195h5v5h-5zM265 195h5v5h-5zM235 205h5v5h-5zM255 210h5v5h-5z"/><path fill="rgb(195,195,195)" d="M230 105h5v5h-5zM250 105h5v5h-5zM185 115h5v5h-5zM215 120h5v5h-5zM245 120h5v5h-5zM225 145h5v5h-5zM210 155h5v5h-5zM220 155h5v5h-5zM215 165h5v5h-5zM240 165h5v5h-5zM265 165h5v5h-5zM230 170h5v5h-5zM310 180h5v5h-5zM210 185h5v5h-5zM235 200h5v5h-5zM250 200h5v5h-5zM255 225h5v5h-5zM290 235h5v5h-5zM295 240h5v5h-5z"/><path fill="rgb(199,199,199)" d="M250 110h5v5h-5zM210 125h5v5h-5zM190 135h5v5h-5zM215 155h5v5h-5zM245 165h5v5h-5zM260 165h5v5h-5zM225 170h5v5h-5zM235 170h5v5h-5zM270 175h5v5h-5zM205 180h5v5h-5zM300 185h5v5h-5zM245 190h5v5h-5zM250 190h5v5h-5zM245 195h5v5h-5zM255 215h5v5h-5z"/><path fill="rgb(203,203,203)" d="M225 110h5v5h-5zM220 115h5v5h-5zM195 130h5v5h-5zM225 140h5v5h-5zM205 150h5v5h-5zM250 165h5v5h-5zM255 165h5v5h-5zM240 170h5v5h-5zM205 175h5v5h-5zM245 185h5v5h-5zM240 190h5v5h-5zM305 190h5v5h-5zM235 195h5v5h-5zM240 195h5v5h-5zM240 220h5v5h-5zM255 220h5v5h-5zM245 225h5v5h-5z"/><path fill="rgb(207,207,207)" d="M200 130h5v5h-5zM220 150h5v5h-5zM220 170h5v5h-5zM235 175h5v5h-5zM240 175h5v5h-5zM240 180h5v5h-5zM245 180h5v5h-5zM240 185h5v5h-5zM250 185h5v5h-5zM225 190h5v5h-5zM235 190h5v5h-5zM255 190h5v5h-5zM270 190h5v5h-5zM250 205h5v5h-5zM250 225h5v5h-5zM290 240h5v5h-5z"/><path fill="rgb(211,211,211)" d="M215 125h5v5h-5zM230 130h5v5h-5zM225 135h5v5h-5zM195 140h5v5h-5zM200 145h5v5h-5zM210 170h5v5h-5zM245 170h5v5h-5zM265 170h5v5h-5zM230 175h5v5h-5zM245 175h5v5h-5zM270 180h5v5h-5zM215 185h5v5h-5zM310 185h5v5h-5zM230 190h5v5h-5zM240 200h5v5h-5zM245 200h5v5h-5z"/><path fill="rgb(215,215,215)" d="M220 120h5v5h-5zM205 130h5v5h-5zM195 135h5v5h-5zM210 150h5v5h-5zM215 170h5v5h-5zM250 170h5v5h-5zM255 170h5v5h-5zM260 170h5v5h-5zM225 175h5v5h-5zM235 180h5v5h-5zM250 180h5v5h-5zM305 180h5v5h-5zM235 185h5v5h-5z"/><path fill="rgb(219,219,219)" d="M235 125h5v5h-5zM225 130h5v5h-5zM220 145h5v5h-5zM215 150h5v5h-5zM250 175h5v5h-5zM220 185h5v5h-5zM270 185h5v5h-5zM260 190h5v5h-5zM240 205h5v5h-5zM240 215h5v5h-5z"/><path fill="rgb(223,223,223)" d="M235 105h5v5h-5zM245 105h5v5h-5zM220 125h5v5h-5zM210 130h5v5h-5zM220 130h5v5h-5zM265 175h5v5h-5zM230 180h5v5h-5zM230 185h5v5h-5zM255 185h5v5h-5zM265 190h5v5h-5zM240 210h5v5h-5zM250 210h5v5h-5zM250 220h5v5h-5z"/><path fill="rgb(227,227,227)" d="M225 115h5v5h-5zM245 115h5v5h-5zM215 130h5v5h-5zM220 135h5v5h-5zM220 140h5v5h-5zM220 175h5v5h-5zM255 175h5v5h-5zM210 180h5v5h-5zM225 180h5v5h-5zM255 180h5v5h-5zM225 185h5v5h-5zM245 205h5v5h-5zM245 220h5v5h-5z"/><path fill="rgb(231,231,231)" d="M230 110h5v5h-5zM240 120h5v5h-5zM225 125h5v5h-5zM230 125h5v5h-5zM200 135h5v5h-5zM200 140h5v5h-5zM205 145h5v5h-5zM210 175h5v5h-5zM260 175h5v5h-5zM220 180h5v5h-5zM305 185h5v5h-5zM250 215h5v5h-5z"/><path fill="rgb(235,235,235)" d="M240 105h5v5h-5zM225 120h5v5h-5zM215 145h5v5h-5zM215 175h5v5h-5zM215 180h5v5h-5zM265 180h5v5h-5zM245 215h5v5h-5z"/><path fill="rgb(239,239,239)" d="M205 135h5v5h-5zM215 135h5v5h-5zM210 145h5v5h-5zM260 180h5v5h-5zM260 185h5v5h-5zM265 185h5v5h-5zM245 210h5v5h-5z"/><path fill="rgb(243,243,243)" d="M245 110h5v5h-5zM210 135h5v5h-5zM215 140h5v5h-5z"/><path fill="rgb(247,247,247)" d="M230 120h5v5h-5zM235 120h5v5h-5zM205 140h5v5h-5z"/><path fill="rgb(251,251,251)" d="M230 115h5v5h-5zM210 140h5v5h-5z"/><path fill="rgb(255,255,255)" d="M235 110h5v5h-5zM240 110h5v5h-5zM235 115h5v5h-5zM240 115h5v5h-5z"/></g></g></svg>
<svg class="ab" style="left:2440px;top:1170px;" width="438" height="400" viewBox="0 0 438 400"><defs><filter id="hfh2" x="0" y="0" width="438" height="400" filterUnits="userSpaceOnUse" color-interpolation-filters="sRGB"><feGaussianBlur stdDeviation="5"/><feColorMatrix type="matrix" values="1 0 0 0 0 0 1 0 0 0 0 0 1 0 0 1 0 0 0 0"/><feComponentTransfer><feFuncR type="table" tableValues="0.416 0.416 0.416 0.416 0.412 0.404 0.396 0.392 0.392 0.392 0.399 0.415 0.431 0.448 0.464 0.507 0.569 0.630 0.706 0.804 0.902 0.978 0.966 0.953 0.941 0.931 0.920 0.910 0.899 0.889 0.878 0.867 0.856 0.845 0.834 0.823 0.812 0.805 0.798 0.791 0.784"/><feFuncG type="table" tableValues="0.608 0.608 0.608 0.608 0.605 0.598 0.591 0.588 0.588 0.588 0.595 0.611 0.627 0.644 0.660 0.692 0.735 0.778 0.825 0.878 0.930 0.952 0.849 0.746 0.643 0.604 0.565 0.525 0.486 0.447 0.408 0.374 0.340 0.306 0.272 0.238 0.204 0.192 0.180 0.169 0.157"/><feFuncB type="table" tableValues="0.796 0.796 0.796 0.796 0.794 0.790 0.786 0.784 0.784 0.784 0.788 0.798 0.808 0.818 0.827 0.843 0.863 0.882 0.889 0.877 0.865 0.827 0.687 0.548 0.408 0.382 0.356 0.329 0.303 0.277 0.251 0.237 0.222 0.208 0.193 0.179 0.165 0.161 0.157 0.153 0.149"/><feFuncA type="table" tableValues="0.000 0.000 0.000 0.000 0.079 0.275 0.471 0.634 0.775 0.916 1.000 1.000 1.000 1.000 1.000 1.000 1.000 1.000 1.000 1.000 1.000 1.000 1.000 1.000 1.000 1.000 1.000 1.000 1.000 1.000 1.000 1.000 1.000 1.000 1.000 1.000 1.000 1.000 1.000 1.000 1.000"/></feComponentTransfer></filter><clipPath id="hch2"><rect x="108" y="99" width="256" height="301"/></clipPath></defs><g clip-path="url(#hch2)"><g filter="url(#hfh2)"><rect x="0" y="0" width="438" height="400" fill="#000"/><path fill="rgb(16,16,16)" d="M165 105h5v5h-5zM180 105h5v5h-5zM200 105h5v5h-5zM205 105h5v5h-5zM210 105h5v5h-5zM215 105h5v5h-5zM235 105h5v5h-5zM130 115h5v5h-5zM150 115h5v5h-5zM155 115h5v5h-5zM250 120h5v5h-5zM115 130h5v5h-5zM255 130h5v5h-5zM110 135h5v5h-5zM260 140h5v5h-5zM105 145h5v5h-5zM100 155h5v5h-5zM265 155h5v5h-5zM270 165h5v5h-5zM275 175h5v5h-5zM280 180h5v5h-5zM295 185h5v5h-5zM300 185h5v5h-5zM305 185h5v5h-5zM310 185h5v5h-5zM315 185h5v5h-5zM350 190h5v5h-5zM365 195h5v5h-5zM100 335h5v5h-5zM105 345h5v5h-5zM115 350h5v5h-5zM135 350h5v5h-5zM325 350h5v5h-5zM350 350h5v5h-5zM150 355h5v5h-5zM155 355h5v5h-5zM170 355h5v5h-5zM175 355h5v5h-5zM185 355h5v5h-5zM190 355h5v5h-5zM270 355h5v5h-5zM275 355h5v5h-5zM285 355h5v5h-5zM290 355h5v5h-5zM305 355h5v5h-5zM310 355h5v5h-5zM200 360h5v5h-5zM215 360h5v5h-5zM220 360h5v5h-5zM240 360h5v5h-5zM245 360h5v5h-5zM260 360h5v5h-5z"/><path fill="rgb(20,20,20)" d="M170 105h5v5h-5zM175 105h5v5h-5zM220 105h5v5h-5zM225 105h5v5h-5zM230 105h5v5h-5zM160 110h5v5h-5zM185 110h5v5h-5zM190 110h5v5h-5zM240 110h5v5h-5zM135 115h5v5h-5zM140 115h5v5h-5zM145 115h5v5h-5zM245 115h5v5h-5zM125 120h5v5h-5zM120 125h5v5h-5zM250 125h5v5h-5zM165 130h5v5h-5zM170 130h5v5h-5zM165 135h5v5h-5zM170 135h5v5h-5zM255 135h5v5h-5zM110 140h5v5h-5zM260 145h5v5h-5zM100 160h5v5h-5zM100 165h5v5h-5zM285 185h5v5h-5zM290 185h5v5h-5zM335 190h5v5h-5zM340 190h5v5h-5zM345 190h5v5h-5zM360 195h5v5h-5zM100 320h5v5h-5zM100 325h5v5h-5zM100 330h5v5h-5zM360 345h5v5h-5zM120 350h5v5h-5zM125 350h5v5h-5zM130 350h5v5h-5zM140 350h5v5h-5zM145 350h5v5h-5zM315 350h5v5h-5zM320 350h5v5h-5zM330 350h5v5h-5zM335 350h5v5h-5zM345 350h5v5h-5zM160 355h5v5h-5zM165 355h5v5h-5zM225 355h5v5h-5zM230 355h5v5h-5zM235 355h5v5h-5zM295 355h5v5h-5zM300 355h5v5h-5zM205 360h5v5h-5zM210 360h5v5h-5zM250 360h5v5h-5zM255 360h5v5h-5z"/><path fill="rgb(24,24,24)" d="M180 110h5v5h-5zM195 110h5v5h-5zM200 110h5v5h-5zM205 110h5v5h-5zM235 110h5v5h-5zM160 115h5v5h-5zM150 120h5v5h-5zM155 120h5v5h-5zM160 120h5v5h-5zM245 120h5v5h-5zM160 125h5v5h-5zM165 125h5v5h-5zM160 130h5v5h-5zM250 130h5v5h-5zM115 135h5v5h-5zM165 140h5v5h-5zM170 140h5v5h-5zM105 150h5v5h-5zM260 150h5v5h-5zM265 160h5v5h-5zM100 170h5v5h-5zM270 170h5v5h-5zM275 180h5v5h-5zM315 190h5v5h-5zM320 190h5v5h-5zM325 190h5v5h-5zM330 190h5v5h-5zM355 195h5v5h-5zM365 200h5v5h-5zM100 275h5v5h-5zM100 310h5v5h-5zM100 315h5v5h-5zM105 340h5v5h-5zM365 340h5v5h-5zM110 345h5v5h-5zM355 345h5v5h-5zM150 350h5v5h-5zM175 350h5v5h-5zM180 350h5v5h-5zM185 350h5v5h-5zM275 350h5v5h-5zM280 350h5v5h-5zM285 350h5v5h-5zM310 350h5v5h-5zM340 350h5v5h-5zM195 355h5v5h-5zM220 355h5v5h-5zM240 355h5v5h-5zM265 355h5v5h-5z"/><path fill="rgb(28,28,28)" d="M165 110h5v5h-5zM175 110h5v5h-5zM210 110h5v5h-5zM215 110h5v5h-5zM220 110h5v5h-5zM230 110h5v5h-5zM180 115h5v5h-5zM185 115h5v5h-5zM240 115h5v5h-5zM130 120h5v5h-5zM145 120h5v5h-5zM165 120h5v5h-5zM125 125h5v5h-5zM155 125h5v5h-5zM170 125h5v5h-5zM175 125h5v5h-5zM120 130h5v5h-5zM175 130h5v5h-5zM160 135h5v5h-5zM175 135h5v5h-5zM175 140h5v5h-5zM255 140h5v5h-5zM110 145h5v5h-5zM165 145h5v5h-5zM170 145h5v5h-5zM105 155h5v5h-5zM105 160h5v5h-5zM265 165h5v5h-5zM100 175h5v5h-5zM270 175h5v5h-5zM280 185h5v5h-5zM305 190h5v5h-5zM310 190h5v5h-5zM350 195h5v5h-5zM100 270h5v5h-5zM100 280h5v5h-5zM100 305h5v5h-5zM105 335h5v5h-5zM115 345h5v5h-5zM135 345h5v5h-5zM140 345h5v5h-5zM320 345h5v5h-5zM325 345h5v5h-5zM155 350h5v5h-5zM170 350h5v5h-5zM190 350h5v5h-5zM230 350h5v5h-5zM270 350h5v5h-5zM290 350h5v5h-5zM305 350h5v5h-5zM200 355h5v5h-5zM215 355h5v5h-5zM245 355h5v5h-5zM260 355h5v5h-5z"/><path fill="rgb(32,32,32)" d="M170 110h5v5h-5zM225 110h5v5h-5zM165 115h5v5h-5zM190 115h5v5h-5zM135 120h5v5h-5zM140 120h5v5h-5zM170 120h5v5h-5zM180 120h5v5h-5zM180 125h5v5h-5zM245 125h5v5h-5zM155 130h5v5h-5zM180 130h5v5h-5zM250 135h5v5h-5zM115 140h5v5h-5zM160 140h5v5h-5zM255 145h5v5h-5zM170 150h5v5h-5zM260 155h5v5h-5zM105 165h5v5h-5zM100 180h5v5h-5zM285 190h5v5h-5zM290 190h5v5h-5zM295 190h5v5h-5zM300 190h5v5h-5zM345 195h5v5h-5zM360 200h5v5h-5zM100 265h5v5h-5zM100 285h5v5h-5zM100 290h5v5h-5zM100 295h5v5h-5zM100 300h5v5h-5zM105 330h5v5h-5zM110 340h5v5h-5zM360 340h5v5h-5zM120 345h5v5h-5zM125 345h5v5h-5zM130 345h5v5h-5zM145 345h5v5h-5zM180 345h5v5h-5zM185 345h5v5h-5zM275 345h5v5h-5zM280 345h5v5h-5zM315 345h5v5h-5zM330 345h5v5h-5zM350 345h5v5h-5zM160 350h5v5h-5zM165 350h5v5h-5zM225 350h5v5h-5zM235 350h5v5h-5zM295 350h5v5h-5zM300 350h5v5h-5zM205 355h5v5h-5zM210 355h5v5h-5zM250 355h5v5h-5zM255 355h5v5h-5z"/><path fill="rgb(36,36,36)" d="M170 115h5v5h-5zM175 115h5v5h-5zM195 115h5v5h-5zM200 115h5v5h-5zM205 115h5v5h-5zM235 115h5v5h-5zM175 120h5v5h-5zM185 120h5v5h-5zM240 120h5v5h-5zM150 125h5v5h-5zM120 135h5v5h-5zM180 135h5v5h-5zM175 145h5v5h-5zM110 150h5v5h-5zM165 150h5v5h-5zM165 155h5v5h-5zM170 155h5v5h-5zM170 160h5v5h-5zM260 160h5v5h-5zM170 165h5v5h-5zM105 170h5v5h-5zM170 170h5v5h-5zM265 170h5v5h-5zM170 175h5v5h-5zM170 180h5v5h-5zM270 180h5v5h-5zM100 185h5v5h-5zM275 185h5v5h-5zM100 190h5v5h-5zM280 190h5v5h-5zM100 195h5v5h-5zM340 195h5v5h-5zM365 205h5v5h-5zM100 230h5v5h-5zM100 235h5v5h-5zM100 240h5v5h-5zM100 260h5v5h-5zM105 270h5v5h-5zM105 275h5v5h-5zM105 310h5v5h-5zM105 315h5v5h-5zM105 320h5v5h-5zM105 325h5v5h-5zM365 335h5v5h-5zM150 345h5v5h-5zM175 345h5v5h-5zM190 345h5v5h-5zM270 345h5v5h-5zM285 345h5v5h-5zM310 345h5v5h-5zM335 345h5v5h-5zM340 345h5v5h-5zM345 345h5v5h-5zM195 350h5v5h-5zM220 350h5v5h-5zM240 350h5v5h-5zM265 350h5v5h-5z"/><path fill="rgb(40,40,40)" d="M210 115h5v5h-5zM215 115h5v5h-5zM230 115h5v5h-5zM190 120h5v5h-5zM130 125h5v5h-5zM185 125h5v5h-5zM125 130h5v5h-5zM245 130h5v5h-5zM155 135h5v5h-5zM180 140h5v5h-5zM250 140h5v5h-5zM115 145h5v5h-5zM160 145h5v5h-5zM175 150h5v5h-5zM255 150h5v5h-5zM110 155h5v5h-5zM165 160h5v5h-5zM165 165h5v5h-5zM165 170h5v5h-5zM175 170h5v5h-5zM105 175h5v5h-5zM165 175h5v5h-5zM175 175h5v5h-5zM165 180h5v5h-5zM175 180h5v5h-5zM170 185h5v5h-5zM315 195h5v5h-5zM320 195h5v5h-5zM325 195h5v5h-5zM330 195h5v5h-5zM335 195h5v5h-5zM100 200h5v5h-5zM355 200h5v5h-5zM100 205h5v5h-5zM100 225h5v5h-5zM100 245h5v5h-5zM100 250h5v5h-5zM100 255h5v5h-5zM365 270h5v5h-5zM105 280h5v5h-5zM105 305h5v5h-5zM110 335h5v5h-5zM115 340h5v5h-5zM135 340h5v5h-5zM140 340h5v5h-5zM145 340h5v5h-5zM180 340h5v5h-5zM185 340h5v5h-5zM275 340h5v5h-5zM280 340h5v5h-5zM315 340h5v5h-5zM320 340h5v5h-5zM355 340h5v5h-5zM225 345h5v5h-5zM230 345h5v5h-5z"/><path fill="rgb(44,44,44)" d="M220 115h5v5h-5zM225 115h5v5h-5zM195 120h5v5h-5zM145 125h5v5h-5zM240 125h5v5h-5zM185 130h5v5h-5zM245 135h5v5h-5zM120 140h5v5h-5zM160 150h5v5h-5zM175 155h5v5h-5zM110 160h5v5h-5zM175 160h5v5h-5zM175 165h5v5h-5zM260 165h5v5h-5zM220 170h5v5h-5zM265 175h5v5h-5zM165 185h5v5h-5zM175 185h5v5h-5zM305 195h5v5h-5zM310 195h5v5h-5zM350 200h5v5h-5zM360 205h5v5h-5zM100 210h5v5h-5zM365 210h5v5h-5zM100 215h5v5h-5zM100 220h5v5h-5zM105 265h5v5h-5zM365 265h5v5h-5zM165 275h5v5h-5zM170 275h5v5h-5zM365 275h5v5h-5zM165 280h5v5h-5zM170 280h5v5h-5zM105 285h5v5h-5zM185 335h5v5h-5zM275 335h5v5h-5zM130 340h5v5h-5zM190 340h5v5h-5zM270 340h5v5h-5zM325 340h5v5h-5zM155 345h5v5h-5zM170 345h5v5h-5zM235 345h5v5h-5zM265 345h5v5h-5zM290 345h5v5h-5zM305 345h5v5h-5zM200 350h5v5h-5zM215 350h5v5h-5zM245 350h5v5h-5zM260 350h5v5h-5z"/><path fill="rgb(48,48,48)" d="M200 120h5v5h-5zM205 120h5v5h-5zM210 120h5v5h-5zM235 120h5v5h-5zM135 125h5v5h-5zM140 125h5v5h-5zM190 125h5v5h-5zM150 130h5v5h-5zM125 135h5v5h-5zM185 135h5v5h-5zM155 140h5v5h-5zM180 145h5v5h-5zM250 145h5v5h-5zM115 150h5v5h-5zM160 155h5v5h-5zM215 155h5v5h-5zM255 155h5v5h-5zM160 160h5v5h-5zM215 160h5v5h-5zM220 160h5v5h-5zM110 165h5v5h-5zM160 165h5v5h-5zM215 165h5v5h-5zM220 165h5v5h-5zM160 170h5v5h-5zM215 170h5v5h-5zM220 175h5v5h-5zM105 180h5v5h-5zM270 185h5v5h-5zM170 190h5v5h-5zM175 190h5v5h-5zM275 190h5v5h-5zM285 195h5v5h-5zM290 195h5v5h-5zM295 195h5v5h-5zM300 195h5v5h-5zM105 235h5v5h-5zM365 260h5v5h-5zM110 270h5v5h-5zM110 275h5v5h-5zM135 275h5v5h-5zM160 275h5v5h-5zM135 280h5v5h-5zM140 280h5v5h-5zM145 280h5v5h-5zM160 280h5v5h-5zM365 280h5v5h-5zM140 285h5v5h-5zM170 285h5v5h-5zM105 290h5v5h-5zM295 290h5v5h-5zM105 295h5v5h-5zM105 300h5v5h-5zM110 315h5v5h-5zM310 315h5v5h-5zM110 330h5v5h-5zM185 330h5v5h-5zM270 330h5v5h-5zM275 330h5v5h-5zM365 330h5v5h-5zM140 335h5v5h-5zM180 335h5v5h-5zM270 335h5v5h-5zM280 335h5v5h-5zM315 335h5v5h-5zM320 335h5v5h-5zM360 335h5v5h-5zM120 340h5v5h-5zM125 340h5v5h-5zM150 340h5v5h-5zM175 340h5v5h-5zM225 340h5v5h-5zM230 340h5v5h-5zM285 340h5v5h-5zM310 340h5v5h-5zM330 340h5v5h-5zM160 345h5v5h-5zM165 345h5v5h-5zM195 345h5v5h-5zM220 345h5v5h-5zM295 345h5v5h-5zM300 345h5v5h-5zM205 350h5v5h-5zM210 350h5v5h-5zM250 350h5v5h-5zM255 350h5v5h-5z"/><path fill="rgb(52,52,52)" d="M215 120h5v5h-5zM230 120h5v5h-5zM130 130h5v5h-5zM190 130h5v5h-5zM240 130h5v5h-5zM185 140h5v5h-5zM120 145h5v5h-5zM155 145h5v5h-5zM215 145h5v5h-5zM180 150h5v5h-5zM215 150h5v5h-5zM210 155h5v5h-5zM220 155h5v5h-5zM255 160h5v5h-5zM225 165h5v5h-5zM110 170h5v5h-5zM180 170h5v5h-5zM225 170h5v5h-5zM260 170h5v5h-5zM160 175h5v5h-5zM180 175h5v5h-5zM215 175h5v5h-5zM225 175h5v5h-5zM180 180h5v5h-5zM265 180h5v5h-5zM105 185h5v5h-5zM180 185h5v5h-5zM105 190h5v5h-5zM165 190h5v5h-5zM280 195h5v5h-5zM345 200h5v5h-5zM365 215h5v5h-5zM105 230h5v5h-5zM105 240h5v5h-5zM105 260h5v5h-5zM160 270h5v5h-5zM165 270h5v5h-5zM170 270h5v5h-5zM130 275h5v5h-5zM140 275h5v5h-5zM145 275h5v5h-5zM150 275h5v5h-5zM155 275h5v5h-5zM175 275h5v5h-5zM110 280h5v5h-5zM130 280h5v5h-5zM150 280h5v5h-5zM155 280h5v5h-5zM175 280h5v5h-5zM135 285h5v5h-5zM145 285h5v5h-5zM165 285h5v5h-5zM175 285h5v5h-5zM295 285h5v5h-5zM300 285h5v5h-5zM365 285h5v5h-5zM135 290h5v5h-5zM140 290h5v5h-5zM175 290h5v5h-5zM290 290h5v5h-5zM300 290h5v5h-5zM295 295h5v5h-5zM300 295h5v5h-5zM300 300h5v5h-5zM135 305h5v5h-5zM140 305h5v5h-5zM300 305h5v5h-5zM305 305h5v5h-5zM110 310h5v5h-5zM135 310h5v5h-5zM140 310h5v5h-5zM300 310h5v5h-5zM305 310h5v5h-5zM310 310h5v5h-5zM315 310h5v5h-5zM140 315h5v5h-5zM145 315h5v5h-5zM305 315h5v5h-5zM315 315h5v5h-5zM320 315h5v5h-5zM110 320h5v5h-5zM140 320h5v5h-5zM145 320h5v5h-5zM310 320h5v5h-5zM315 320h5v5h-5zM110 325h5v5h-5zM180 325h5v5h-5zM185 325h5v5h-5zM270 325h5v5h-5zM275 325h5v5h-5zM315 325h5v5h-5zM140 330h5v5h-5zM180 330h5v5h-5zM280 330h5v5h-5zM315 330h5v5h-5zM115 335h5v5h-5zM135 335h5v5h-5zM145 335h5v5h-5zM190 335h5v5h-5zM235 340h5v5h-5zM350 340h5v5h-5zM240 345h5v5h-5z"/><path fill="rgb(56,56,56)" d="M220 120h5v5h-5zM225 120h5v5h-5zM195 125h5v5h-5zM200 125h5v5h-5zM205 125h5v5h-5zM235 125h5v5h-5zM240 135h5v5h-5zM125 140h5v5h-5zM210 140h5v5h-5zM215 140h5v5h-5zM245 140h5v5h-5zM210 145h5v5h-5zM220 145h5v5h-5zM155 150h5v5h-5zM210 150h5v5h-5zM220 150h5v5h-5zM250 150h5v5h-5zM115 155h5v5h-5zM180 155h5v5h-5zM180 160h5v5h-5zM210 160h5v5h-5zM225 160h5v5h-5zM180 165h5v5h-5zM210 165h5v5h-5zM110 175h5v5h-5zM160 180h5v5h-5zM220 180h5v5h-5zM225 180h5v5h-5zM160 185h5v5h-5zM180 190h5v5h-5zM105 195h5v5h-5zM170 195h5v5h-5zM105 200h5v5h-5zM285 200h5v5h-5zM340 200h5v5h-5zM105 205h5v5h-5zM355 205h5v5h-5zM365 220h5v5h-5zM105 225h5v5h-5zM365 225h5v5h-5zM300 230h5v5h-5zM305 230h5v5h-5zM305 235h5v5h-5zM305 240h5v5h-5zM105 245h5v5h-5zM105 250h5v5h-5zM105 255h5v5h-5zM365 255h5v5h-5zM110 265h5v5h-5zM360 265h5v5h-5zM115 270h5v5h-5zM120 270h5v5h-5zM125 270h5v5h-5zM130 270h5v5h-5zM135 270h5v5h-5zM155 270h5v5h-5zM315 270h5v5h-5zM360 270h5v5h-5zM115 275h5v5h-5zM120 275h5v5h-5zM125 275h5v5h-5zM315 275h5v5h-5zM360 275h5v5h-5zM125 280h5v5h-5zM305 280h5v5h-5zM130 285h5v5h-5zM150 285h5v5h-5zM160 285h5v5h-5zM290 285h5v5h-5zM305 285h5v5h-5zM145 290h5v5h-5zM170 290h5v5h-5zM365 290h5v5h-5zM135 295h5v5h-5zM140 295h5v5h-5zM290 295h5v5h-5zM365 295h5v5h-5zM135 300h5v5h-5zM140 300h5v5h-5zM295 300h5v5h-5zM305 300h5v5h-5zM110 305h5v5h-5zM175 305h5v5h-5zM295 305h5v5h-5zM310 305h5v5h-5zM145 310h5v5h-5zM175 310h5v5h-5zM295 310h5v5h-5zM320 310h5v5h-5zM135 315h5v5h-5zM175 315h5v5h-5zM180 315h5v5h-5zM265 315h5v5h-5zM300 315h5v5h-5zM175 320h5v5h-5zM180 320h5v5h-5zM185 320h5v5h-5zM265 320h5v5h-5zM270 320h5v5h-5zM275 320h5v5h-5zM305 320h5v5h-5zM320 320h5v5h-5zM140 325h5v5h-5zM145 325h5v5h-5zM265 325h5v5h-5zM280 325h5v5h-5zM310 325h5v5h-5zM320 325h5v5h-5zM145 330h5v5h-5zM190 330h5v5h-5zM320 330h5v5h-5zM175 335h5v5h-5zM225 335h5v5h-5zM230 335h5v5h-5zM285 335h5v5h-5zM310 335h5v5h-5zM325 335h5v5h-5zM155 340h5v5h-5zM170 340h5v5h-5zM195 340h5v5h-5zM265 340h5v5h-5zM290 340h5v5h-5zM305 340h5v5h-5zM335 340h5v5h-5zM345 340h5v5h-5zM200 345h5v5h-5zM215 345h5v5h-5zM260 345h5v5h-5z"/><path fill="rgb(60,60,60)" d="M210 125h5v5h-5zM215 125h5v5h-5zM230 125h5v5h-5zM145 130h5v5h-5zM195 130h5v5h-5zM210 130h5v5h-5zM215 130h5v5h-5zM235 130h5v5h-5zM150 135h5v5h-5zM190 135h5v5h-5zM210 135h5v5h-5zM215 135h5v5h-5zM220 140h5v5h-5zM185 145h5v5h-5zM120 150h5v5h-5zM155 155h5v5h-5zM225 155h5v5h-5zM115 160h5v5h-5zM155 160h5v5h-5zM115 165h5v5h-5zM155 165h5v5h-5zM255 165h5v5h-5zM210 170h5v5h-5zM230 170h5v5h-5zM230 175h5v5h-5zM260 175h5v5h-5zM215 180h5v5h-5zM230 180h5v5h-5zM265 185h5v5h-5zM270 190h5v5h-5zM165 195h5v5h-5zM175 195h5v5h-5zM275 195h5v5h-5zM290 200h5v5h-5zM310 200h5v5h-5zM315 200h5v5h-5zM320 200h5v5h-5zM325 200h5v5h-5zM330 200h5v5h-5zM335 200h5v5h-5zM105 210h5v5h-5zM360 210h5v5h-5zM105 215h5v5h-5zM105 220h5v5h-5zM300 225h5v5h-5zM365 230h5v5h-5zM110 235h5v5h-5zM300 235h5v5h-5zM310 235h5v5h-5zM365 235h5v5h-5zM310 240h5v5h-5zM310 245h5v5h-5zM315 265h5v5h-5zM140 270h5v5h-5zM145 270h5v5h-5zM175 270h5v5h-5zM310 270h5v5h-5zM320 270h5v5h-5zM310 275h5v5h-5zM320 275h5v5h-5zM115 280h5v5h-5zM120 280h5v5h-5zM300 280h5v5h-5zM310 280h5v5h-5zM110 285h5v5h-5zM155 285h5v5h-5zM285 285h5v5h-5zM130 290h5v5h-5zM165 290h5v5h-5zM285 290h5v5h-5zM305 290h5v5h-5zM145 295h5v5h-5zM170 295h5v5h-5zM175 295h5v5h-5zM305 295h5v5h-5zM110 300h5v5h-5zM130 300h5v5h-5zM145 300h5v5h-5zM175 300h5v5h-5zM290 300h5v5h-5zM365 300h5v5h-5zM130 305h5v5h-5zM145 305h5v5h-5zM180 305h5v5h-5zM315 305h5v5h-5zM115 310h5v5h-5zM130 310h5v5h-5zM150 310h5v5h-5zM170 310h5v5h-5zM180 310h5v5h-5zM325 310h5v5h-5zM115 315h5v5h-5zM130 315h5v5h-5zM150 315h5v5h-5zM170 315h5v5h-5zM260 315h5v5h-5zM270 315h5v5h-5zM295 315h5v5h-5zM135 320h5v5h-5zM150 320h5v5h-5zM260 320h5v5h-5zM280 320h5v5h-5zM135 325h5v5h-5zM150 325h5v5h-5zM175 325h5v5h-5zM190 325h5v5h-5zM365 325h5v5h-5zM135 330h5v5h-5zM150 330h5v5h-5zM175 330h5v5h-5zM265 330h5v5h-5zM285 330h5v5h-5zM310 330h5v5h-5zM120 335h5v5h-5zM130 335h5v5h-5zM150 335h5v5h-5zM235 335h5v5h-5zM265 335h5v5h-5zM355 335h5v5h-5zM165 340h5v5h-5zM220 340h5v5h-5zM340 340h5v5h-5zM245 345h5v5h-5z"/><path fill="rgb(64,64,64)" d="M220 125h5v5h-5zM225 125h5v5h-5zM135 130h5v5h-5zM200 130h5v5h-5zM205 130h5v5h-5zM220 130h5v5h-5zM130 135h5v5h-5zM195 135h5v5h-5zM200 135h5v5h-5zM205 135h5v5h-5zM220 135h5v5h-5zM190 140h5v5h-5zM205 140h5v5h-5zM240 140h5v5h-5zM125 145h5v5h-5zM205 145h5v5h-5zM225 145h5v5h-5zM245 145h5v5h-5zM205 150h5v5h-5zM225 150h5v5h-5zM205 155h5v5h-5zM250 155h5v5h-5zM230 165h5v5h-5zM115 170h5v5h-5zM155 170h5v5h-5zM155 175h5v5h-5zM210 175h5v5h-5zM110 180h5v5h-5zM220 185h5v5h-5zM225 185h5v5h-5zM160 190h5v5h-5zM180 195h5v5h-5zM280 200h5v5h-5zM295 200h5v5h-5zM300 200h5v5h-5zM305 200h5v5h-5zM350 205h5v5h-5zM305 225h5v5h-5zM110 230h5v5h-5zM310 230h5v5h-5zM110 240h5v5h-5zM300 240h5v5h-5zM315 240h5v5h-5zM365 240h5v5h-5zM305 245h5v5h-5zM315 245h5v5h-5zM365 245h5v5h-5zM310 250h5v5h-5zM365 250h5v5h-5zM110 260h5v5h-5zM360 260h5v5h-5zM115 265h5v5h-5zM120 265h5v5h-5zM125 265h5v5h-5zM130 265h5v5h-5zM160 265h5v5h-5zM165 265h5v5h-5zM320 265h5v5h-5zM150 270h5v5h-5zM325 270h5v5h-5zM305 275h5v5h-5zM325 275h5v5h-5zM315 280h5v5h-5zM320 280h5v5h-5zM325 280h5v5h-5zM360 280h5v5h-5zM115 285h5v5h-5zM125 285h5v5h-5zM180 285h5v5h-5zM310 285h5v5h-5zM110 290h5v5h-5zM150 290h5v5h-5zM180 290h5v5h-5zM280 290h5v5h-5zM110 295h5v5h-5zM130 295h5v5h-5zM180 295h5v5h-5zM285 295h5v5h-5zM170 300h5v5h-5zM180 300h5v5h-5zM310 300h5v5h-5zM115 305h5v5h-5zM125 305h5v5h-5zM170 305h5v5h-5zM290 305h5v5h-5zM320 305h5v5h-5zM325 305h5v5h-5zM365 305h5v5h-5zM120 310h5v5h-5zM125 310h5v5h-5zM165 310h5v5h-5zM260 310h5v5h-5zM265 310h5v5h-5zM290 310h5v5h-5zM155 315h5v5h-5zM165 315h5v5h-5zM185 315h5v5h-5zM275 315h5v5h-5zM280 315h5v5h-5zM290 315h5v5h-5zM325 315h5v5h-5zM115 320h5v5h-5zM155 320h5v5h-5zM170 320h5v5h-5zM190 320h5v5h-5zM285 320h5v5h-5zM295 320h5v5h-5zM300 320h5v5h-5zM325 320h5v5h-5zM115 325h5v5h-5zM260 325h5v5h-5zM285 325h5v5h-5zM305 325h5v5h-5zM115 330h5v5h-5zM195 330h5v5h-5zM225 330h5v5h-5zM230 330h5v5h-5zM325 330h5v5h-5zM360 330h5v5h-5zM125 335h5v5h-5zM170 335h5v5h-5zM195 335h5v5h-5zM220 335h5v5h-5zM305 335h5v5h-5zM330 335h5v5h-5zM160 340h5v5h-5zM240 340h5v5h-5zM295 340h5v5h-5zM300 340h5v5h-5zM205 345h5v5h-5zM210 345h5v5h-5zM250 345h5v5h-5zM255 345h5v5h-5z"/><path fill="rgb(68,68,68)" d="M140 130h5v5h-5zM225 130h5v5h-5zM230 130h5v5h-5zM225 135h5v5h-5zM230 135h5v5h-5zM235 135h5v5h-5zM150 140h5v5h-5zM195 140h5v5h-5zM200 140h5v5h-5zM225 140h5v5h-5zM190 145h5v5h-5zM185 150h5v5h-5zM120 155h5v5h-5zM205 160h5v5h-5zM230 160h5v5h-5zM250 160h5v5h-5zM185 165h5v5h-5zM205 165h5v5h-5zM185 170h5v5h-5zM255 170h5v5h-5zM115 175h5v5h-5zM185 175h5v5h-5zM155 180h5v5h-5zM185 180h5v5h-5zM260 180h5v5h-5zM110 185h5v5h-5zM185 185h5v5h-5zM215 185h5v5h-5zM230 185h5v5h-5zM185 190h5v5h-5zM160 195h5v5h-5zM280 205h5v5h-5zM285 205h5v5h-5zM295 225h5v5h-5zM310 225h5v5h-5zM295 230h5v5h-5zM115 235h5v5h-5zM125 235h5v5h-5zM130 235h5v5h-5zM315 235h5v5h-5zM125 240h5v5h-5zM130 240h5v5h-5zM110 245h5v5h-5zM315 250h5v5h-5zM315 255h5v5h-5zM315 260h5v5h-5zM320 260h5v5h-5zM135 265h5v5h-5zM140 265h5v5h-5zM155 265h5v5h-5zM170 265h5v5h-5zM310 265h5v5h-5zM325 265h5v5h-5zM180 275h5v5h-5zM330 275h5v5h-5zM180 280h5v5h-5zM295 280h5v5h-5zM330 280h5v5h-5zM120 285h5v5h-5zM280 285h5v5h-5zM360 285h5v5h-5zM155 290h5v5h-5zM160 290h5v5h-5zM310 290h5v5h-5zM150 295h5v5h-5zM165 295h5v5h-5zM310 295h5v5h-5zM125 300h5v5h-5zM285 300h5v5h-5zM315 300h5v5h-5zM120 305h5v5h-5zM150 305h5v5h-5zM165 305h5v5h-5zM260 305h5v5h-5zM265 305h5v5h-5zM330 305h5v5h-5zM155 310h5v5h-5zM160 310h5v5h-5zM185 310h5v5h-5zM255 310h5v5h-5zM270 310h5v5h-5zM285 310h5v5h-5zM330 310h5v5h-5zM365 310h5v5h-5zM120 315h5v5h-5zM125 315h5v5h-5zM160 315h5v5h-5zM220 315h5v5h-5zM255 315h5v5h-5zM285 315h5v5h-5zM130 320h5v5h-5zM160 320h5v5h-5zM165 320h5v5h-5zM215 320h5v5h-5zM220 320h5v5h-5zM290 320h5v5h-5zM365 320h5v5h-5zM155 325h5v5h-5zM170 325h5v5h-5zM195 325h5v5h-5zM220 325h5v5h-5zM225 325h5v5h-5zM290 325h5v5h-5zM325 325h5v5h-5zM130 330h5v5h-5zM170 330h5v5h-5zM220 330h5v5h-5zM235 330h5v5h-5zM260 330h5v5h-5zM290 330h5v5h-5zM305 330h5v5h-5zM155 335h5v5h-5zM290 335h5v5h-5zM200 340h5v5h-5zM215 340h5v5h-5zM260 340h5v5h-5z"/><path fill="rgb(72,72,72)" d="M130 140h5v5h-5zM230 140h5v5h-5zM235 140h5v5h-5zM150 145h5v5h-5zM195 145h5v5h-5zM200 145h5v5h-5zM230 145h5v5h-5zM240 145h5v5h-5zM125 150h5v5h-5zM150 150h5v5h-5zM245 150h5v5h-5zM150 155h5v5h-5zM185 155h5v5h-5zM230 155h5v5h-5zM120 160h5v5h-5zM150 160h5v5h-5zM185 160h5v5h-5zM120 165h5v5h-5zM150 165h5v5h-5zM205 170h5v5h-5zM235 170h5v5h-5zM235 175h5v5h-5zM210 180h5v5h-5zM235 180h5v5h-5zM155 185h5v5h-5zM110 190h5v5h-5zM110 195h5v5h-5zM185 195h5v5h-5zM110 200h5v5h-5zM275 200h5v5h-5zM110 205h5v5h-5zM290 205h5v5h-5zM340 205h5v5h-5zM345 205h5v5h-5zM280 210h5v5h-5zM285 210h5v5h-5zM355 210h5v5h-5zM280 215h5v5h-5zM285 215h5v5h-5zM290 215h5v5h-5zM360 215h5v5h-5zM285 220h5v5h-5zM290 220h5v5h-5zM295 220h5v5h-5zM300 220h5v5h-5zM305 220h5v5h-5zM110 225h5v5h-5zM115 230h5v5h-5zM120 230h5v5h-5zM125 230h5v5h-5zM315 230h5v5h-5zM120 235h5v5h-5zM295 235h5v5h-5zM115 240h5v5h-5zM120 240h5v5h-5zM135 240h5v5h-5zM320 240h5v5h-5zM130 245h5v5h-5zM135 245h5v5h-5zM320 245h5v5h-5zM110 250h5v5h-5zM305 250h5v5h-5zM320 250h5v5h-5zM110 255h5v5h-5zM310 255h5v5h-5zM320 255h5v5h-5zM115 260h5v5h-5zM120 260h5v5h-5zM125 260h5v5h-5zM130 260h5v5h-5zM135 260h5v5h-5zM310 260h5v5h-5zM145 265h5v5h-5zM150 265h5v5h-5zM355 265h5v5h-5zM305 270h5v5h-5zM330 270h5v5h-5zM355 270h5v5h-5zM355 275h5v5h-5zM315 285h5v5h-5zM320 285h5v5h-5zM325 285h5v5h-5zM330 285h5v5h-5zM115 290h5v5h-5zM125 290h5v5h-5zM330 290h5v5h-5zM360 290h5v5h-5zM115 295h5v5h-5zM125 295h5v5h-5zM280 295h5v5h-5zM330 295h5v5h-5zM335 295h5v5h-5zM360 295h5v5h-5zM115 300h5v5h-5zM120 300h5v5h-5zM150 300h5v5h-5zM165 300h5v5h-5zM320 300h5v5h-5zM325 300h5v5h-5zM330 300h5v5h-5zM335 300h5v5h-5zM155 305h5v5h-5zM160 305h5v5h-5zM185 305h5v5h-5zM255 305h5v5h-5zM270 305h5v5h-5zM285 305h5v5h-5zM335 305h5v5h-5zM275 310h5v5h-5zM280 310h5v5h-5zM190 315h5v5h-5zM215 315h5v5h-5zM330 315h5v5h-5zM365 315h5v5h-5zM120 320h5v5h-5zM125 320h5v5h-5zM195 320h5v5h-5zM210 320h5v5h-5zM225 320h5v5h-5zM255 320h5v5h-5zM130 325h5v5h-5zM165 325h5v5h-5zM215 325h5v5h-5zM230 325h5v5h-5zM295 325h5v5h-5zM300 325h5v5h-5zM120 330h5v5h-5zM125 330h5v5h-5zM155 330h5v5h-5zM215 330h5v5h-5zM160 335h5v5h-5zM165 335h5v5h-5zM200 335h5v5h-5zM215 335h5v5h-5zM240 335h5v5h-5zM260 335h5v5h-5zM295 335h5v5h-5zM300 335h5v5h-5zM350 335h5v5h-5zM205 340h5v5h-5zM245 340h5v5h-5z"/><path fill="rgb(76,76,76)" d="M135 135h5v5h-5zM145 135h5v5h-5zM130 145h5v5h-5zM235 145h5v5h-5zM190 150h5v5h-5zM200 150h5v5h-5zM230 150h5v5h-5zM125 155h5v5h-5zM200 155h5v5h-5zM245 155h5v5h-5zM235 165h5v5h-5zM250 165h5v5h-5zM120 170h5v5h-5zM150 170h5v5h-5zM205 175h5v5h-5zM255 175h5v5h-5zM115 180h5v5h-5zM210 185h5v5h-5zM235 185h5v5h-5zM260 185h5v5h-5zM155 190h5v5h-5zM220 190h5v5h-5zM225 190h5v5h-5zM230 190h5v5h-5zM265 190h5v5h-5zM270 195h5v5h-5zM165 200h5v5h-5zM170 200h5v5h-5zM175 200h5v5h-5zM275 205h5v5h-5zM295 205h5v5h-5zM300 205h5v5h-5zM305 205h5v5h-5zM310 205h5v5h-5zM315 205h5v5h-5zM320 205h5v5h-5zM325 205h5v5h-5zM335 205h5v5h-5zM110 210h5v5h-5zM290 210h5v5h-5zM110 215h5v5h-5zM295 215h5v5h-5zM110 220h5v5h-5zM280 220h5v5h-5zM310 220h5v5h-5zM360 220h5v5h-5zM290 225h5v5h-5zM315 225h5v5h-5zM360 225h5v5h-5zM130 230h5v5h-5zM360 230h5v5h-5zM135 235h5v5h-5zM320 235h5v5h-5zM115 245h5v5h-5zM120 245h5v5h-5zM125 245h5v5h-5zM300 245h5v5h-5zM130 250h5v5h-5zM135 250h5v5h-5zM130 255h5v5h-5zM135 255h5v5h-5zM360 255h5v5h-5zM140 260h5v5h-5zM160 260h5v5h-5zM325 260h5v5h-5zM330 265h5v5h-5zM180 270h5v5h-5zM300 275h5v5h-5zM290 280h5v5h-5zM335 280h5v5h-5zM335 285h5v5h-5zM120 290h5v5h-5zM275 290h5v5h-5zM315 290h5v5h-5zM320 290h5v5h-5zM325 290h5v5h-5zM335 290h5v5h-5zM120 295h5v5h-5zM155 295h5v5h-5zM160 295h5v5h-5zM275 295h5v5h-5zM315 295h5v5h-5zM320 295h5v5h-5zM325 295h5v5h-5zM340 295h5v5h-5zM155 300h5v5h-5zM160 300h5v5h-5zM185 300h5v5h-5zM280 300h5v5h-5zM340 300h5v5h-5zM360 300h5v5h-5zM275 305h5v5h-5zM280 305h5v5h-5zM215 310h5v5h-5zM220 310h5v5h-5zM335 310h5v5h-5zM210 315h5v5h-5zM225 315h5v5h-5zM120 325h5v5h-5zM125 325h5v5h-5zM160 325h5v5h-5zM200 325h5v5h-5zM210 325h5v5h-5zM235 325h5v5h-5zM255 325h5v5h-5zM160 330h5v5h-5zM165 330h5v5h-5zM200 330h5v5h-5zM295 330h5v5h-5zM300 330h5v5h-5zM330 330h5v5h-5zM335 335h5v5h-5zM210 340h5v5h-5zM250 340h5v5h-5zM255 340h5v5h-5z"/><path fill="rgb(80,80,80)" d="M130 150h5v5h-5zM195 150h5v5h-5zM235 150h5v5h-5zM240 150h5v5h-5zM145 155h5v5h-5zM190 155h5v5h-5zM235 155h5v5h-5zM125 160h5v5h-5zM145 160h5v5h-5zM190 160h5v5h-5zM200 160h5v5h-5zM235 160h5v5h-5zM245 160h5v5h-5zM125 165h5v5h-5zM145 165h5v5h-5zM190 165h5v5h-5zM200 165h5v5h-5zM190 170h5v5h-5zM250 170h5v5h-5zM120 175h5v5h-5zM150 175h5v5h-5zM190 175h5v5h-5zM190 180h5v5h-5zM205 180h5v5h-5zM240 180h5v5h-5zM255 180h5v5h-5zM115 185h5v5h-5zM190 185h5v5h-5zM240 185h5v5h-5zM190 190h5v5h-5zM215 190h5v5h-5zM235 190h5v5h-5zM155 195h5v5h-5zM190 195h5v5h-5zM115 200h5v5h-5zM180 200h5v5h-5zM330 205h5v5h-5zM275 210h5v5h-5zM295 210h5v5h-5zM305 210h5v5h-5zM310 210h5v5h-5zM275 215h5v5h-5zM300 215h5v5h-5zM305 215h5v5h-5zM310 215h5v5h-5zM315 220h5v5h-5zM115 225h5v5h-5zM120 225h5v5h-5zM125 225h5v5h-5zM320 230h5v5h-5zM325 235h5v5h-5zM360 235h5v5h-5zM140 240h5v5h-5zM295 240h5v5h-5zM325 240h5v5h-5zM360 240h5v5h-5zM140 245h5v5h-5zM325 245h5v5h-5zM115 250h5v5h-5zM120 250h5v5h-5zM125 250h5v5h-5zM140 250h5v5h-5zM360 250h5v5h-5zM115 255h5v5h-5zM120 255h5v5h-5zM125 255h5v5h-5zM140 255h5v5h-5zM305 255h5v5h-5zM325 255h5v5h-5zM155 260h5v5h-5zM165 260h5v5h-5zM355 260h5v5h-5zM175 265h5v5h-5zM305 265h5v5h-5zM335 275h5v5h-5zM285 280h5v5h-5zM355 280h5v5h-5zM275 285h5v5h-5zM340 285h5v5h-5zM340 290h5v5h-5zM185 295h5v5h-5zM265 300h5v5h-5zM270 300h5v5h-5zM275 300h5v5h-5zM215 305h5v5h-5zM340 305h5v5h-5zM360 305h5v5h-5zM190 310h5v5h-5zM210 310h5v5h-5zM250 310h5v5h-5zM195 315h5v5h-5zM205 315h5v5h-5zM250 315h5v5h-5zM200 320h5v5h-5zM205 320h5v5h-5zM230 320h5v5h-5zM250 320h5v5h-5zM330 320h5v5h-5zM205 325h5v5h-5zM330 325h5v5h-5zM360 325h5v5h-5zM205 330h5v5h-5zM210 330h5v5h-5zM240 330h5v5h-5zM255 330h5v5h-5zM355 330h5v5h-5zM205 335h5v5h-5zM210 335h5v5h-5zM245 335h5v5h-5zM255 335h5v5h-5zM340 335h5v5h-5zM345 335h5v5h-5z"/><path fill="rgb(84,84,84)" d="M140 135h5v5h-5zM135 140h5v5h-5zM145 140h5v5h-5zM135 145h5v5h-5zM145 145h5v5h-5zM145 150h5v5h-5zM130 155h5v5h-5zM195 155h5v5h-5zM240 155h5v5h-5zM130 160h5v5h-5zM140 160h5v5h-5zM195 160h5v5h-5zM240 160h5v5h-5zM130 165h5v5h-5zM195 165h5v5h-5zM240 165h5v5h-5zM245 165h5v5h-5zM125 170h5v5h-5zM145 170h5v5h-5zM195 170h5v5h-5zM200 170h5v5h-5zM240 170h5v5h-5zM240 175h5v5h-5zM250 175h5v5h-5zM205 185h5v5h-5zM255 185h5v5h-5zM115 190h5v5h-5zM195 190h5v5h-5zM205 190h5v5h-5zM210 190h5v5h-5zM240 190h5v5h-5zM260 190h5v5h-5zM115 195h5v5h-5zM195 195h5v5h-5zM200 195h5v5h-5zM205 195h5v5h-5zM210 195h5v5h-5zM235 195h5v5h-5zM125 200h5v5h-5zM160 200h5v5h-5zM185 200h5v5h-5zM190 200h5v5h-5zM195 200h5v5h-5zM200 200h5v5h-5zM270 200h5v5h-5zM115 205h5v5h-5zM125 205h5v5h-5zM130 205h5v5h-5zM115 210h5v5h-5zM300 210h5v5h-5zM315 210h5v5h-5zM350 210h5v5h-5zM315 215h5v5h-5zM355 215h5v5h-5zM115 220h5v5h-5zM275 220h5v5h-5zM130 225h5v5h-5zM285 225h5v5h-5zM320 225h5v5h-5zM325 225h5v5h-5zM135 230h5v5h-5zM290 230h5v5h-5zM325 230h5v5h-5zM330 230h5v5h-5zM330 235h5v5h-5zM330 240h5v5h-5zM360 245h5v5h-5zM325 250h5v5h-5zM145 260h5v5h-5zM150 260h5v5h-5zM305 260h5v5h-5zM350 265h5v5h-5zM335 270h5v5h-5zM350 270h5v5h-5zM350 275h5v5h-5zM280 280h5v5h-5zM340 280h5v5h-5zM355 285h5v5h-5zM185 290h5v5h-5zM345 290h5v5h-5zM355 290h5v5h-5zM270 295h5v5h-5zM345 295h5v5h-5zM355 295h5v5h-5zM260 300h5v5h-5zM345 300h5v5h-5zM220 305h5v5h-5zM250 305h5v5h-5zM225 310h5v5h-5zM360 310h5v5h-5zM200 315h5v5h-5zM240 325h5v5h-5zM250 325h5v5h-5zM245 330h5v5h-5zM250 330h5v5h-5zM250 335h5v5h-5z"/><path fill="rgb(88,88,88)" d="M140 140h5v5h-5zM140 145h5v5h-5zM135 150h5v5h-5zM140 150h5v5h-5zM135 155h5v5h-5zM140 155h5v5h-5zM135 160h5v5h-5zM135 165h5v5h-5zM140 165h5v5h-5zM130 170h5v5h-5zM245 170h5v5h-5zM125 175h5v5h-5zM195 175h5v5h-5zM200 175h5v5h-5zM245 175h5v5h-5zM120 180h5v5h-5zM150 180h5v5h-5zM195 180h5v5h-5zM200 180h5v5h-5zM245 180h5v5h-5zM250 180h5v5h-5zM195 185h5v5h-5zM200 185h5v5h-5zM245 185h5v5h-5zM250 185h5v5h-5zM200 190h5v5h-5zM245 190h5v5h-5zM120 195h5v5h-5zM215 195h5v5h-5zM220 195h5v5h-5zM225 195h5v5h-5zM230 195h5v5h-5zM240 195h5v5h-5zM265 195h5v5h-5zM120 200h5v5h-5zM130 200h5v5h-5zM135 200h5v5h-5zM205 200h5v5h-5zM120 205h5v5h-5zM135 205h5v5h-5zM200 205h5v5h-5zM120 210h5v5h-5zM125 210h5v5h-5zM130 210h5v5h-5zM320 210h5v5h-5zM325 210h5v5h-5zM345 210h5v5h-5zM115 215h5v5h-5zM120 215h5v5h-5zM125 215h5v5h-5zM320 215h5v5h-5zM120 220h5v5h-5zM125 220h5v5h-5zM320 220h5v5h-5zM330 225h5v5h-5zM335 230h5v5h-5zM140 235h5v5h-5zM335 235h5v5h-5zM145 245h5v5h-5zM145 250h5v5h-5zM300 250h5v5h-5zM145 255h5v5h-5zM150 255h5v5h-5zM155 255h5v5h-5zM160 255h5v5h-5zM355 255h5v5h-5zM170 260h5v5h-5zM330 260h5v5h-5zM335 265h5v5h-5zM340 275h5v5h-5zM350 280h5v5h-5zM185 285h5v5h-5zM345 285h5v5h-5zM350 285h5v5h-5zM350 290h5v5h-5zM350 295h5v5h-5zM255 300h5v5h-5zM350 300h5v5h-5zM355 300h5v5h-5zM190 305h5v5h-5zM210 305h5v5h-5zM345 305h5v5h-5zM195 310h5v5h-5zM205 310h5v5h-5zM340 310h5v5h-5zM230 315h5v5h-5zM245 315h5v5h-5zM335 315h5v5h-5zM360 315h5v5h-5zM235 320h5v5h-5zM245 320h5v5h-5zM360 320h5v5h-5zM245 325h5v5h-5zM335 330h5v5h-5z"/><path fill="rgb(92,92,92)" d="M135 170h5v5h-5zM140 170h5v5h-5zM145 175h5v5h-5zM120 185h5v5h-5zM150 185h5v5h-5zM120 190h5v5h-5zM150 190h5v5h-5zM250 190h5v5h-5zM255 190h5v5h-5zM125 195h5v5h-5zM130 195h5v5h-5zM150 195h5v5h-5zM245 195h5v5h-5zM140 200h5v5h-5zM155 200h5v5h-5zM210 200h5v5h-5zM235 200h5v5h-5zM195 205h5v5h-5zM205 205h5v5h-5zM270 205h5v5h-5zM135 210h5v5h-5zM270 210h5v5h-5zM330 210h5v5h-5zM335 210h5v5h-5zM340 210h5v5h-5zM130 215h5v5h-5zM270 215h5v5h-5zM325 215h5v5h-5zM130 220h5v5h-5zM270 220h5v5h-5zM325 220h5v5h-5zM355 220h5v5h-5zM280 225h5v5h-5zM335 225h5v5h-5zM355 225h5v5h-5zM340 230h5v5h-5zM355 230h5v5h-5zM340 235h5v5h-5zM355 235h5v5h-5zM145 240h5v5h-5zM335 240h5v5h-5zM295 245h5v5h-5zM330 245h5v5h-5zM150 250h5v5h-5zM330 255h5v5h-5zM350 260h5v5h-5zM300 270h5v5h-5zM340 270h5v5h-5zM345 270h5v5h-5zM185 275h5v5h-5zM295 275h5v5h-5zM345 275h5v5h-5zM185 280h5v5h-5zM275 280h5v5h-5zM345 280h5v5h-5zM270 290h5v5h-5zM190 300h5v5h-5zM350 305h5v5h-5zM355 305h5v5h-5zM200 310h5v5h-5zM245 310h5v5h-5zM240 320h5v5h-5zM335 320h5v5h-5zM350 330h5v5h-5z"/><path fill="rgb(96,96,96)" d="M130 175h5v5h-5zM125 180h5v5h-5zM125 190h5v5h-5zM135 195h5v5h-5zM140 195h5v5h-5zM145 195h5v5h-5zM145 200h5v5h-5zM150 200h5v5h-5zM215 200h5v5h-5zM240 200h5v5h-5zM140 205h5v5h-5zM190 205h5v5h-5zM200 210h5v5h-5zM135 215h5v5h-5zM330 215h5v5h-5zM350 215h5v5h-5zM330 220h5v5h-5zM335 220h5v5h-5zM135 225h5v5h-5zM340 225h5v5h-5zM350 225h5v5h-5zM345 230h5v5h-5zM350 230h5v5h-5zM290 235h5v5h-5zM345 235h5v5h-5zM355 240h5v5h-5zM150 245h5v5h-5zM355 245h5v5h-5zM155 250h5v5h-5zM330 250h5v5h-5zM355 250h5v5h-5zM165 255h5v5h-5zM335 260h5v5h-5zM180 265h5v5h-5zM340 265h5v5h-5zM345 265h5v5h-5zM265 295h5v5h-5zM215 300h5v5h-5zM195 305h5v5h-5zM205 305h5v5h-5zM225 305h5v5h-5zM230 310h5v5h-5zM345 310h5v5h-5zM355 310h5v5h-5zM235 315h5v5h-5zM240 315h5v5h-5zM340 315h5v5h-5zM335 325h5v5h-5zM355 325h5v5h-5zM340 330h5v5h-5zM345 330h5v5h-5z"/><path fill="rgb(100,100,100)" d="M135 175h5v5h-5zM140 175h5v5h-5zM145 180h5v5h-5zM125 185h5v5h-5zM130 190h5v5h-5zM145 190h5v5h-5zM250 195h5v5h-5zM255 195h5v5h-5zM260 195h5v5h-5zM220 200h5v5h-5zM230 200h5v5h-5zM245 200h5v5h-5zM265 200h5v5h-5zM170 205h5v5h-5zM175 205h5v5h-5zM180 205h5v5h-5zM185 205h5v5h-5zM210 205h5v5h-5zM205 210h5v5h-5zM335 215h5v5h-5zM340 215h5v5h-5zM345 215h5v5h-5zM135 220h5v5h-5zM340 220h5v5h-5zM345 220h5v5h-5zM350 220h5v5h-5zM275 225h5v5h-5zM345 225h5v5h-5zM350 235h5v5h-5zM340 240h5v5h-5zM335 245h5v5h-5zM160 250h5v5h-5zM300 255h5v5h-5zM335 255h5v5h-5zM350 255h5v5h-5zM175 260h5v5h-5zM340 260h5v5h-5zM345 260h5v5h-5zM185 270h5v5h-5zM270 285h5v5h-5zM220 300h5v5h-5zM250 300h5v5h-5zM200 305h5v5h-5zM245 305h5v5h-5zM350 310h5v5h-5z"/><path fill="rgb(104,104,104)" d="M130 180h5v5h-5zM130 185h5v5h-5zM145 185h5v5h-5zM135 190h5v5h-5zM140 190h5v5h-5zM225 200h5v5h-5zM145 205h5v5h-5zM165 205h5v5h-5zM235 205h5v5h-5zM140 210h5v5h-5zM195 210h5v5h-5zM270 225h5v5h-5zM140 230h5v5h-5zM285 230h5v5h-5zM345 240h5v5h-5zM350 240h5v5h-5zM155 245h5v5h-5zM340 245h5v5h-5zM295 250h5v5h-5zM335 250h5v5h-5zM340 255h5v5h-5zM300 260h5v5h-5zM300 265h5v5h-5zM190 295h5v5h-5zM260 295h5v5h-5zM210 300h5v5h-5zM235 310h5v5h-5zM240 310h5v5h-5zM355 315h5v5h-5zM340 320h5v5h-5zM355 320h5v5h-5zM340 325h5v5h-5z"/><path fill="rgb(108,108,108)" d="M135 180h5v5h-5zM140 180h5v5h-5zM160 205h5v5h-5zM215 205h5v5h-5zM240 205h5v5h-5zM265 205h5v5h-5zM210 210h5v5h-5zM265 220h5v5h-5zM145 235h5v5h-5zM150 240h5v5h-5zM290 240h5v5h-5zM345 245h5v5h-5zM350 245h5v5h-5zM340 250h5v5h-5zM350 250h5v5h-5zM345 255h5v5h-5zM290 275h5v5h-5zM270 280h5v5h-5zM195 300h5v5h-5zM230 305h5v5h-5zM345 315h5v5h-5zM350 315h5v5h-5zM345 325h5v5h-5zM350 325h5v5h-5z"/><path fill="rgb(112,112,112)" d="M135 185h5v5h-5zM140 185h5v5h-5zM250 200h5v5h-5zM260 200h5v5h-5zM150 205h5v5h-5zM155 205h5v5h-5zM220 205h5v5h-5zM225 205h5v5h-5zM230 205h5v5h-5zM190 210h5v5h-5zM265 210h5v5h-5zM200 215h5v5h-5zM205 215h5v5h-5zM265 215h5v5h-5zM265 225h5v5h-5zM345 250h5v5h-5zM170 255h5v5h-5zM185 265h5v5h-5zM190 290h5v5h-5zM265 290h5v5h-5zM255 295h5v5h-5zM205 300h5v5h-5zM240 305h5v5h-5zM345 320h5v5h-5zM350 320h5v5h-5z"/><path fill="rgb(116,116,116)" d="M255 200h5v5h-5zM245 205h5v5h-5zM215 210h5v5h-5zM235 210h5v5h-5zM240 210h5v5h-5zM140 215h5v5h-5zM140 225h5v5h-5zM280 230h5v5h-5zM160 245h5v5h-5zM165 250h5v5h-5zM180 260h5v5h-5zM275 275h5v5h-5zM280 275h5v5h-5zM285 275h5v5h-5zM215 295h5v5h-5zM200 300h5v5h-5zM225 300h5v5h-5zM235 305h5v5h-5z"/><path fill="rgb(120,120,120)" d="M185 210h5v5h-5zM230 210h5v5h-5zM195 215h5v5h-5zM210 215h5v5h-5zM140 220h5v5h-5zM260 225h5v5h-5zM155 240h5v5h-5zM290 245h5v5h-5zM295 255h5v5h-5zM190 270h5v5h-5zM295 270h5v5h-5zM190 275h5v5h-5zM190 285h5v5h-5zM210 295h5v5h-5zM220 295h5v5h-5zM245 300h5v5h-5z"/><path fill="rgb(124,124,124)" d="M250 205h5v5h-5zM260 205h5v5h-5zM145 210h5v5h-5zM175 210h5v5h-5zM180 210h5v5h-5zM220 210h5v5h-5zM225 210h5v5h-5zM245 210h5v5h-5zM235 215h5v5h-5zM240 215h5v5h-5zM260 220h5v5h-5zM275 230h5v5h-5zM285 235h5v5h-5zM190 280h5v5h-5zM265 285h5v5h-5zM195 295h5v5h-5zM250 295h5v5h-5z"/><path fill="rgb(128,128,128)" d="M255 205h5v5h-5zM170 210h5v5h-5zM215 215h5v5h-5zM230 215h5v5h-5zM260 215h5v5h-5zM200 220h5v5h-5zM205 220h5v5h-5zM240 220h5v5h-5zM255 225h5v5h-5zM145 230h5v5h-5zM265 230h5v5h-5zM270 230h5v5h-5zM150 235h5v5h-5zM175 255h5v5h-5zM190 265h5v5h-5zM270 275h5v5h-5zM260 290h5v5h-5z"/><path fill="rgb(131,131,131)" d="M260 210h5v5h-5zM190 215h5v5h-5zM245 215h5v5h-5zM235 220h5v5h-5zM245 220h5v5h-5zM255 220h5v5h-5zM245 225h5v5h-5zM250 225h5v5h-5zM260 230h5v5h-5zM160 240h5v5h-5zM165 245h5v5h-5zM290 250h5v5h-5zM295 260h5v5h-5zM295 265h5v5h-5zM265 280h5v5h-5zM215 290h5v5h-5zM230 300h5v5h-5z"/><path fill="rgb(135,135,135)" d="M150 210h5v5h-5zM165 210h5v5h-5zM250 210h5v5h-5zM255 210h5v5h-5zM220 215h5v5h-5zM225 215h5v5h-5zM255 215h5v5h-5zM210 220h5v5h-5zM250 220h5v5h-5zM240 225h5v5h-5zM255 230h5v5h-5zM170 250h5v5h-5zM185 260h5v5h-5zM255 290h5v5h-5zM200 295h5v5h-5zM205 295h5v5h-5zM225 295h5v5h-5zM240 300h5v5h-5z"/><path fill="rgb(139,139,139)" d="M160 210h5v5h-5zM145 215h5v5h-5zM250 215h5v5h-5zM195 220h5v5h-5zM230 220h5v5h-5zM250 230h5v5h-5zM285 240h5v5h-5zM195 290h5v5h-5zM220 290h5v5h-5zM245 295h5v5h-5zM235 300h5v5h-5z"/><path fill="rgb(143,143,143)" d="M155 210h5v5h-5zM185 215h5v5h-5zM215 220h5v5h-5zM145 225h5v5h-5zM235 225h5v5h-5zM245 230h5v5h-5zM155 235h5v5h-5zM280 235h5v5h-5zM290 255h5v5h-5zM195 270h5v5h-5zM290 270h5v5h-5zM265 275h5v5h-5zM260 285h5v5h-5zM210 290h5v5h-5z"/><path fill="rgb(147,147,147)" d="M180 215h5v5h-5zM145 220h5v5h-5zM220 220h5v5h-5zM225 220h5v5h-5zM200 225h5v5h-5zM240 230h5v5h-5zM180 255h5v5h-5zM190 260h5v5h-5zM195 265h5v5h-5zM195 275h5v5h-5zM215 285h5v5h-5zM250 290h5v5h-5z"/><path fill="rgb(151,151,151)" d="M175 215h5v5h-5zM190 220h5v5h-5zM205 225h5v5h-5zM150 230h5v5h-5zM165 240h5v5h-5zM170 245h5v5h-5zM285 245h5v5h-5zM275 270h5v5h-5zM280 270h5v5h-5zM285 270h5v5h-5zM215 275h5v5h-5zM195 280h5v5h-5zM215 280h5v5h-5zM260 280h5v5h-5zM195 285h5v5h-5zM220 285h5v5h-5z"/><path fill="rgb(155,155,155)" d="M170 215h5v5h-5zM210 225h5v5h-5zM230 225h5v5h-5zM250 235h5v5h-5zM255 235h5v5h-5zM260 235h5v5h-5zM265 235h5v5h-5zM270 235h5v5h-5zM275 235h5v5h-5zM175 250h5v5h-5zM285 250h5v5h-5zM290 260h5v5h-5zM200 270h5v5h-5zM270 270h5v5h-5zM220 280h5v5h-5zM210 285h5v5h-5zM255 285h5v5h-5zM200 290h5v5h-5zM205 290h5v5h-5zM225 290h5v5h-5zM230 295h5v5h-5zM240 295h5v5h-5z"/><path fill="rgb(159,159,159)" d="M150 215h5v5h-5zM195 225h5v5h-5zM235 230h5v5h-5zM160 235h5v5h-5zM245 235h5v5h-5zM200 265h5v5h-5zM290 265h5v5h-5zM210 275h5v5h-5zM220 275h5v5h-5zM260 275h5v5h-5zM210 280h5v5h-5z"/><path fill="rgb(163,163,163)" d="M185 220h5v5h-5zM215 225h5v5h-5zM225 225h5v5h-5zM185 255h5v5h-5zM195 260h5v5h-5zM205 270h5v5h-5zM210 270h5v5h-5zM215 270h5v5h-5zM200 275h5v5h-5zM255 280h5v5h-5zM250 285h5v5h-5zM245 290h5v5h-5zM235 295h5v5h-5z"/><path fill="rgb(167,167,167)" d="M165 215h5v5h-5zM180 220h5v5h-5zM220 225h5v5h-5zM170 240h5v5h-5zM280 240h5v5h-5zM285 255h5v5h-5zM205 265h5v5h-5zM220 270h5v5h-5zM265 270h5v5h-5zM205 275h5v5h-5zM255 275h5v5h-5zM200 285h5v5h-5zM205 285h5v5h-5z"/><path fill="rgb(171,171,171)" d="M155 215h5v5h-5zM160 215h5v5h-5zM150 225h5v5h-5zM190 225h5v5h-5zM155 230h5v5h-5zM165 235h5v5h-5zM240 235h5v5h-5zM190 255h5v5h-5zM200 260h5v5h-5zM225 275h5v5h-5zM200 280h5v5h-5zM205 280h5v5h-5zM225 280h5v5h-5zM250 280h5v5h-5zM225 285h5v5h-5z"/><path fill="rgb(175,175,175)" d="M150 220h5v5h-5zM175 220h5v5h-5zM200 230h5v5h-5zM205 230h5v5h-5zM230 230h5v5h-5zM175 245h5v5h-5zM180 250h5v5h-5zM285 260h5v5h-5zM210 265h5v5h-5zM280 265h5v5h-5zM285 265h5v5h-5zM260 270h5v5h-5zM250 275h5v5h-5z"/><path fill="rgb(179,179,179)" d="M170 220h5v5h-5zM185 225h5v5h-5zM195 230h5v5h-5zM280 245h5v5h-5zM215 265h5v5h-5zM275 265h5v5h-5zM225 270h5v5h-5zM245 285h5v5h-5zM230 290h5v5h-5zM240 290h5v5h-5z"/><path fill="rgb(183,183,183)" d="M160 230h5v5h-5zM210 230h5v5h-5zM170 235h5v5h-5zM235 235h5v5h-5zM250 240h5v5h-5zM255 240h5v5h-5zM275 240h5v5h-5zM280 250h5v5h-5zM195 255h5v5h-5zM205 260h5v5h-5zM255 270h5v5h-5zM245 280h5v5h-5z"/><path fill="rgb(187,187,187)" d="M175 225h5v5h-5zM180 225h5v5h-5zM165 230h5v5h-5zM225 230h5v5h-5zM245 240h5v5h-5zM260 240h5v5h-5zM265 240h5v5h-5zM270 240h5v5h-5zM280 255h5v5h-5zM280 260h5v5h-5zM220 265h5v5h-5zM270 265h5v5h-5zM250 270h5v5h-5zM245 275h5v5h-5zM235 290h5v5h-5z"/><path fill="rgb(191,191,191)" d="M155 220h5v5h-5zM165 220h5v5h-5zM155 225h5v5h-5zM170 225h5v5h-5zM170 230h5v5h-5zM190 230h5v5h-5zM215 230h5v5h-5zM175 240h5v5h-5zM185 250h5v5h-5zM200 255h5v5h-5zM230 270h5v5h-5zM245 270h5v5h-5zM230 275h5v5h-5zM230 280h5v5h-5zM230 285h5v5h-5z"/><path fill="rgb(195,195,195)" d="M160 220h5v5h-5zM165 225h5v5h-5zM175 230h5v5h-5zM220 230h5v5h-5zM175 235h5v5h-5zM240 240h5v5h-5zM180 245h5v5h-5zM190 250h5v5h-5zM210 260h5v5h-5zM275 260h5v5h-5zM225 265h5v5h-5zM265 265h5v5h-5zM240 275h5v5h-5zM240 285h5v5h-5z"/><path fill="rgb(199,199,199)" d="M160 225h5v5h-5zM180 230h5v5h-5zM185 230h5v5h-5zM195 235h5v5h-5zM200 235h5v5h-5zM205 235h5v5h-5zM275 245h5v5h-5zM235 270h5v5h-5zM240 270h5v5h-5zM235 275h5v5h-5zM240 280h5v5h-5z"/><path fill="rgb(203,203,203)" d="M230 235h5v5h-5zM195 250h5v5h-5zM205 255h5v5h-5zM230 265h5v5h-5zM255 265h5v5h-5zM260 265h5v5h-5zM235 280h5v5h-5zM235 285h5v5h-5z"/><path fill="rgb(207,207,207)" d="M180 235h5v5h-5zM190 235h5v5h-5zM210 235h5v5h-5zM180 240h5v5h-5zM275 250h5v5h-5zM275 255h5v5h-5zM215 260h5v5h-5zM235 265h5v5h-5zM240 265h5v5h-5zM245 265h5v5h-5zM250 265h5v5h-5z"/><path fill="rgb(211,211,211)" d="M185 235h5v5h-5zM235 240h5v5h-5zM185 245h5v5h-5zM190 245h5v5h-5zM245 245h5v5h-5zM250 245h5v5h-5zM270 245h5v5h-5zM200 250h5v5h-5zM270 260h5v5h-5z"/><path fill="rgb(215,215,215)" d="M225 235h5v5h-5zM185 240h5v5h-5zM190 240h5v5h-5zM195 240h5v5h-5zM200 240h5v5h-5zM195 245h5v5h-5zM255 245h5v5h-5zM260 245h5v5h-5zM265 245h5v5h-5zM220 260h5v5h-5z"/><path fill="rgb(219,219,219)" d="M215 235h5v5h-5zM220 235h5v5h-5zM205 240h5v5h-5zM200 245h5v5h-5zM205 250h5v5h-5zM210 255h5v5h-5zM225 260h5v5h-5z"/><path fill="rgb(223,223,223)" d="M240 245h5v5h-5zM270 250h5v5h-5zM270 255h5v5h-5zM240 260h5v5h-5zM245 260h5v5h-5zM250 260h5v5h-5zM265 260h5v5h-5z"/><path fill="rgb(227,227,227)" d="M230 240h5v5h-5zM205 245h5v5h-5zM230 260h5v5h-5zM235 260h5v5h-5zM255 260h5v5h-5z"/><path fill="rgb(231,231,231)" d="M210 240h5v5h-5zM245 250h5v5h-5zM250 250h5v5h-5zM265 250h5v5h-5zM215 255h5v5h-5zM260 260h5v5h-5z"/><path fill="rgb(235,235,235)" d="M235 245h5v5h-5zM210 250h5v5h-5zM240 250h5v5h-5zM255 250h5v5h-5zM240 255h5v5h-5zM245 255h5v5h-5zM250 255h5v5h-5z"/><path fill="rgb(239,239,239)" d="M215 240h5v5h-5zM210 245h5v5h-5zM260 250h5v5h-5zM235 255h5v5h-5zM255 255h5v5h-5zM265 255h5v5h-5z"/><path fill="rgb(243,243,243)" d="M225 240h5v5h-5zM235 250h5v5h-5zM220 255h5v5h-5zM260 255h5v5h-5z"/><path fill="rgb(247,247,247)" d="M220 240h5v5h-5zM230 245h5v5h-5zM225 255h5v5h-5zM230 255h5v5h-5z"/><path fill="rgb(251,251,251)" d="M215 245h5v5h-5zM215 250h5v5h-5zM230 250h5v5h-5z"/><path fill="rgb(255,255,255)" d="M220 245h5v5h-5zM225 245h5v5h-5zM220 250h5v5h-5zM225 250h5v5h-5z"/></g></g></svg>
<svg class="ab" style="left:2440px;top:740px;" width="438" height="400" viewBox="0 0 438 400"><rect x="181" y="174" width="110" height="110" fill="none" stroke="#000" stroke-width="3"/><line x1="181" y1="155.5" x2="291" y2="155.5" stroke="#000" stroke-width="1.6" stroke-dasharray="3.5,3"/><line x1="181" y1="303.7" x2="291" y2="303.7" stroke="#000" stroke-width="1.6" stroke-dasharray="3.5,3"/><line x1="161.7" y1="175" x2="161.7" y2="284" stroke="#000" stroke-width="1.6" stroke-dasharray="3.5,3"/><line x1="309.7" y1="175" x2="309.7" y2="284" stroke="#000" stroke-width="1.6" stroke-dasharray="3.5,3"/><rect x="111.5" y="26.5" width="249" height="67.5" fill="#fff" stroke="#222" stroke-width="1.4"/><defs><linearGradient id="lg0" x1="0" x2="1"><stop offset="0" stop-color="#3a6db0"/><stop offset="0.3" stop-color="#92bbdc"/><stop offset="0.5" stop-color="#fdf9dc"/><stop offset="0.72" stop-color="#f0a060"/><stop offset="1" stop-color="#d0302c"/></linearGradient></defs><rect x="116" y="82" width="240.5" height="8" fill="url(#lg0)"/><defs><linearGradient id="leg0" x1="0" y1="0" x2="0" y2="1"><stop offset="0" stop-color="#141414"/><stop offset="0.55" stop-color="#1c1c1c"/><stop offset="0.85" stop-color="#555"/><stop offset="1" stop-color="#b0b0b0"/></linearGradient></defs><path d="M26,82 L92,108 L90,117 L26,95 Z" fill="#cfcfcf"/><ellipse cx="81" cy="109" rx="14" ry="17" fill="#c4c4c4"/><path d="M68,101 Q70,89 83,90 Q96,92 96,106 L94,113 Q86,103 70,105 Z" fill="#444"/><path d="M45,128 Q60,122 80,126 L100,140 Q104,150 102,175 L95,215 Q75,225 60,222 L30,215 Q26,190 30,150 Q34,132 45,128 Z" fill="#262626"/><path d="M50,152 Q70,137 90,128 L96,136 Q75,150 58,160 Z" fill="#7a7a7a"/><path d="M44,136 Q66,121 92,111 L99,121 Q76,133 52,150 Z" fill="#8e8e8e"/><path d="M38,160 Q48,150 56,168 L52,200 Q44,205 40,196 Z" fill="#4a4a4a"/><path d="M62,150 Q80,140 96,146 L92,176 Q78,182 66,176 Z" fill="#3a3a3a"/><ellipse cx="95" cy="117" rx="7" ry="6" fill="#6e6e6e"/><path d="M100,136 L112,131 Q121,150 118,177 L104,179 Q100,160 100,136 Z" fill="#9a9a9a"/><path d="M101,141 L113,138 L114,145 L102,148 Z" fill="#eee"/><path d="M28,211 L69,221 L71,230 L28,221 Z" fill="#e8e8e8"/><path d="M28,220 L71,229 Q82,260 83,290 Q82,320 77,352 L62,352 Q64,320 62,300 Q56,280 50,262 L48,300 Q45,330 41,356 L29,356 Q25,300 28,220 Z" fill="url(#leg0)"/><path d="M29,354 H62 L94,370 Q99,378 91,383 H29 Z" fill="#a8a8a8"/><line x1="26" y1="361" x2="438" y2="361" stroke="#bbb" stroke-width="1.2"/><path d="M129,382.7 L144,362 H152 L137,382.7 Z" fill="#000"/><path d="M183,370 H288 L286,375.5 Q235,381 185,375.5 Z" fill="#000"/><path d="M318.6,362 H326 L341,382.7 H333 Z" fill="#000"/></svg>
<span class="t" style="left:2589.00px;top:772.23px;font-size:23.5px;color:#111;">Pitch Frequency</span>
<span class="t" style="left:2555.13px;top:807.07px;font-size:14.5px;color:#111;font-weight:700;transform:scaleX(0.9676);">Least</span>
<span class="t" style="left:2762.15px;top:807.07px;font-size:14.5px;color:#111;font-weight:700;transform:scaleX(0.9485);">Most</span>
<svg class="ab" style="left:2440px;top:1170px;" width="438" height="400" viewBox="0 0 438 400"><rect x="181" y="174" width="110" height="110" fill="none" stroke="#000" stroke-width="3"/><line x1="181" y1="155.5" x2="291" y2="155.5" stroke="#000" stroke-width="1.6" stroke-dasharray="3.5,3"/><line x1="181" y1="303.7" x2="291" y2="303.7" stroke="#000" stroke-width="1.6" stroke-dasharray="3.5,3"/><line x1="161.7" y1="175" x2="161.7" y2="284" stroke="#000" stroke-width="1.6" stroke-dasharray="3.5,3"/><line x1="309.7" y1="175" x2="309.7" y2="284" stroke="#000" stroke-width="1.6" stroke-dasharray="3.5,3"/><rect x="111.5" y="26.5" width="249" height="67.5" fill="#fff" stroke="#222" stroke-width="1.4"/><defs><linearGradient id="lg430" x1="0" x2="1"><stop offset="0" stop-color="#3a6db0"/><stop offset="0.3" stop-color="#92bbdc"/><stop offset="0.5" stop-color="#fdf9dc"/><stop offset="0.72" stop-color="#f0a060"/><stop offset="1" stop-color="#d0302c"/></linearGradient></defs><rect x="116" y="82" width="240.5" height="8" fill="url(#lg430)"/><defs><linearGradient id="leg430" x1="0" y1="0" x2="0" y2="1"><stop offset="0" stop-color="#141414"/><stop offset="0.55" stop-color="#1c1c1c"/><stop offset="0.85" stop-color="#555"/><stop offset="1" stop-color="#b0b0b0"/></linearGradient></defs><path d="M26,82 L92,108 L90,117 L26,95 Z" fill="#cfcfcf"/><ellipse cx="81" cy="109" rx="14" ry="17" fill="#c4c4c4"/><path d="M68,101 Q70,89 83,90 Q96,92 96,106 L94,113 Q86,103 70,105 Z" fill="#444"/><path d="M45,128 Q60,122 80,126 L100,140 Q104,150 102,175 L95,215 Q75,225 60,222 L30,215 Q26,190 30,150 Q34,132 45,128 Z" fill="#262626"/><path d="M50,152 Q70,137 90,128 L96,136 Q75,150 58,160 Z" fill="#7a7a7a"/><path d="M44,136 Q66,121 92,111 L99,121 Q76,133 52,150 Z" fill="#8e8e8e"/><path d="M38,160 Q48,150 56,168 L52,200 Q44,205 40,196 Z" fill="#4a4a4a"/><path d="M62,150 Q80,140 96,146 L92,176 Q78,182 66,176 Z" fill="#3a3a3a"/><ellipse cx="95" cy="117" rx="7" ry="6" fill="#6e6e6e"/><path d="M100,136 L112,131 Q121,150 118,177 L104,179 Q100,160 100,136 Z" fill="#9a9a9a"/><path d="M101,141 L113,138 L114,145 L102,148 Z" fill="#eee"/><path d="M28,211 L69,221 L71,230 L28,221 Z" fill="#e8e8e8"/><path d="M28,220 L71,229 Q82,260 83,290 Q82,320 77,352 L62,352 Q64,320 62,300 Q56,280 50,262 L48,300 Q45,330 41,356 L29,356 Q25,300 28,220 Z" fill="url(#leg430)"/><path d="M29,354 H62 L94,370 Q99,378 91,383 H29 Z" fill="#a8a8a8"/></svg>
<span class="t" style="left:2589.00px;top:1202.23px;font-size:23.5px;color:#111;">Pitch Frequency</span>
<span class="t" style="left:2555.13px;top:1237.08px;font-size:14.5px;color:#111;font-weight:700;transform:scaleX(0.9676);">Least</span>
<span class="t" style="left:2762.15px;top:1237.08px;font-size:14.5px;color:#111;font-weight:700;transform:scaleX(0.9485);">Most</span>
<span class="t" style="left:2779.50px;top:1106.75px;font-size:15px;color:#222;transform:scaleX(0.9654);">© TRUMEDIA 2024</span>
<div class="ab" style="left:800px;top:1400px;width:1300px;height:100px;background:radial-gradient(ellipse 570px 128px at 645px 166px, rgba(0,0,0,0.16) 0%, rgba(0,0,0,0.12) 50%, rgba(0,0,0,0.04) 82%, rgba(0,0,0,0) 100%);"></div>
<div class="ab" style="left:1003px;top:186px;width:1296px;height:700px;background:#fff;border-radius:16px;box-shadow:0 4px 12px rgba(0,0,0,0.28), 0 0 2px rgba(0,0,0,0.10);"></div>
<span class="t" style="left:1603.76px;top:209.47px;font-size:26.5px;color:#365b8c;transform:scaleX(0.9710);">Settings</span>
<svg class="ab" style="left:2248px;top:207px;" width="30" height="30" viewBox="0 0 30 30"><path d="M4,4 L26.4,26.4 M26.4,4 L4,26.4" stroke="#000" stroke-width="2.6"/></svg>
<div class="ab" style="left:1003px;top:252px;width:1293px;height:1px;background:#e9ebee;"></div>
<div class="ab" style="left:1217.5px;top:334px;width:1071px;height:1px;background:#dee1e5;"></div>
<div class="ab" style="left:1014.5px;top:262px;width:203.5px;height:73px;border:1px solid #dee1e5;border-bottom:none;border-radius:6px 6px 0 0;background:#fff;"></div>
<span class="t" style="left:1041.16px;top:286.70px;font-size:26px;color:#555a60;transform:scaleX(0.9182);">Page Settings</span>
<span class="t" style="left:1249.05px;top:286.90px;font-size:26px;color:#365b8c;transform:scaleX(0.9480);">Grid Sizing</span>
<span class="t" style="left:1019.95px;top:354.98px;font-size:24.5px;color:#000;transform:scaleX(1.0270);">Player Description Format</span>
<span class="t" style="left:1449.94px;top:354.98px;font-size:24.5px;color:#000;transform:scaleX(1.0322);">Player Description Alignment</span>
<span class="t" style="left:1879.69px;top:354.98px;font-size:24.5px;color:#000;transform:scaleX(1.0042);">Player Description Font Size</span>
<div class="ab" style="left:1021.4px;top:385.4px;width:400.5px;height:58.2px;background:#fff;border:1px solid #d9d9d9;"></div>
<div class="ab" style="left:1372.9px;top:386.4px;width:1px;height:56.2px;background:#d9d9d9;"></div>
<svg class="ab" style="left:1383.9px;top:406.5px;" width="25" height="17" viewBox="0 0 25 17"><path d="M2.5,3 L12.5,12.7 L22.5,3" fill="none" stroke="#707070" stroke-width="3.2"/></svg>
<span class="t" style="left:1028.65px;top:403.98px;font-size:24.5px;color:#000;transform:scaleX(1.0269);">Medium Headshot</span>
<div class="ab" style="left:1451.3px;top:385.4px;width:400.5px;height:58.2px;background:#fff;border:1px solid #d9d9d9;"></div>
<div class="ab" style="left:1802.8px;top:386.4px;width:1px;height:56.2px;background:#d9d9d9;"></div>
<svg class="ab" style="left:1813.8px;top:406.5px;" width="25" height="17" viewBox="0 0 25 17"><path d="M2.5,3 L12.5,12.7 L22.5,3" fill="none" stroke="#707070" stroke-width="3.2"/></svg>
<span class="t" style="left:1457.64px;top:403.98px;font-size:24.5px;color:#000;transform:scaleX(1.0795);">Left</span>
<div class="ab" style="left:1880.4px;top:385.4px;width:400.5px;height:58.2px;background:#fff;border:1px solid #d9d9d9;"></div>
<div class="ab" style="left:2231.9px;top:386.4px;width:1px;height:56.2px;background:#d9d9d9;"></div>
<svg class="ab" style="left:2242.9px;top:406.5px;" width="25" height="17" viewBox="0 0 25 17"><path d="M2.5,3 L12.5,12.7 L22.5,3" fill="none" stroke="#707070" stroke-width="3.2"/></svg>
<span class="t" style="left:1888.43px;top:403.98px;font-size:24.5px;color:#000;transform:scaleX(1.0692);">20</span>
<span class="t" style="left:1024.39px;top:486.28px;font-size:24.5px;color:#000;transform:scaleX(1.0057);">Page Title</span>
<div class="ab" style="left:1021.4px;top:516.4px;width:397px;height:58.1px;background:#fff;border:1px solid #d0d3d6;"></div>
<span class="t" style="left:1036.32px;top:535.47px;font-size:24.5px;color:#343a40;transform:scaleX(1.0377);">Pitcher Report</span>
<span class="t" style="left:1449.96px;top:491.78px;font-size:24.5px;color:#000;transform:scaleX(1.0435);">Title Text Color</span>
<span class="t" style="left:1880.27px;top:491.97px;font-size:24.5px;color:#000;transform:scaleX(1.0251);">Title Background Color</span>
<div class="ab" style="left:1451.3px;top:521.3px;width:400.5px;height:58.7px;background:#fff;border:1px solid #d9d9d9;"></div>
<div class="ab" style="left:1802.8px;top:522.3px;width:1px;height:56.7px;background:#d9d9d9;"></div>
<svg class="ab" style="left:1813.8px;top:542.65px;" width="25" height="17" viewBox="0 0 25 17"><path d="M2.5,3 L12.5,12.7 L22.5,3" fill="none" stroke="#707070" stroke-width="3.2"/></svg>
<span class="t" style="left:1457.67px;top:540.47px;font-size:24.5px;color:#000;transform:scaleX(1.0138);">Black</span>
<div class="ab" style="left:1880.4px;top:521.3px;width:400.5px;height:58.7px;background:#fff;border:1px solid #d9d9d9;"></div>
<div class="ab" style="left:2231.9px;top:522.3px;width:1px;height:56.7px;background:#d9d9d9;"></div>
<svg class="ab" style="left:2242.9px;top:542.65px;" width="25" height="17" viewBox="0 0 25 17"><path d="M2.5,3 L12.5,12.7 L22.5,3" fill="none" stroke="#707070" stroke-width="3.2"/></svg>
<span class="t" style="left:1887.61px;top:540.47px;font-size:24.5px;color:#000;transform:scaleX(1.0446);">None</span>
<span class="t" style="left:1020.70px;top:627.97px;font-size:24.5px;color:#000;">Title Font Size</span>
<span class="t" style="left:1450.25px;top:628.07px;font-size:24.5px;color:#000;transform:scaleX(1.0533);">Title Horizontal Alignment</span>
<span class="t" style="left:1879.32px;top:628.07px;font-size:24.5px;color:#000;transform:scaleX(0.9891);">Player Handedness Color (L)</span>
<div class="ab" style="left:1021.4px;top:658.5px;width:400.5px;height:57.7px;background:#fff;border:1px solid #d9d9d9;"></div>
<div class="ab" style="left:1372.9px;top:659.5px;width:1px;height:55.7px;background:#d9d9d9;"></div>
<svg class="ab" style="left:1383.9px;top:679.35px;" width="25" height="17" viewBox="0 0 25 17"><path d="M2.5,3 L12.5,12.7 L22.5,3" fill="none" stroke="#707070" stroke-width="3.2"/></svg>
<span class="t" style="left:1028.90px;top:676.38px;font-size:24.5px;color:#000;transform:scaleX(1.0962);">24</span>
<div class="ab" style="left:1451.3px;top:658.5px;width:400.5px;height:57.7px;background:#fff;border:1px solid #d9d9d9;"></div>
<div class="ab" style="left:1802.8px;top:659.5px;width:1px;height:55.7px;background:#d9d9d9;"></div>
<svg class="ab" style="left:1813.8px;top:679.35px;" width="25" height="17" viewBox="0 0 25 17"><path d="M2.5,3 L12.5,12.7 L22.5,3" fill="none" stroke="#707070" stroke-width="3.2"/></svg>
<span class="t" style="left:1458.65px;top:676.17px;font-size:24.5px;color:#000;transform:scaleX(1.0458);">Center</span>
<div class="ab" style="left:1880.4px;top:658.5px;width:400.5px;height:57.7px;background:#fff;border:1px solid #d9d9d9;"></div>
<div class="ab" style="left:2231.9px;top:659.5px;width:1px;height:55.7px;background:#d9d9d9;"></div>
<svg class="ab" style="left:2242.9px;top:679.35px;" width="25" height="17" viewBox="0 0 25 17"><path d="M2.5,3 L12.5,12.7 L22.5,3" fill="none" stroke="#707070" stroke-width="3.2"/></svg>
<span class="t" style="left:1887.68px;top:676.17px;font-size:24.5px;color:#000;transform:scaleX(1.0086);">Black</span>
<span class="t" style="left:1020.32px;top:764.17px;font-size:24.5px;color:#000;transform:scaleX(0.9886);">Player Handedness Color (R)</span>
<span class="t" style="left:1449.33px;top:764.17px;font-size:24.5px;color:#000;transform:scaleX(0.9825);">Player Handedness Color (S)</span>
<span class="t" style="left:1879.16px;top:764.17px;font-size:24.5px;color:#000;transform:scaleX(1.0694);">Print Filters</span>
<div class="ab" style="left:1021.4px;top:794.4px;width:400.5px;height:59.2px;background:#fff;border:1px solid #d9d9d9;"></div>
<div class="ab" style="left:1372.9px;top:795.4px;width:1px;height:57.2px;background:#d9d9d9;"></div>
<svg class="ab" style="left:1383.9px;top:816.0px;" width="25" height="17" viewBox="0 0 25 17"><path d="M2.5,3 L12.5,12.7 L22.5,3" fill="none" stroke="#707070" stroke-width="3.2"/></svg>
<span class="t" style="left:1028.16px;top:813.27px;font-size:24.5px;color:#000;transform:scaleX(1.0207);">Black</span>
<div class="ab" style="left:1451.3px;top:794.4px;width:400.5px;height:59.2px;background:#fff;border:1px solid #d9d9d9;"></div>
<div class="ab" style="left:1802.8px;top:795.4px;width:1px;height:57.2px;background:#d9d9d9;"></div>
<svg class="ab" style="left:1813.8px;top:816.0px;" width="25" height="17" viewBox="0 0 25 17"><path d="M2.5,3 L12.5,12.7 L22.5,3" fill="none" stroke="#707070" stroke-width="3.2"/></svg>
<span class="t" style="left:1457.67px;top:813.27px;font-size:24.5px;color:#000;transform:scaleX(1.0138);">Black</span>
<div class="ab" style="left:1882px;top:816px;width:53px;height:24.2px;background:#98a9c5;border-radius:12.1px;"></div>
<div class="ab" style="left:1911px;top:810px;width:36px;height:36px;background:#375a8a;border-radius:50%;box-shadow:0 1px 3px rgba(0,0,0,0.35);"></div>
<div class="ab" style="left:1432px;top:324.8px;width:436.8px;height:146.4px;border:10.3px solid #72f24b;border-radius:46px;"></div>
<div class="ab" style="left:0px;top:1478px;width:22px;height:22px;background:radial-gradient(circle at 100% 0%, rgba(0,0,0,0) 20.5px, #59606a 21px, #59606a 22px, #15150f 23px);"></div>
<div class="ab" style="left:2856px;top:1478px;width:22px;height:22px;background:radial-gradient(circle at 0% 0%, rgba(0,0,0,0) 21px, #1d1a12 22.5px);"></div>
<div class="ab" style="left:21px;top:1498px;width:65px;height:2px;background:#59606a;"></div>
</body></html>
